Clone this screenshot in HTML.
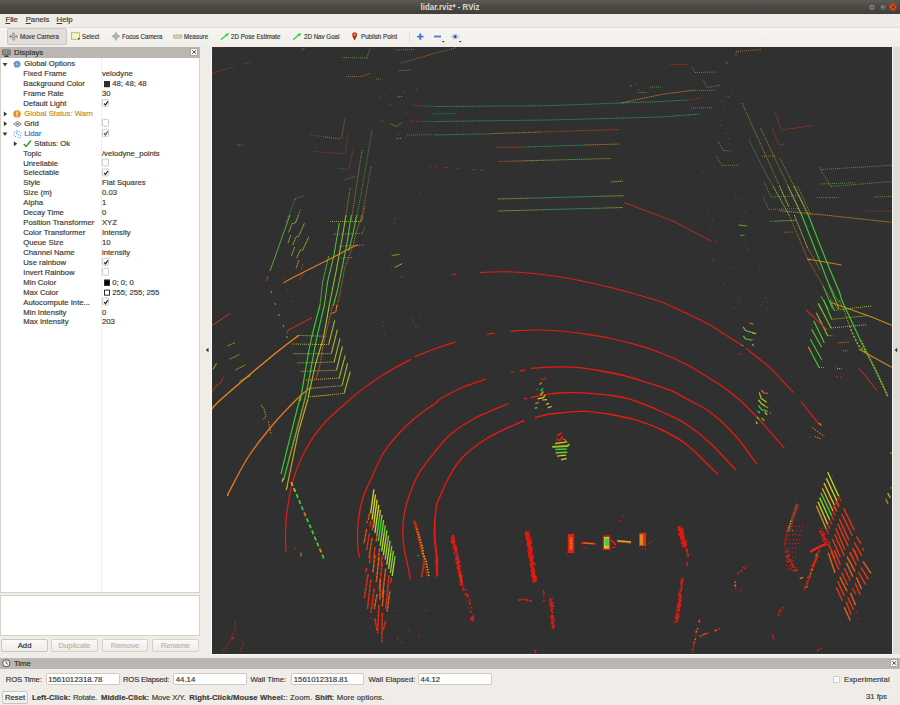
<!DOCTYPE html>
<html><head><meta charset="utf-8"><title>lidar.rviz* - RViz</title>
<style>
*{box-sizing:border-box;margin:0;padding:0}
html,body{width:900px;height:705px;overflow:hidden;background:#f0ede8;font-family:"Liberation Sans",sans-serif;font-size:7.7px;color:#3c3b37;-webkit-text-stroke:0.18px}
.abs{position:absolute}
#title{left:0;top:0;width:900px;height:14px;background:linear-gradient(#5c5a53,#4a4843 55%,#3f3e39)}
#title .t{position:absolute;left:0;width:900px;top:2.2px;text-align:center;color:#dfdbd2;font-weight:bold;font-size:8.3px;line-height:10px;-webkit-text-stroke:0;transform:scaleX(0.95)}
.wb{position:absolute;top:2.8px;width:8.2px;height:8.2px;border-radius:50%;background:#807d76;border:0.6px solid #403f3a}
#menubar{left:0;top:14px;width:900px;height:13px;background:#efece7}
#menubar span{position:absolute;top:1.3px;line-height:10px;font-size:7.75px;color:#3c3b37}
#toolbar{left:0;top:26.5px;width:900px;height:19px;background:linear-gradient(#f7f5f2,#f1eeea);border-top:0.6px solid #e2dfd9}
.tb{position:absolute;top:4.6px;height:10px;line-height:10px;font-size:7.1px;color:#3c3b37;white-space:nowrap;transform-origin:0 50%;transform:scaleX(0.872)}
#displays{left:0;top:47px;width:200px;height:11px;background:#bab6b2}
.hdr{font-size:7.7px;line-height:10px;color:#2e2d2a}
.closeb{position:absolute;width:8.4px;height:8px;background:#fbfaf8;border:0.5px solid #a9a5a0;border-radius:1px}
#tree{left:0.2px;top:58px;width:199.7px;height:534.5px;background:#fff;border:0.7px solid #d5d1cb;border-top:none}
#tree .sep{position:absolute;left:99.4px;top:0;width:0.7px;height:100%;background:#f0eeeb}
.row{position:absolute;left:-0.9px;width:199px;height:10px;line-height:10px;white-space:nowrap;font-size:7.7px}
.row .l{position:absolute;left:23.5px;top:0}
.row .v{position:absolute;left:101.7px;top:0}
.cb{position:absolute;left:101.7px;top:0.3px;width:7.1px;height:7.3px;border:0.55px solid #cdc9c4;background:#fff;border-radius:1.2px}
.sw{position:absolute;left:103.3px;top:1.7px;width:6.4px;height:6.4px;border:0.5px solid #2a2a2a}
#desc{left:0.2px;top:594.8px;width:199.7px;height:40.8px;background:#fff;border:0.7px solid #d5d1cb}
.btn{position:absolute;top:639.3px;height:12.9px;width:47px;border:0.7px solid #c9c5bf;border-radius:2px;background:linear-gradient(#fbfaf9,#efece8);text-align:center;line-height:11.2px;font-size:7.7px;color:#2e2d2a}
.btn.dis{color:#b8b4ae;border-color:#d4d0ca}
#view{left:211.8px;top:46.8px;width:680px;height:607px;background:#303030;overflow:hidden;box-shadow:-0.9px 0 0 #fbfaf8, 0 0.9px 0 #fbfaf8}
#rstrip{left:892px;top:46.5px;width:8px;height:607.5px;background:#dfdcd8;border-left:0.6px solid #f6f4f0}
#timeh{left:0;top:658px;width:900px;height:10.6px;background:#bab6b2}
.inp{position:absolute;top:672.6px;height:12.8px;background:#fff;border:0.7px solid #cdc9c3;border-radius:1.8px;line-height:11px;font-size:7.8px;padding-left:1.6px;color:#3c3b37}
.lab{position:absolute;top:674.8px;line-height:10px;font-size:7.7px;color:#3c3b37;white-space:nowrap}
#status{left:0;top:691px;width:900px;height:14px}
</style></head><body>
<div id="title" class="abs"><div class="t">lidar.rviz* - RViz</div>
<div class="wb" style="left:868px"></div><div class="wb" style="left:878.6px"></div><div class="wb" style="left:889.1px;background:#ea5a22;border-color:#9c3a14"></div>
<svg class="abs" style="left:860px;top:0" width="40" height="14" viewBox="0 0 40 14"><path d="M10 7 H14.3" stroke="#4b4a45" stroke-width="1"/><rect x="20.8" y="5" width="3.9" height="3.9" fill="none" stroke="#4b4a45" stroke-width="0.9"/><path d="M31.4 5.1 L35.1 8.8 M35.1 5.1 L31.4 8.8" stroke="#7c2a0c" stroke-width="1.1"/></svg>
</div>
<div id="menubar" class="abs"><span style="left:5.4px"><u>F</u>ile</span><span style="left:25.7px"><u>P</u>anels</span><span style="left:56.6px"><u>H</u>elp</span></div>
<div id="toolbar" class="abs">
<div class="abs" style="left:6.7px;top:0.7px;width:60.8px;height:16.6px;border:0.7px solid #cbc8c3;border-radius:2px;background:#e2dfdb"></div>
<svg class="abs" style="left:0;top:-0.6px" width="470" height="19" viewBox="0 0 470 19">
<path d="M2.2 4 V15 M3.8 4 V15" stroke="#dedad4" stroke-width="0.6" stroke-dasharray="0.8 1.4"/>
<!-- move camera -->
<g fill="#8c8c8c"><path d="M13.5 5 L15.6 7.4 H14.3 V11.6 H15.6 L13.5 14 L11.4 11.6 H12.7 V7.4 H11.4Z"/><path d="M9 9.5 L10.4 7.6 V8.7 H16.6 V7.6 L18 9.5 L16.6 11.4 V10.3 H10.4 V11.4Z"/></g>
<circle cx="13.5" cy="7" r="0.55" fill="#fff"/><circle cx="13.5" cy="9.5" r="0.55" fill="#fff"/><circle cx="13.5" cy="12" r="0.55" fill="#fff"/>
<!-- select -->
<rect x="71.5" y="5.8" width="8" height="6.4" fill="#f8f6b2" stroke="#8e8d80" stroke-width="0.6"/><rect x="78.2" y="11" width="1.3" height="1.3" fill="#111"/>
<!-- focus camera -->
<path d="M115.9 4.7 L117.6 7.6 L120.6 9.3 L117.6 11 L115.9 13.9 L114.2 11 L111.2 9.3 L114.2 7.6Z" fill="#a8a8a8"/>
<circle cx="115.9" cy="9.3" r="1.6" fill="none" stroke="#c4c4c4" stroke-width="0.6"/><circle cx="115.9" cy="9.3" r="0.6" fill="#c8c8c8"/>
<!-- measure -->
<rect x="173.6" y="7.9" width="8.3" height="3.3" rx="0.5" fill="#dad6a2" stroke="#99978a" stroke-width="0.6"/>
<!-- green arrows -->
<path d="M221.3 12.2 L226.2 8.2" stroke="#1ee035" stroke-width="1.4" stroke-linecap="round"/><path d="M229 6 L227.4 9.6 L225 7.1Z" fill="#1ee035"/>
<path d="M293.6 12.2 L298.5 8.2" stroke="#1ee035" stroke-width="1.4" stroke-linecap="round"/><path d="M301.3 6 L299.7 9.6 L297.3 7.1Z" fill="#1ee035"/>
<!-- publish point pin -->
<path d="M354.6 13.6 C353.6 11 352.1 9.4 352.1 7.8 A2.55 2.55 0 0 1 357.2 7.8 C357.2 9.4 355.6 11 354.6 13.6Z" fill="#c8401e"/><path d="M354.6 13.6 C354 11.8 353.2 10.8 352.6 9.6 H356.6 C356 10.8 355.2 11.8 354.6 13.6Z" fill="#8a3a1a"/><circle cx="354.6" cy="7.7" r="0.9" fill="#f0a080"/>
<!-- separator -->
<path d="M409.6 4.5 V15" stroke="#dcd8d2" stroke-width="0.7"/>
<!-- plus -->
<path d="M420.3 6.4 V12.8 M417.1 9.6 H423.5" stroke="#3b79c9" stroke-width="1.9"/>
<!-- minus -->
<path d="M434 9.5 H441" stroke="#4a84cf" stroke-width="1.9"/><path d="M442 14 H444.6 L443.3 15.4Z" fill="#222"/>
<!-- eye -->
<path d="M451.2 9.8 C453 6.6 457.4 6.6 459.2 9.8 C457.4 12.6 453 12.6 451.2 9.8Z" fill="#e4e6ec" stroke="#9aa0b0" stroke-width="0.5"/><circle cx="455.2" cy="9.6" r="1.7" fill="#3a66b8"/><circle cx="455.2" cy="9.6" r="0.7" fill="#16223c"/>
<path d="M459 14 H461.6 L460.3 15.4Z" fill="#222"/>
</svg>

<div class="tb" style="left:20.1px">Move Camera</div>
<div class="tb" style="left:81.6px">Select</div>
<div class="tb" style="left:122.4px">Focus Camera</div>
<div class="tb" style="left:184.1px">Measure</div>
<div class="tb" style="left:231.1px">2D Pose Estimate</div>
<div class="tb" style="left:303.6px">2D Nav Goal</div>
<div class="tb" style="left:361.1px">Publish Point</div>
</div>
<div id="displays" class="abs hdr"><span class="abs" style="left:14.1px;top:0.6px">Displays</span><div class="closeb" style="left:189.9px;top:1px"></div>
<svg class="abs" style="left:189.9px;top:1px" width="8.4" height="8" viewBox="0 0 8.4 8"><path d="M2.4 2.2 L6 5.8 M6 2.2 L2.4 5.8" stroke="#3c3b37" stroke-width="1"/></svg>
<svg class="abs" style="left:2px;top:1.6px" width="9" height="8.4" viewBox="0 0 9 8.4"><rect x="0.4" y="0.4" width="8.2" height="5.8" rx="0.6" fill="#555" /><rect x="1.1" y="1" width="2.3" height="4.6" fill="#d86a6a"/><rect x="3.4" y="1" width="2.2" height="4.6" fill="#6cc06c"/><rect x="5.6" y="1" width="2.3" height="4.6" fill="#7c7ce0"/><path d="M3.6 6.2 H5.4 L5.8 7.4 H7 V8 H2 V7.4 H3.2Z" fill="#333"/></svg>
</div>
<div id="tree" class="abs"><div class="sep"></div>
<div class="row" style="top:0;transform:translateY(1.25px)"><svg class="abs" style="left:2px;top:3px" width="6" height="5" viewBox="0 0 6 5"><path d="M0.6 0.8 L5.4 0.8 L3 4.2Z" fill="#3c3b37"/></svg><svg class="abs" style="left:13px;top:1px" width="8" height="8" viewBox="0 0 8 8"><circle cx="4" cy="4" r="2.9" fill="#6f9bd6" stroke="#4a79bd" stroke-width="1.3" stroke-dasharray="1.1 0.7"/><circle cx="4" cy="4" r="1" fill="#a9c4e8"/></svg><span class="l" style="left:24px;">Global Options</span></div>
<div class="row" style="top:0;transform:translateY(11.18px)"><span class="l" style="left:23px;">Fixed Frame</span><span class="v">velodyne</span></div>
<div class="row" style="top:0;transform:translateY(21.11px)"><span class="l" style="left:23px;">Background Color</span><div class="sw" style="background:#303030"></div><span class="v" style="left:112px">48; 48; 48</span></div>
<div class="row" style="top:0;transform:translateY(31.04px)"><span class="l" style="left:23px;">Frame Rate</span><span class="v">30</span></div>
<div class="row" style="top:0;transform:translateY(40.97px)"><span class="l" style="left:23px;">Default Light</span><div class="cb"><svg class="abs" style="left:0;top:0" width="6.4" height="6.4" viewBox="0 0 6.4 6.4"><path d="M1.1 3.5 L2.5 5.1 L4.9 1.5" fill="none" stroke="#2a2a2a" stroke-width="1.25"/></svg></div></div>
<div class="row" style="top:0;transform:translateY(50.9px)"><svg class="abs" style="left:3px;top:2px" width="5" height="6" viewBox="0 0 5 6"><path d="M0.8 0.5 L4.2 3 L0.8 5.5Z" fill="#3c3b37"/></svg><svg class="abs" style="left:13px;top:1px" width="8" height="8" viewBox="0 0 8 8"><circle cx="4" cy="4" r="3.7" fill="#f08a1d"/><rect x="3.4" y="1.6" width="1.2" height="3.2" fill="#fff"/><rect x="3.4" y="5.4" width="1.2" height="1.2" fill="#fff"/></svg><span class="l" style="left:24px;color:#c98d26">Global Status: Warn</span></div>
<div class="row" style="top:0;transform:translateY(60.83px)"><svg class="abs" style="left:3px;top:2px" width="5" height="6" viewBox="0 0 5 6"><path d="M0.8 0.5 L4.2 3 L0.8 5.5Z" fill="#3c3b37"/></svg><svg class="abs" style="left:13px;top:2px" width="9" height="7" viewBox="0 0 9 7"><path d="M4.5 0.6 L8.3 3.2 L4.5 5.8 L0.7 3.2Z M2.6 1.9 L6.4 4.5 M6.4 1.9 L2.6 4.5" fill="none" stroke="#555" stroke-width="0.7"/></svg><span class="l" style="left:24px;">Grid</span><div class="cb"></div></div>
<div class="row" style="top:0;transform:translateY(70.76px)"><svg class="abs" style="left:2px;top:3px" width="6" height="5" viewBox="0 0 6 5"><path d="M0.6 0.8 L5.4 0.8 L3 4.2Z" fill="#3c3b37"/></svg><svg class="abs" style="left:13px;top:0.5px" width="9" height="9" viewBox="0 0 9 9"><rect x="1" y="2" width="1" height="1" fill="#3d8fd8"/><rect x="3" y="0.5" width="1" height="1" fill="#3d8fd8"/><rect x="5.5" y="1" width="1" height="1" fill="#3d8fd8"/><rect x="7.5" y="2.5" width="1" height="1" fill="#3d8fd8"/><rect x="0.5" y="4.5" width="1" height="1" fill="#3d8fd8"/><rect x="3" y="3.5" width="1" height="1" fill="#3d8fd8"/><rect x="5" y="4.5" width="1" height="1" fill="#3d8fd8"/><rect x="7" y="5.5" width="1" height="1" fill="#3d8fd8"/><rect x="2" y="6.5" width="1" height="1" fill="#3d8fd8"/><rect x="4.5" y="7" width="1" height="1" fill="#3d8fd8"/><rect x="6.5" y="7.5" width="1" height="1" fill="#3d8fd8"/><rect x="3.8" y="2" width="1" height="1" fill="#3d8fd8"/></svg><span class="l" style="left:24px;color:#1f72c8">Lidar</span><div class="cb"><svg class="abs" style="left:0;top:0" width="6.4" height="6.4" viewBox="0 0 6.4 6.4"><path d="M1.1 3.5 L2.5 5.1 L4.9 1.5" fill="none" stroke="#2a5db0" stroke-width="1.25"/></svg></div></div>
<div class="row" style="top:0;transform:translateY(80.69px)"><svg class="abs" style="left:13px;top:2px" width="5" height="6" viewBox="0 0 5 6"><path d="M0.8 0.5 L4.2 3 L0.8 5.5Z" fill="#3c3b37"/></svg><svg class="abs" style="left:23px;top:1px" width="9" height="8" viewBox="0 0 9 8"><path d="M0.8 4.4 L3 6.8 L8 0.8" fill="none" stroke="#2c9a2c" stroke-width="1.4"/></svg><span class="l" style="left:34px;">Status: Ok</span></div>
<div class="row" style="top:0;transform:translateY(90.62px)"><span class="l" style="left:23px;">Topic</span><span class="v">/velodyne_points</span></div>
<div class="row" style="top:0;transform:translateY(100.55px)"><span class="l" style="left:23px;">Unreliable</span><div class="cb"></div></div>
<div class="row" style="top:0;transform:translateY(110.48px)"><span class="l" style="left:23px;">Selectable</span><div class="cb"><svg class="abs" style="left:0;top:0" width="6.4" height="6.4" viewBox="0 0 6.4 6.4"><path d="M1.1 3.5 L2.5 5.1 L4.9 1.5" fill="none" stroke="#2a2a2a" stroke-width="1.25"/></svg></div></div>
<div class="row" style="top:0;transform:translateY(120.41px)"><span class="l" style="left:23px;">Style</span><span class="v">Flat Squares</span></div>
<div class="row" style="top:0;transform:translateY(130.34px)"><span class="l" style="left:23px;">Size (m)</span><span class="v">0.03</span></div>
<div class="row" style="top:0;transform:translateY(140.27px)"><span class="l" style="left:23px;">Alpha</span><span class="v">1</span></div>
<div class="row" style="top:0;transform:translateY(150.2px)"><span class="l" style="left:23px;">Decay Time</span><span class="v">0</span></div>
<div class="row" style="top:0;transform:translateY(160.13px)"><span class="l" style="left:23px;">Position Transformer</span><span class="v">XYZ</span></div>
<div class="row" style="top:0;transform:translateY(170.06px)"><span class="l" style="left:23px;">Color Transformer</span><span class="v">Intensity</span></div>
<div class="row" style="top:0;transform:translateY(179.99px)"><span class="l" style="left:23px;">Queue Size</span><span class="v">10</span></div>
<div class="row" style="top:0;transform:translateY(189.92px)"><span class="l" style="left:23px;">Channel Name</span><span class="v">intensity</span></div>
<div class="row" style="top:0;transform:translateY(199.85px)"><span class="l" style="left:23px;">Use rainbow</span><div class="cb"><svg class="abs" style="left:0;top:0" width="6.4" height="6.4" viewBox="0 0 6.4 6.4"><path d="M1.1 3.5 L2.5 5.1 L4.9 1.5" fill="none" stroke="#2a2a2a" stroke-width="1.25"/></svg></div></div>
<div class="row" style="top:0;transform:translateY(209.78px)"><span class="l" style="left:23px;">Invert Rainbow</span><div class="cb"></div></div>
<div class="row" style="top:0;transform:translateY(219.71px)"><span class="l" style="left:23px;">Min Color</span><div class="sw" style="background:#000000"></div><span class="v" style="left:112px">0; 0; 0</span></div>
<div class="row" style="top:0;transform:translateY(229.64px)"><span class="l" style="left:23px;">Max Color</span><div class="sw" style="background:#ffffff"></div><span class="v" style="left:112px">255; 255; 255</span></div>
<div class="row" style="top:0;transform:translateY(239.57px)"><span class="l" style="left:23px;">Autocompute Inte...</span><div class="cb"><svg class="abs" style="left:0;top:0" width="6.4" height="6.4" viewBox="0 0 6.4 6.4"><path d="M1.1 3.5 L2.5 5.1 L4.9 1.5" fill="none" stroke="#2a2a2a" stroke-width="1.25"/></svg></div></div>
<div class="row" style="top:0;transform:translateY(249.5px)"><span class="l" style="left:23px;">Min Intensity</span><span class="v">0</span></div>
<div class="row" style="top:0;transform:translateY(259.43px)"><span class="l" style="left:23px;">Max Intensity</span><span class="v">203</span></div>
</div>
<div id="desc" class="abs"></div>
<div class="btn" style="left:1.4px;width:46.4px">Add</div><div class="btn dis" style="left:51.4px;width:46.4px">Duplicate</div><div class="btn dis" style="left:101.6px;width:46.8px">Remove</div><div class="btn dis" style="left:152px;width:46.6px">Rename</div>
<div id="view" class="abs"></div>
<svg class="abs" style="left:0;top:0" width="900" height="705" viewBox="0 0 900 705"><defs><clipPath id="vp"><rect x="212" y="47" width="680" height="607"/></clipPath><linearGradient id="g1" gradientUnits="userSpaceOnUse" x1="498" y1="161.5" x2="611" y2="158.5"><stop offset="0" stop-color="#c03c28"/><stop offset="0.2" stop-color="#c8842c"/><stop offset="0.3" stop-color="#bcb032"/><stop offset="0.45" stop-color="#60b43c"/><stop offset="0.85" stop-color="#60b43c"/><stop offset="1" stop-color="#c8842c"/></linearGradient><linearGradient id="g2" gradientUnits="userSpaceOnUse" x1="498" y1="199" x2="623.5" y2="195.7"><stop offset="0" stop-color="#b0a030"/><stop offset="0.15" stop-color="#70a838"/><stop offset="0.4" stop-color="#30a070"/><stop offset="0.6" stop-color="#2898b0"/><stop offset="0.75" stop-color="#30a070"/><stop offset="0.9" stop-color="#80a838"/><stop offset="1" stop-color="#b0a030"/></linearGradient><linearGradient id="g3" gradientUnits="userSpaceOnUse" x1="498.5" y1="211" x2="623" y2="207.5"><stop offset="0" stop-color="#b88830"/><stop offset="0.15" stop-color="#a0a030"/><stop offset="0.4" stop-color="#40a050"/><stop offset="0.55" stop-color="#2898a8"/><stop offset="0.75" stop-color="#40a050"/><stop offset="1" stop-color="#a8a030"/></linearGradient></defs><g clip-path="url(#vp)" fill="none" stroke-linecap="butt" stroke-linejoin="round">
<path d="M451.5 274.5 C452.25 274.43 455.25 274.17 456 274.1" stroke="#e81a12" stroke-width="1.1"/>
<path d="M479.7 272.5 C483.87 272.37 495.32 271.5 504.7 271.7 C514.08 271.9 524.53 272.45 536 273.7 C547.47 274.95 561 276.9 573.5 279.2 C586 281.5 600.58 285 611 287.5 C621.42 290 627.67 291.83 636 294.2 C644.33 296.57 652.67 298.57 661 301.7 C669.33 304.83 677.67 309.03 686 313 C694.33 316.97 704.5 321.9 711 325.5 C717.5 329.1 719.83 331.32 725 334.6 C730.17 337.88 739.17 343.43 742 345.2" stroke="#e81a12" stroke-width="1.1"/>
<path d="M745.9 348.4 C749.22 351 760.95 359.95 765.8 364 C770.65 368.05 772.3 369.98 775 372.7 C777.7 375.42 778.88 376.97 782 380.3 C785.12 383.63 791.75 390.63 793.7 392.7" stroke="#e81a12" stroke-width="1.1"/>
<path d="M801 401.5 C804.12 405.45 816.58 421.25 819.7 425.2" stroke="#e81a12" stroke-width="1.1"/>
<path d="M286 552.7 C285.92 550 285.33 543.37 285.5 536.5 C285.67 529.63 285.67 521.08 287 511.5 C288.33 501.92 290.33 489.42 293.5 479 C296.67 468.58 301 458.17 306 449 C311 439.83 316 432.42 323.5 424 C331 415.58 343.25 405.22 351 398.5 C358.75 391.78 364.17 387.95 370 383.7 C375.83 379.45 379.17 377.08 386 373 C392.83 368.92 406.83 361.5 411 359.2" stroke="#e81a12" stroke-width="1.2"/>
<path d="M414.7 356.7 C418.25 355.33 429.12 351 436 348.5 C442.88 346 452.67 342.83 456 341.7" stroke="#e81a12" stroke-width="1.2"/>
<path d="M487 334.2 C488.28 334.03 493.42 333.37 494.7 333.2" stroke="#e81a12" stroke-width="1.2"/>
<path d="M510.5 331.2 C514.75 331 527.58 330.03 536 330 C544.42 329.97 552.67 330.3 561 331 C569.33 331.7 577.67 332.95 586 334.2 C594.33 335.45 602.67 336.75 611 338.5 C619.33 340.25 627.67 342.28 636 344.7 C644.33 347.12 652.67 349.75 661 353 C669.33 356.25 677.67 359.83 686 364.2 C694.33 368.57 704.5 375.17 711 379.2 C717.5 383.23 719.95 384.68 725 388.4 C730.05 392.12 735.3 395.98 741.3 401.5 C747.3 407.02 753.77 413.67 761 421.5 C768.23 429.33 780.75 444 784.7 448.5" stroke="#e81a12" stroke-width="1.2"/>
<path d="M359.4 557.8 C359.13 555.95 358.1 551.33 357.8 546.7 C357.5 542.07 357.33 535.57 357.6 530 C357.87 524.43 358.45 518.85 359.4 513.3 C360.35 507.75 361.37 502.42 363.3 496.7 C365.23 490.98 367.22 486.95 371 479 C374.78 471.05 379.33 458.58 386 449 C392.67 439.42 402.67 429.22 411 421.5 C419.33 413.78 431 406.53 436 402.7 C441 398.87 436.83 400.95 441 398.5 C445.17 396.05 453.5 391.22 461 388 C468.5 384.78 481.83 380.67 486 379.2" stroke="#e81a12" stroke-width="1.3"/>
<path d="M511 372.6 C511.42 372.53 513.08 372.27 513.5 372.2" stroke="#e81a12" stroke-width="1.3"/>
<path d="M519.7 371 C520.58 370.83 524.12 370.17 525 370" stroke="#e81a12" stroke-width="1.3"/>
<path d="M531 368.5 C533.92 368.28 541.42 367.42 548.5 367.2 C555.58 366.98 565.17 366.65 573.5 367.2 C581.83 367.75 590.17 369.12 598.5 370.5 C606.83 371.88 615.17 373.42 623.5 375.5 C631.83 377.58 642.25 381.08 648.5 383 C654.75 384.92 656.83 385.55 661 387 C665.17 388.45 669.33 389.78 673.5 391.7 C677.67 393.62 679.75 395 686 398.5 C692.25 402 702.67 406.37 711 412.7 C719.33 419.03 728.3 427.87 736 436.5 C743.7 445.13 753.67 459.83 757.2 464.5" stroke="#e81a12" stroke-width="1.3"/>
<path d="M410.6 579.3 C409.85 575.72 407.22 563.23 406.1 557.8 C404.98 552.37 404.45 551.33 403.9 546.7 C403.35 542.07 402.72 535.57 402.8 530 C402.88 524.43 403.38 518.85 404.4 513.3 C405.42 507.75 406.55 503.25 408.9 496.7 C411.25 490.15 413.98 481.7 418.5 474 C423.02 466.3 430.58 457.17 436 450.5 C441.42 443.83 444.75 439.25 451 434 C457.25 428.75 463.92 424.08 473.5 419 C483.08 413.92 502.67 406.08 508.5 403.5" stroke="#e81a12" stroke-width="1.35"/>
<path d="M524 399 C524.57 398.88 526.83 398.42 527.4 398.3" stroke="#e81a12" stroke-width="1.35"/>
<path d="M530.5 397.5 C533.05 397.02 541.05 395.35 545.8 394.6 C550.55 393.85 554.18 393.32 559 393 C563.82 392.68 569.53 392.63 574.7 392.7 C579.87 392.77 583.95 392.93 590 393.4 C596.05 393.87 605 394.7 611 395.5 C617 396.3 620.58 396.78 626 398.2 C631.42 399.62 637.67 401.78 643.5 404 C649.33 406.22 653.92 408.17 661 411.5 C668.08 414.83 677.67 418.58 686 424 C694.33 429.42 702.67 436.3 711 444 C719.33 451.7 731.83 465.83 736 470.2" stroke="#e81a12" stroke-width="1.35"/>
<path d="M437.2 566 C437.08 564.17 436.93 560 436.5 555 C436.07 550 434.85 542 434.6 536 C434.35 530 434.6 524.33 435 519 C435.4 513.67 435.92 508.33 437 504 C438.08 499.67 439.83 496.83 441.5 493 C443.17 489.17 443.75 486.67 447 481 C450.25 475.33 454.5 466 461 459 C467.5 452 476.17 445.12 486 439 C495.83 432.88 513.67 425.23 520 422.3 C526.33 419.37 523.33 421.55 524 421.4" stroke="#e81a12" stroke-width="1.4"/>
<path d="M437 577 L437.3 566" stroke="#e81a12" stroke-width="1.2" stroke-dasharray="1 1"/>
<path d="M534.8 417.7 C536.88 417.17 542.6 415.35 547.3 414.5 C552 413.65 557.78 413.12 563 412.6 C568.22 412.08 574.1 411.57 578.6 411.4 C583.1 411.23 584.6 411.08 590 411.6 C595.4 412.12 603.33 413.07 611 414.5 C618.67 415.93 627.67 417.7 636 420.2 C644.33 422.7 652.67 425.53 661 429.5 C669.33 433.47 678.5 438.47 686 444 C693.5 449.53 700.67 457.62 706 462.7 C711.33 467.78 716 472.53 718 474.5" stroke="#e81a12" stroke-width="1.4"/>
<path d="M212 73 L235 66.5" stroke="#c03c28" stroke-width="1.0" stroke-dasharray="0.9 1.1" opacity="0.8"/>
<path d="M243.5 64 L251 62.5" stroke="#c03c28" stroke-width="1.0" stroke-dasharray="0.9 1.1" opacity="0.8"/>
<path d="M301 50 L305 48" stroke="#bcb032" stroke-width="1.0" stroke-dasharray="0.9 1.1" opacity="0.8"/>
<path d="M342 57.5 L367 58" stroke="#60b43c" stroke-width="1.0" stroke-dasharray="0.9 1.1" opacity="0.8"/>
<path d="M367 58 L370 48" stroke="#c8842c" stroke-width="1.0" stroke-dasharray="0.9 1.1" opacity="0.8"/>
<path d="M346 76.5 L361 76.5 L371 73" stroke="#c8842c" stroke-width="1.0" stroke-dasharray="0.9 1.1" opacity="0.8"/>
<path d="M395 50 L415 49.5" stroke="#60b43c" stroke-width="1.0" stroke-dasharray="0.9 1.1" opacity="0.8"/>
<path d="M401 63 L436 53 L457 47.5" stroke="#c8842c" stroke-width="1.0" stroke-dasharray="0.9 1.1" opacity="0.8"/>
<path d="M398.5 70.7 L411 70" stroke="#60b43c" stroke-width="1.0" stroke-dasharray="0.9 1.1" opacity="0.8"/>
<path d="M376 79 L382 79" stroke="#60b43c" stroke-width="1.0" stroke-dasharray="0.9 1.1" opacity="0.8"/>
<path d="M397 97 L402 96.5" stroke="#bcb032" stroke-width="1.0" stroke-dasharray="0.9 1.1" opacity="0.8"/>
<path d="M412 105 L422 106" stroke="#c03c28" stroke-width="1.0" stroke-dasharray="0.9 1.1" opacity="0.8"/>
<path d="M423.5 106 L436 106.5" stroke="#30a060" stroke-width="1.0" stroke-dasharray="0.9 1.1" opacity="0.8"/>
<path d="M432 114 L455 113.5" stroke="#30a060" stroke-width="1.0" stroke-dasharray="0.9 1.1" opacity="0.8"/>
<path d="M410 121 L423.5 121.5" stroke="#c03c28" stroke-width="1.0" stroke-dasharray="0.9 1.1" opacity="0.8"/>
<path d="M423.5 121.5 L436 121.5" stroke="#30a060" stroke-width="1.0" stroke-dasharray="0.9 1.1" opacity="0.8"/>
<path d="M390 124 L397 126.5 L402 122" stroke="#bcb032" stroke-width="1.0" stroke-dasharray="0.9 1.1" opacity="0.8"/>
<path d="M407 135 L436 134.7" stroke="#30a060" stroke-width="1.0" stroke-dasharray="0.9 1.1" opacity="0.8"/>
<path d="M396 138.7 L401 138.5" stroke="#bcb032" stroke-width="1.0" stroke-dasharray="0.9 1.1" opacity="0.8"/>
<path d="M344.7 119.5 L341.7 138" stroke="#c8842c" stroke-width="1.0" stroke-dasharray="0.9 1.1" opacity="0.8"/>
<path d="M311 135 L325 137" stroke="#c03c28" stroke-width="1.0" stroke-dasharray="0.9 1.1" opacity="0.8"/>
<path d="M325 137 L333 138" stroke="#bcb032" stroke-width="1.0" stroke-dasharray="0.9 1.1" opacity="0.8"/>
<path d="M333 138 L341 139" stroke="#60b43c" stroke-width="1.0" stroke-dasharray="0.9 1.1" opacity="0.8"/>
<path d="M314.7 151.5 L344.7 154" stroke="#c03c28" stroke-width="1.0" stroke-dasharray="0.9 1.1" opacity="0.8"/>
<path d="M348 135 L345 154" stroke="#c03c28" stroke-width="1.0" stroke-dasharray="0.9 1.1" opacity="0.8"/>
<path d="M337 168 L348.5 169.5" stroke="#c03c28" stroke-width="1.0" stroke-dasharray="0.9 1.1" opacity="0.8"/>
<path d="M353 150 L349 169.5" stroke="#c03c28" stroke-width="1.0" stroke-dasharray="0.9 1.1" opacity="0.8"/>
<path d="M344.7 180 L355.5 176" stroke="#c8842c" stroke-width="1.0" stroke-dasharray="0.9 1.1" opacity="0.8"/>
<path d="M237 145 L242 145" stroke="#60b43c" stroke-width="1.0" stroke-dasharray="0.9 1.1" opacity="0.8"/>
<path d="M372 131 L356 222" stroke="#60b43c" stroke-width="1.0" stroke-dasharray="0.9 1.1" opacity="0.8"/>
<path d="M362 150 L351 222" stroke="#bcb032" stroke-width="1.0" stroke-dasharray="0.9 1.1" opacity="0.8"/>
<path d="M371 167 L361 222" stroke="#c8842c" stroke-width="1.0" stroke-dasharray="0.9 1.1" opacity="0.8"/>
<path d="M350 188 L345 222" stroke="#bcb032" stroke-width="1.0" stroke-dasharray="0.9 1.1" opacity="0.8"/>
<path d="M365 206 L361.5 222" stroke="#c8842c" stroke-width="1.0" stroke-dasharray="0.9 1.1" opacity="0.8"/>
<path d="M330 221.5 L361 221.5" stroke="#60b43c" stroke-width="1.0" stroke-dasharray="0.9 1.1" opacity="0.8"/>
<path d="M303.5 196 L295 199" stroke="#c8842c" stroke-width="1.0" stroke-dasharray="0.9 1.1" opacity="0.8"/>
<path d="M295 199 L286 223" stroke="#60b43c" stroke-width="1.0" stroke-dasharray="0.9 1.1" opacity="0.8"/>
<path d="M300.5 209.5 L296 222" stroke="#bcb032" stroke-width="1.0" stroke-dasharray="0.9 1.1" opacity="0.8"/>
<path d="M391 88 L392.2 88.4" stroke="#c03c28" stroke-width="1.0" opacity="0.8"/>
<path d="M416 89.5 L417.2 89.9" stroke="#c03c28" stroke-width="1.0" opacity="0.8"/>
<path d="M380 97 L381.2 97.4" stroke="#c03c28" stroke-width="1.0" opacity="0.8"/>
<path d="M390 104.5 L391.2 104.9" stroke="#c03c28" stroke-width="1.0" opacity="0.8"/>
<path d="M404 92 L405.2 92.4" stroke="#c03c28" stroke-width="1.0" opacity="0.8"/>
<path d="M405 113 L406.2 113.4" stroke="#c03c28" stroke-width="1.0" opacity="0.8"/>
<path d="M382 120.5 L383.2 120.9" stroke="#c03c28" stroke-width="1.0" opacity="0.8"/>
<path d="M379 121 L380.2 121.4" stroke="#c03c28" stroke-width="1.0" opacity="0.8"/>
<path d="M398 134 L399.2 134.4" stroke="#c03c28" stroke-width="1.0" opacity="0.8"/>
<path d="M430 166.5 L431.2 166.9" stroke="#c03c28" stroke-width="1.0" opacity="0.8"/>
<path d="M420 192 L421.2 192.4" stroke="#c03c28" stroke-width="1.0" opacity="0.8"/>
<path d="M394.5 219.5 L395.7 219.9" stroke="#c03c28" stroke-width="1.0" opacity="0.8"/>
<path d="M436 106.5 L548.5 105.7 L661 101.5 L688.5 100" stroke="#30a060" stroke-width="1.0" stroke-dasharray="1.1 0.7" opacity="0.9"/>
<path d="M436 121.5 L548.5 120 L661 117 L700.5 114" stroke="#30a060" stroke-width="1.0" stroke-dasharray="1.1 0.7" opacity="0.9"/>
<path d="M436 135 L492 133.7" stroke="#30a060" stroke-width="1.0" stroke-dasharray="1.1 0.7" opacity="0.9"/>
<path d="M492 133.6 L540 132" stroke="#c8842c" stroke-width="1.0" stroke-dasharray="1.1 0.7" opacity="0.9"/>
<path d="M540 132 L618.5 129.5" stroke="#c03c28" stroke-width="1.0" stroke-dasharray="1.1 0.7" opacity="0.9"/>
<path d="M496 147.5 L525 147" stroke="#c03c28" stroke-width="1.0" stroke-dasharray="1.1 0.7" opacity="0.9"/>
<path d="M526 147 L586 145" stroke="#30a060" stroke-width="1.0" stroke-dasharray="1.1 0.7" opacity="0.9"/>
<path d="M586 145 L619 144" stroke="#c8842c" stroke-width="1.0" stroke-dasharray="1.1 0.7" opacity="0.9"/>
<path d="M498 161.5 L611 158.5" stroke="url(#g1)" stroke-width="1.0" stroke-dasharray="1.1 0.7" opacity="0.9"/>
<path d="M436 167 L437.2 167" stroke="#c03c28" stroke-width="1.0" opacity="0.8"/>
<path d="M444 167.6 L445.2 167.6" stroke="#c03c28" stroke-width="1.0" opacity="0.8"/>
<path d="M446 167.7 L447.2 167.7" stroke="#c03c28" stroke-width="1.0" opacity="0.8"/>
<path d="M449 167.9 L450.2 167.9" stroke="#c03c28" stroke-width="1.0" opacity="0.8"/>
<path d="M457 168.5 L458.2 168.5" stroke="#c03c28" stroke-width="1.0" opacity="0.8"/>
<path d="M472 169.5 L473.2 169.5" stroke="#c03c28" stroke-width="1.0" opacity="0.8"/>
<path d="M474 169.7 L475.2 169.7" stroke="#c03c28" stroke-width="1.0" opacity="0.8"/>
<path d="M480 170.1 L481.2 170.1" stroke="#c03c28" stroke-width="1.0" opacity="0.8"/>
<path d="M482 170.2 L483.2 170.2" stroke="#c03c28" stroke-width="1.0" opacity="0.8"/>
<path d="M483 170.3 L484.2 170.3" stroke="#c03c28" stroke-width="1.0" opacity="0.8"/>
<path d="M611 182 L623.5 181" stroke="#bcb032" stroke-width="1.0" stroke-dasharray="1.1 0.7" opacity="0.9"/>
<path d="M498 199 L623.5 195.7" stroke="url(#g2)" stroke-width="1.0" stroke-dasharray="1.2 0.5" opacity="0.95"/>
<path d="M498.5 211 L623 207.5" stroke="url(#g3)" stroke-width="1.0" stroke-dasharray="1.2 0.5" opacity="0.95"/>
<path d="M624 202.5 L661 216.5 L675 222 L711 241" stroke="#c42a1e" stroke-width="1.0" opacity="0.95"/>
<path d="M621 103 L661 94.5 L695 90" stroke="#c8842c" stroke-width="1.0" stroke-dasharray="1.1 0.7" opacity="0.9"/>
<path d="M650 87 L661 87" stroke="#60b43c" stroke-width="1.0" stroke-dasharray="0.9 1.1" opacity="0.8"/>
<path d="M638.5 92.5 L647 92.5" stroke="#60b43c" stroke-width="1.0" stroke-dasharray="0.9 1.1" opacity="0.8"/>
<path d="M630.5 85.7 L631.5 85.7" stroke="#bcb032" stroke-width="1"/>
<path d="M636 84.5 L637 84.5" stroke="#c03c28" stroke-width="1"/>
<path d="M638 89.5 L639 89.5" stroke="#c03c28" stroke-width="1"/>
<path d="M212.3 49.7 L215.7 46.5" stroke="#c03c28" stroke-width="1.0" stroke-dasharray="0.9 1.1" opacity="0.8"/>
<path d="M218 47.4 L221 46.8" stroke="#c03c28" stroke-width="1.0" stroke-dasharray="0.9 1.1" opacity="0.8"/>
<path d="M736 55.5 L736 51.5 L761 49.5" stroke="#c8842c" stroke-width="1.0" stroke-dasharray="0.9 1.1" opacity="0.8"/>
<path d="M670 64.5 L687 64.5" stroke="#c03c28" stroke-width="1.0" stroke-dasharray="0.9 1.1" opacity="0.8"/>
<path d="M692 67 L695 72.5" stroke="#c8842c" stroke-width="1.0" stroke-dasharray="0.9 1.1" opacity="0.8"/>
<path d="M695 72.5 L716.5 72" stroke="#60b43c" stroke-width="1.0" stroke-dasharray="0.9 1.1" opacity="0.8"/>
<path d="M695 90.7 L715.5 90.2" stroke="#60b43c" stroke-width="1.0" stroke-dasharray="0.9 1.1" opacity="0.8"/>
<path d="M703.5 80.7 L707 87.5 L721 85" stroke="#c8842c" stroke-width="1.0" stroke-dasharray="0.9 1.1" opacity="0.8"/>
<path d="M690 100 L701 97.7" stroke="#c03c28" stroke-width="1.0" stroke-dasharray="0.9 1.1" opacity="0.8"/>
<path d="M691 108 L712 107.7" stroke="#60b43c" stroke-width="1.0" stroke-dasharray="0.9 1.1" opacity="0.8"/>
<path d="M725 62 L728 63.5" stroke="#bcb032" stroke-width="1.0" stroke-dasharray="0.9 1.1" opacity="0.8"/>
<path d="M721 101.5 L722.2 101.8" stroke="#c03c28" stroke-width="1.0" opacity="0.8"/>
<path d="M724 104 L725.2 104.3" stroke="#c03c28" stroke-width="1.0" opacity="0.8"/>
<path d="M725 96 L726.2 96.3" stroke="#c03c28" stroke-width="1.0" opacity="0.8"/>
<path d="M728 96.5 L729.2 96.8" stroke="#c03c28" stroke-width="1.0" opacity="0.8"/>
<path d="M731 93.5 L732.2 93.8" stroke="#c03c28" stroke-width="1.0" opacity="0.8"/>
<path d="M720 125 L721.2 125.3" stroke="#c03c28" stroke-width="1.0" opacity="0.8"/>
<path d="M725.5 133 L726.7 133.3" stroke="#c03c28" stroke-width="1.0" opacity="0.8"/>
<path d="M728 138.5 L729.2 138.8" stroke="#c03c28" stroke-width="1.0" opacity="0.8"/>
<path d="M701.5 172.5 L702.7 172.8" stroke="#c03c28" stroke-width="1.0" opacity="0.8"/>
<path d="M703.5 196 L704.7 196.3" stroke="#c03c28" stroke-width="1.0" opacity="0.8"/>
<path d="M735 197 L736.2 197.3" stroke="#c03c28" stroke-width="1.0" opacity="0.8"/>
<path d="M738 199 L739.2 199.3" stroke="#c03c28" stroke-width="1.0" opacity="0.8"/>
<path d="M708 208 L709.2 208.3" stroke="#c03c28" stroke-width="1.0" opacity="0.8"/>
<path d="M744.7 211 L745.9 211.3" stroke="#c03c28" stroke-width="1.0" opacity="0.8"/>
<path d="M712 219 L713.2 219.3" stroke="#c03c28" stroke-width="1.0" opacity="0.8"/>
<path d="M741.5 221.5 L742.7 221.8" stroke="#c03c28" stroke-width="1.0" opacity="0.8"/>
<path d="M733 168 L734.2 168.3" stroke="#c03c28" stroke-width="1.0" opacity="0.8"/>
<path d="M742 103 L779.5 186" stroke="#bcb032" stroke-width="1.0" stroke-dasharray="0.9 1.1" opacity="0.8"/>
<path d="M779.5 186 L789 207" stroke="#b4c030" stroke-width="1.0" stroke-dasharray="1.6 0.5"/>
<path d="M760.5 128 L788 186" stroke="#bcb032" stroke-width="1.0" stroke-dasharray="0.9 1.1" opacity="0.8"/>
<path d="M788 186 L801.7 215" stroke="#a8c830" stroke-width="1.05" stroke-dasharray="1.8 0.4"/>
<path d="M749 140 L765 172 L773 186" stroke="#60b43c" stroke-width="1.0" stroke-dasharray="0.9 1.1" opacity="0.8"/>
<path d="M773 186 L789 215" stroke="#70c030" stroke-width="1.0" stroke-dasharray="1.6 0.5"/>
<path d="M780 158 L794 186" stroke="#bcb032" stroke-width="1.0" stroke-dasharray="0.9 1.1" opacity="0.8"/>
<path d="M794 186 L808.3 215" stroke="#a8c830" stroke-width="1.05" stroke-dasharray="1.8 0.4"/>
<path d="M798 187 L811 215" stroke="#bcb032" stroke-width="1.0" stroke-dasharray="0.9 1.1" opacity="0.8"/>
<path d="M762 156.3 L776 155.8" stroke="#c8842c" stroke-width="1.0" stroke-dasharray="0.9 1.1" opacity="0.8"/>
<path d="M774.7 111.5 L781.7 130 L811.7 125.7" stroke="#b43a28" stroke-width="1.0" stroke-dasharray="1.1 0.8" opacity="0.9"/>
<path d="M772 127.5 L778.5 144.5 L786 144" stroke="#b43a28" stroke-width="1.0" stroke-dasharray="1.1 0.8" opacity="0.9"/>
<path d="M718 141.5 L723.5 150.7" stroke="#c8842c" stroke-width="1.0" stroke-dasharray="0.9 1.1" opacity="0.8"/>
<path d="M723.5 150.7 L731 150.7" stroke="#60b43c" stroke-width="1.0" stroke-dasharray="0.9 1.1" opacity="0.8"/>
<path d="M716.5 156.5 L722 165.7" stroke="#c8842c" stroke-width="1.0" stroke-dasharray="0.9 1.1" opacity="0.8"/>
<path d="M722 165.7 L738.5 165.2" stroke="#60b43c" stroke-width="1.0" stroke-dasharray="0.9 1.1" opacity="0.8"/>
<path d="M819 167 L831 186.5" stroke="#60b43c" stroke-width="1.0" stroke-dasharray="0.9 1.1" opacity="0.8"/>
<path d="M821 169.5 L892 165.3" stroke="#60b43c" stroke-width="1.0" stroke-dasharray="0.9 1.1" opacity="0.8"/>
<path d="M831 186.5 L892 181.5" stroke="#60b43c" stroke-width="1.0" stroke-dasharray="0.9 1.1" opacity="0.8"/>
<path d="M819.7 184 L828 183.7" stroke="#c8842c" stroke-width="1.0" stroke-dasharray="0.9 1.1" opacity="0.8"/>
<path d="M828 183.7 L856 182.7" stroke="#60b43c" stroke-width="1.0" stroke-dasharray="0.9 1.1" opacity="0.8"/>
<path d="M817 197.7 L826 197.6" stroke="#c8842c" stroke-width="1.0" stroke-dasharray="0.9 1.1" opacity="0.8"/>
<path d="M826 197.6 L838.5 197.5" stroke="#60b43c" stroke-width="1.0" stroke-dasharray="0.9 1.1" opacity="0.8"/>
<path d="M874 197 L892 196.3" stroke="#60b43c" stroke-width="1.0" stroke-dasharray="0.9 1.1" opacity="0.8"/>
<path d="M866.5 211 L892 211" stroke="#c44424" stroke-width="1.0" stroke-dasharray="0.9 1.1" opacity="0.8"/>
<path d="M779.7 210.7 L824.3 215 L891.5 222.3" stroke="#c8842c" stroke-width="1.0" stroke-dasharray="1.3 0.6" opacity="0.9"/>
<path d="M764 182 L771 197" stroke="#60b43c" stroke-width="1.0" stroke-dasharray="0.9 1.1" opacity="0.8"/>
<path d="M771 197 L799.7 195.7" stroke="#60b43c" stroke-width="1.0" stroke-dasharray="0.9 1.1" opacity="0.8"/>
<path d="M763 197 L769 209.5" stroke="#60b43c" stroke-width="1.0" stroke-dasharray="0.9 1.1" opacity="0.8"/>
<path d="M769 209.5 L798.5 208.7" stroke="#60b43c" stroke-width="1.0" stroke-dasharray="0.9 1.1" opacity="0.8"/>
<path d="M769.7 221.5 L796 220.3" stroke="#60b43c" stroke-width="1.0" stroke-dasharray="0.9 1.1" opacity="0.8"/>
<path d="M290 215 L270 271" stroke="#64b432" stroke-width="0.95" opacity="0.95"/>
<path d="M268 276 L266.5 281" stroke="#c03c28" stroke-width="1"/>
<path d="M298.7 215 L295.3 223 L292 223.7 L288.7 232.3" stroke="#8cb030" stroke-width="1.0" stroke-dasharray="1.8 0.4" opacity="0.95"/>
<path d="M290.7 235 L288 243" stroke="#8cb030" stroke-width="1.0" stroke-dasharray="1.8 0.4" opacity="0.95"/>
<path d="M304.4 223.3 L298.7 236.3 L296 237 L292.7 245" stroke="#a8b030" stroke-width="1.0" stroke-dasharray="1.8 0.4" opacity="0.95"/>
<path d="M294.7 247 L291.3 256.3" stroke="#a8b030" stroke-width="1.0" stroke-dasharray="1.8 0.4" opacity="0.95"/>
<path d="M308.7 237 L302.7 250 L300 250.3 L296.7 258" stroke="#a8b030" stroke-width="1.0" stroke-dasharray="1.8 0.4" opacity="0.95"/>
<path d="M299 260.3 L296 268.3" stroke="#a8b030" stroke-width="1.0" stroke-dasharray="1.8 0.4" opacity="0.95"/>
<path d="M303 263.7 L301 270.3" stroke="#b03c28" stroke-width="1.0" stroke-dasharray="1.8 0.4" opacity="0.95"/>
<path d="M302.7 273.7 L299.3 280.3" stroke="#b03c28" stroke-width="1.0" stroke-dasharray="1.8 0.4" opacity="0.95"/>
<path d="M277.5 265.5 L278.8 265.8" stroke="#c03c28" stroke-width="1.0" opacity="0.8"/>
<path d="M283.5 278 L284.8 278.3" stroke="#c03c28" stroke-width="1.0" opacity="0.8"/>
<path d="M287 290 L288.3 290.3" stroke="#c03c28" stroke-width="1.0" opacity="0.8"/>
<path d="M290.5 301.5 L291.8 301.8" stroke="#c03c28" stroke-width="1.0" opacity="0.8"/>
<path d="M283.3 283 C285.08 282 286.67 280.78 294 277 C301.33 273.22 317.52 265.3 327.3 260.3 C337.08 255.3 347.58 249.55 352.7 247 C357.82 244.45 357.12 245.33 358 245" stroke="#e07c1c" stroke-width="1.15"/>
<path d="M330 221.5 L361 221.5 L363 217" stroke="#9cb030" stroke-width="1.0" stroke-dasharray="0.9 1.1" opacity="0.8"/>
<path d="M333 234.3 L362 233.5 L365 227" stroke="#9cb030" stroke-width="0.9" stroke-dasharray="0.9 1.1" opacity="0.9"/>
<path d="M339 246.3 L364 245" stroke="#9cb030" stroke-width="0.9" stroke-dasharray="0.9 1.1" opacity="0.9"/>
<path d="M341 258 L352 257.5" stroke="#9cb030" stroke-width="0.9" stroke-dasharray="0.9 1.1" opacity="0.9"/>
<path d="M328.7 256.3 L322.7 281.7 L320 305" stroke="#5cc030" stroke-width="1.0" stroke-dasharray="1.6 0.4"/>
<path d="M320 305 C318.33 311.67 313.22 329.45 310 345 C306.78 360.55 302.42 389.3 300.7 398.3 C298.98 407.3 302.98 386.38 299.7 399 C296.42 411.62 284.12 461.5 281 474" stroke="#34d030" stroke-width="1.15"/>
<path d="M339.3 223 L334 255 L327.6 281.7 L324.4 305" stroke="#50c830" stroke-width="1.05"/>
<path d="M324.4 305 C322.88 311.67 318.53 329.45 315.3 345 C312.07 360.55 310.3 375.8 305 398.3 C299.7 420.8 287.08 466.38 283.5 480" stroke="#34d030" stroke-width="1.15"/>
<path d="M346 215 L342.7 235 L336.7 268.3 L329.3 305" stroke="#88c42c" stroke-width="1.05"/>
<path d="M329.3 305 L323.3 338.3 L315.3 365 L308 398.3" stroke="#a4c428" stroke-width="1.1"/>
<path d="M351.3 215 L347.3 241.7 L342 268.3 L337.5 290 L333.2 306" stroke="#50c830" stroke-width="1.05"/>
<path d="M356.7 215 L352.7 235 L348.7 251" stroke="#50c830" stroke-width="1.0"/>
<path d="M362 215 L356.7 231 L352.7 247 L344.7 268.3 L340.7 289.7 L336.7 308.3" stroke="#c07828" stroke-width="1.0" stroke-dasharray="1.2 1.0" opacity="0.95"/>
<path d="M332.7 305 L328.7 322.3 L323.3 345 L320 365 L316 379.7" stroke="#d05820" stroke-width="1.1" stroke-dasharray="1.5 0.9"/>
<path d="M336.7 305 L336 311.7 L331.3 313.7" stroke="#e07a1c" stroke-width="1.0"/>
<path d="M308 399 L298.5 431.5 L287 486.5" stroke="#d8a020" stroke-width="1.15"/>
<path d="M305 399 L296 431 L288 462" stroke="#d86820" stroke-width="1.0" stroke-dasharray="2 1.5"/>
<path d="M298.7 335.4 L325.3 336.3" stroke="#c8b42c" stroke-width="1.0" stroke-dasharray="1.0 1.0" opacity="0.95"/>
<path d="M292 344 L328.7 344.6" stroke="#c8b42c" stroke-width="1.0" stroke-dasharray="1.0 1.0" opacity="0.95"/>
<path d="M293.3 353.7 L331.3 353.7" stroke="#c8b42c" stroke-width="1.0" stroke-dasharray="1.0 1.0" opacity="0.95"/>
<path d="M297.3 363 L334 362" stroke="#c8b42c" stroke-width="1.0" stroke-dasharray="1.0 1.0" opacity="0.95"/>
<path d="M300.7 371.4 L336.4 370.3" stroke="#c8b42c" stroke-width="1.0" stroke-dasharray="1.0 1.0" opacity="0.95"/>
<path d="M306 380.3 L339 378" stroke="#c8b42c" stroke-width="1.0" stroke-dasharray="1.0 1.0" opacity="0.95"/>
<path d="M311.3 388.3 L342 385.7" stroke="#c8b42c" stroke-width="1.0" stroke-dasharray="1.0 1.0" opacity="0.95"/>
<path d="M308 397 L344 393.4" stroke="#c8b42c" stroke-width="1.0" stroke-dasharray="1.0 1.0" opacity="0.95"/>
<path d="M306 380.3 L322 379" stroke="#d05820" stroke-width="1.0" stroke-dasharray="1.0 1.0" opacity="0.95"/>
<path d="M311.3 388.3 L326 387" stroke="#d05820" stroke-width="1.0" stroke-dasharray="1.0 1.0" opacity="0.95"/>
<path d="M315 396.3 L330 395" stroke="#d05820" stroke-width="1.0" stroke-dasharray="1.0 1.0" opacity="0.95"/>
<path d="M334.7 320.3 L328.7 344.3" stroke="#a8c02c" stroke-width="1.05"/>
<path d="M337.3 329.7 L331.3 353.7" stroke="#a8c02c" stroke-width="1.05"/>
<path d="M340 338.3 L334 362.3" stroke="#a8c02c" stroke-width="1.05"/>
<path d="M342.4 346.3 L336.4 370.3" stroke="#a8c02c" stroke-width="1.05"/>
<path d="M345.3 355.4 L339 378.3" stroke="#a8c02c" stroke-width="1.05"/>
<path d="M347.6 363.4 L342 385.7" stroke="#a8c02c" stroke-width="1.05"/>
<path d="M350.3 371.7 L344 393.7" stroke="#a8c02c" stroke-width="1.05"/>
<path d="M211 410 C212.83 408.08 212.17 407.22 222 398.5 C231.83 389.78 257.22 368.22 270 357.7 C282.78 347.18 293.92 339.12 298.7 335.4" stroke="#e8861c" stroke-width="1.35"/>
<path d="M310 387.7 C307.83 389.58 303.08 392.95 297 399 C290.92 405.05 281.58 414.42 273.5 424 C265.42 433.58 256.08 444.83 248.5 456.5 C240.92 468.17 231.42 487.75 228 494" stroke="#e8741c" stroke-width="1.35"/>
<path d="M228 494 L227.5 496" stroke="#9ccc24" stroke-width="1.3"/>
<path d="M212 325.5 L221 319.5 L230.5 313" stroke="#cc3c22" stroke-width="1.0" opacity="0.9"/>
<path d="M286.7 333.7 L288 330.3 L312 317.7" stroke="#c83020" stroke-width="1.05" opacity="0.95"/>
<path d="M211 393 L216 386 L221 382.5 L223.5 376.5" stroke="#c83020" stroke-width="1.1" stroke-dasharray="1.6 0.5" opacity="0.95"/>
<path d="M227.3 346 L235.5 342.5" stroke="#b0b82c" stroke-width="1.0" stroke-dasharray="1.2 0.6" opacity="0.9"/>
<path d="M229.7 359.3 L239.7 354.3" stroke="#b0b82c" stroke-width="1.0" stroke-dasharray="1.2 0.6" opacity="0.9"/>
<path d="M235.3 370 L245.3 365" stroke="#b0b82c" stroke-width="1.0" stroke-dasharray="1.2 0.6" opacity="0.9"/>
<path d="M239.7 381 L251 375.5" stroke="#b0b82c" stroke-width="1.0" stroke-dasharray="1.2 0.6" opacity="0.9"/>
<path d="M213 369.3 L216.5 363.5" stroke="#60b830" stroke-width="1.1"/>
<path d="M271 291 L271.6 293" stroke="#70b030" stroke-width="1.1" opacity="0.9"/>
<path d="M275 303 L275.6 305" stroke="#70b030" stroke-width="1.1" opacity="0.9"/>
<path d="M278.7 314 L279.3 316" stroke="#70b030" stroke-width="1.1" opacity="0.9"/>
<path d="M283 325 L283.6 327" stroke="#70b030" stroke-width="1.1" opacity="0.9"/>
<path d="M286.7 336 L287.3 338" stroke="#70b030" stroke-width="1.1" opacity="0.9"/>
<path d="M393.5 223 L394.7 223.5" stroke="#b83424" stroke-width="1.0" opacity="0.85"/>
<path d="M394 245.5 L395.2 246" stroke="#b83424" stroke-width="1.0" opacity="0.85"/>
<path d="M390.5 254.3 L391.7 254.8" stroke="#b83424" stroke-width="1.0" opacity="0.85"/>
<path d="M390 267.5 L391.2 268" stroke="#b83424" stroke-width="1.0" opacity="0.85"/>
<path d="M391.5 271.7 L392.7 272.2" stroke="#b83424" stroke-width="1.0" opacity="0.85"/>
<path d="M383.5 318 L384.7 318.5" stroke="#b83424" stroke-width="1.0" opacity="0.85"/>
<path d="M383 322 L384.2 322.5" stroke="#b83424" stroke-width="1.0" opacity="0.85"/>
<path d="M382 326 L383.2 326.5" stroke="#b83424" stroke-width="1.0" opacity="0.85"/>
<path d="M384 333.7 L385.2 334.2" stroke="#b83424" stroke-width="1.0" opacity="0.85"/>
<path d="M411 318 L412.2 318.5" stroke="#b83424" stroke-width="1.0" opacity="0.85"/>
<path d="M412 321 L413.2 321.5" stroke="#b83424" stroke-width="1.0" opacity="0.85"/>
<path d="M419.5 315 L420.7 315.5" stroke="#b83424" stroke-width="1.0" opacity="0.85"/>
<path d="M415 326.7 L416.2 327.2" stroke="#b83424" stroke-width="1.0" opacity="0.85"/>
<path d="M417 326.7 L418.2 327.2" stroke="#b83424" stroke-width="1.0" opacity="0.85"/>
<path d="M392.3 255.5 L399.7 254.3" stroke="#70b030" stroke-width="1.0" opacity="0.9"/>
<path d="M394.7 267.5 L402.3 263.5" stroke="#b0b030" stroke-width="1.0" opacity="0.9"/>
<path d="M401.5 276.7 L402 277.5" stroke="#b0a030" stroke-width="1.0"/>
<path d="M261 405 L264 409 L266 416 L263 420" stroke="#c8a828" stroke-width="1.0" stroke-dasharray="1.5 1" opacity="0.9"/>
<path d="M268.5 421.5 L271 434" stroke="#c8a828" stroke-width="1.0" stroke-dasharray="1.5 1.2" opacity="0.9"/>
<path d="M775 221 L795.7 220.3" stroke="#60b43c" stroke-width="1.0" stroke-dasharray="0.9 1.1" opacity="0.8"/>
<path d="M784.3 232.3 L793 232" stroke="#c8842c" stroke-width="1.0" stroke-dasharray="0.9 1.1" opacity="0.8"/>
<path d="M789 215 L807.7 259 L828.3 295 L837.7 309" stroke="#c86828" stroke-width="1.0" stroke-dasharray="1.2 1.0" opacity="0.95"/>
<path d="M794.3 215 L807.7 248.3" stroke="#a0b830" stroke-width="1.0" stroke-dasharray="1.5 0.5"/>
<path d="M807.7 248.3 L813.7 257.7 L820 270" stroke="#d07828" stroke-width="1.0" stroke-dasharray="1.2 1.0"/>
<path d="M801.7 215 L821 264.3 L831 289.7 L839 309" stroke="#34d030" stroke-width="1.1"/>
<path d="M808.3 215 C811.53 223.22 822.58 251.63 827.7 264.3 C832.82 276.97 836.67 285.05 839 291 C841.33 296.95 839.7 295.17 841.7 300 C843.7 304.83 847.9 313.33 851 320 C854.1 326.67 858.75 336.67 860.3 340" stroke="#34d030" stroke-width="1.15"/>
<path d="M860.3 340 L868.3 356 L876.3 372 L885.7 392 L888 397" stroke="#4cd030" stroke-width="1.5" stroke-dasharray="2.2 0.8"/>
<path d="M861.5 341 L869.5 357 L877.5 373 L886.9 393" stroke="#e07020" stroke-width="1.4" stroke-dasharray="0.9 2.1"/>
<path d="M839 300 L845 313 L849.5 326" stroke="#c89028" stroke-width="1.0" stroke-dasharray="1.2 1.2"/>
<path d="M849.5 326 L853 334 L858.3 345.3 L868.3 354.7" stroke="#58c830" stroke-width="1.4" stroke-dasharray="2 1.6"/>
<path d="M850.5 329.5 L854 337 L859.3 347" stroke="#e08020" stroke-width="1.3" stroke-dasharray="1 2.6"/>
<path d="M807.7 259 L841.7 265" stroke="#d08820" stroke-width="1.0" opacity="0.95"/>
<path d="M831 302.5 L871 316.7 L891.7 325.3" stroke="#d08820" stroke-width="1.1"/>
<path d="M859 349.3 L891.7 367.3" stroke="#d08820" stroke-width="1.1"/>
<path d="M821 296.3 L828.3 309" stroke="#40c030" stroke-width="1.0"/>
<path d="M823 285.7 L832.3 308.3" stroke="#40c030" stroke-width="1.0"/>
<path d="M818.3 304.3 L821 309" stroke="#40c030" stroke-width="1.0"/>
<path d="M829.7 285 L839 303" stroke="#c8b42c" stroke-width="0.9" stroke-dasharray="0.9 1.1"/>
<path d="M829.7 300 L834.3 310.4" stroke="#48c830" stroke-width="1.1"/>
<path d="M834.3 310.4 L871 306" stroke="#a8c02c" stroke-width="1.0" stroke-dasharray="1.0 1.0" opacity="0.95"/>
<path d="M823.7 300 L831.7 319.3" stroke="#48c830" stroke-width="1.1"/>
<path d="M831.7 319.3 L867 315.7" stroke="#a8c02c" stroke-width="1.0" stroke-dasharray="1.0 1.0" opacity="0.95"/>
<path d="M818.3 303.3 L831 328" stroke="#78c830" stroke-width="1.1"/>
<path d="M831 328 L867 324.7" stroke="#c8b42c" stroke-width="1.0" stroke-dasharray="1.0 1.0" opacity="0.95"/>
<path d="M816.3 312.7 L827.7 335.7" stroke="#78c830" stroke-width="1.1"/>
<path d="M827.7 335.7 L832.3 335.7" stroke="#c8b42c" stroke-width="1.0" stroke-dasharray="1.0 1.0" opacity="0.95"/>
<path d="M813.7 320.7 L824.3 342.7" stroke="#58c830" stroke-width="1.1"/>
<path d="M811.7 329.3 L821.7 347.3" stroke="#58c830" stroke-width="1.1"/>
<path d="M810.3 339.3 L821.7 359.7" stroke="#48c830" stroke-width="1.1"/>
<path d="M808.3 346.7 L811 352" stroke="#d89028" stroke-width="1.1"/>
<path d="M811 352 L819 367.3" stroke="#48c830" stroke-width="1.1"/>
<path d="M819 367.5 L823.7 367.6" stroke="#c8b42c" stroke-width="1.0" stroke-dasharray="1.0 1.0" opacity="0.95"/>
<path d="M806.3 310 L827.7 330.4" stroke="#cc2a1c" stroke-width="1.05"/>
<path d="M859 368.7 L865.7 376 L877 390.7" stroke="#cc2a1c" stroke-width="1.05"/>
<path d="M838.3 342.7 L849 342" stroke="#e07a1c" stroke-width="1.0" stroke-dasharray="1.0 1.0" opacity="0.95"/>
<path d="M843 351 L847.7 350.7" stroke="#e07a1c" stroke-width="1.0" stroke-dasharray="1.0 1.0" opacity="0.95"/>
<path d="M837 368.7 L841.7 368.7" stroke="#d4cc24" stroke-width="1.0" stroke-dasharray="1.0 1.0" opacity="0.95"/>
<path d="M836.3 376 L838 376.7" stroke="#e81a12" stroke-width="1.1"/>
<path d="M840 377 L841.7 377.3" stroke="#e81a12" stroke-width="1.1"/>
<path d="M835.5 366.7 L836.5 367" stroke="#e81a12" stroke-width="1.1"/>
<path d="M807 259 L810 260" stroke="#d08820" stroke-width="1"/>
<path d="M711 230 L712.3 230.5" stroke="#c02c20" stroke-width="1.0" opacity="0.85"/>
<path d="M716 241 L717.3 241.5" stroke="#c02c20" stroke-width="1.0" opacity="0.85"/>
<path d="M712 258 L713.3 258.5" stroke="#c02c20" stroke-width="1.0" opacity="0.85"/>
<path d="M713.5 260.5 L714.8 261" stroke="#c02c20" stroke-width="1.0" opacity="0.85"/>
<path d="M730.5 268 L731.8 268.5" stroke="#c02c20" stroke-width="1.0" opacity="0.85"/>
<path d="M723 283 L724.3 283.5" stroke="#c02c20" stroke-width="1.0" opacity="0.85"/>
<path d="M745 244.5 L746.3 245" stroke="#c02c20" stroke-width="1.0" opacity="0.85"/>
<path d="M747 249 L748.3 249.5" stroke="#c02c20" stroke-width="1.0" opacity="0.85"/>
<path d="M759 268.5 L760.3 269" stroke="#c02c20" stroke-width="1.0" opacity="0.85"/>
<path d="M737.5 297.5 L738.8 298" stroke="#c02c20" stroke-width="1.0" opacity="0.85"/>
<path d="M739 301 L740.3 301.5" stroke="#c02c20" stroke-width="1.0" opacity="0.85"/>
<path d="M733.5 307.5 L734.8 308" stroke="#c02c20" stroke-width="1.0" opacity="0.85"/>
<path d="M765 298 L766.3 298.5" stroke="#c02c20" stroke-width="1.0" opacity="0.85"/>
<path d="M767 302 L768.3 302.5" stroke="#c02c20" stroke-width="1.0" opacity="0.85"/>
<path d="M761 305 L762.3 305.5" stroke="#c02c20" stroke-width="1.0" opacity="0.85"/>
<path d="M766 308 L767.3 308.5" stroke="#c02c20" stroke-width="1.0" opacity="0.85"/>
<path d="M770 307.3 L771.3 307.8" stroke="#c02c20" stroke-width="1.0" opacity="0.85"/>
<path d="M737.5 354.3 L738.8 354.8" stroke="#c02c20" stroke-width="1.0" opacity="0.85"/>
<path d="M740 353.5 L741.3 354" stroke="#c02c20" stroke-width="1.0" opacity="0.85"/>
<path d="M738.5 225 L747 226" stroke="#60b030" stroke-width="1.0" opacity="0.9"/>
<path d="M739.7 235.5 L744.7 235" stroke="#60b030" stroke-width="0.9" opacity="0.85"/>
<path d="M540.3 377.8 L542.7 379.8 L545.4 379 L545.8 376.6" stroke="#e81a12" stroke-width="1.1"/>
<path d="M539.5 384.5 L541.9 382.5" stroke="#e07a1c" stroke-width="1.2"/>
<path d="M540.7 391 L543 388.4" stroke="#34d030" stroke-width="1.3"/>
<path d="M537 389 L537.6 389.6" stroke="#e07a1c" stroke-width="1.2"/>
<path d="M540.3 395 L543.4 391.5" stroke="#9ccc24" stroke-width="1.3"/>
<path d="M537.6 398.9 L543.4 397.7 L545 395" stroke="#d4cc24" stroke-width="1.2"/>
<path d="M542.3 400 L547 399.7" stroke="#d4cc24" stroke-width="1.2"/>
<path d="M535.2 403.6 L538.7 402.4" stroke="#e07a1c" stroke-width="1.2"/>
<path d="M546.2 404.4 L548.9 403.4" stroke="#d4cc24" stroke-width="1.2"/>
<path d="M534.8 408.3 L537.2 407.5" stroke="#34d030" stroke-width="1.4"/>
<path d="M547.7 407.9 L551.6 406.3" stroke="#9ccc24" stroke-width="1.3"/>
<path d="M557 435.5 L561.6 433" stroke="#e81a12" stroke-width="1.6"/>
<path d="M556.5 439.2 L559.9 440.3 L562.7 436.1" stroke="#e81a12" stroke-width="1.5"/>
<path d="M562.5 438.5 L566 440.5 L567 442.5" stroke="#e07a1c" stroke-width="1.0"/>
<path d="M555 443.5 L566.7 442" stroke="#d8b020" stroke-width="1.3"/>
<path d="M552.2 446.9 L567.3 446 L569.3 444.3" stroke="#9ccc24" stroke-width="1.8"/>
<path d="M555.3 449.4 L566.7 448.9" stroke="#34d030" stroke-width="1.5"/>
<path d="M556 452.8 L567.3 452.3" stroke="#70d028" stroke-width="1.5"/>
<path d="M557 456.3 L561 455.6" stroke="#e09020" stroke-width="1.5"/>
<path d="M561 455.6 L566.1 455.1" stroke="#d4cc24" stroke-width="1.4"/>
<path d="M561 459.7 L566.7 458.5" stroke="#9ccc24" stroke-width="1.5"/>
<path d="M555.3 452.5 L555.8 454" stroke="#e81a12" stroke-width="1.2"/>
<path d="M553 444.5 L553.8 445" stroke="#e81a12" stroke-width="1.1"/>
<path d="M749.5 323.2 L753.5 324" stroke="#e07a1c" stroke-width="1.0"/>
<path d="M743 326.7 L745.4 330.5 L752 332.6" stroke="#68c830" stroke-width="1.1"/>
<path d="M752 332.6 L756 333.8" stroke="#d4cc24" stroke-width="1.1"/>
<path d="M743.3 335.9 L745.4 338.7 L752 340.3" stroke="#68c830" stroke-width="1.1"/>
<path d="M753 339.5 L754 339.7" stroke="#e07a1c" stroke-width="1"/>
<path d="M752 344.4 L753.5 345.5" stroke="#d4cc24" stroke-width="1.1"/>
<path d="M741.5 345.2 L743.5 345.8" stroke="#e07a1c" stroke-width="1.1"/>
<path d="M761.2 390.4 L764.2 393 L768.2 393.3" stroke="#e07a1c" stroke-width="1.1"/>
<path d="M759.3 392.5 L761 398.2 L766.6 402.3" stroke="#9ccc24" stroke-width="1.2"/>
<path d="M758.4 399.8 L761.7 404 L765 406" stroke="#d4cc24" stroke-width="1.2"/>
<path d="M765 406 L768.2 408" stroke="#e07a1c" stroke-width="1.2"/>
<path d="M758.4 405.5 L761.7 409.6 L767.7 411.3" stroke="#34d030" stroke-width="1.2"/>
<path d="M757.6 411 L760 413" stroke="#34d030" stroke-width="1.2"/>
<path d="M765 412 L767 414.8" stroke="#d4cc24" stroke-width="1.2"/>
<path d="M770.3 412.5 L770.6 413.5" stroke="#e07a1c" stroke-width="1.1"/>
<path d="M756.8 417 L759.3 419.4" stroke="#34d030" stroke-width="1.3"/>
<path d="M761.7 418 L764.2 420.7" stroke="#34d030" stroke-width="1.3"/>
<path d="M756 421.8 L757.3 424" stroke="#d4cc24" stroke-width="1.2"/>
<path d="M812 427.5 L824.5 436.5" stroke="#e07a1c" stroke-width="1.0" stroke-dasharray="2 1"/>
<path d="M814.7 436.5 L821 439" stroke="#e07a1c" stroke-width="1.0" stroke-dasharray="1.5 1"/>
<path d="M819 423 L821.5 425.5" stroke="#e07a1c" stroke-width="1.1"/>
<path d="M809.5 437 L810.5 437.3" stroke="#e81a12" stroke-width="1.1"/>
<rect x="567.8" y="534" width="6.4" height="19" fill="#e02010"/>
<rect x="569.5" y="537" width="3" height="13" fill="#e85818" opacity="0.9"/>
<path d="M571 540 L571 548" stroke="#d8c030" stroke-width="0.9" stroke-dasharray="0.8 2.2"/>
<path d="M581.3 542.7 L595.6 543.9" stroke="#e82c10" stroke-width="1.9"/>
<path d="M584 543 L593 543.6" stroke="#e07018" stroke-width="0.9"/>
<path d="M582 546 L583 546.3" stroke="#e81a12" stroke-width="1"/>
<path d="M584 547 L585 547.3" stroke="#e81a12" stroke-width="1"/>
<path d="M586.5 548.5 L587.5 548.8" stroke="#e81a12" stroke-width="1"/>
<rect x="603" y="535.5" width="7.2" height="14.5" fill="#e02410"/>
<rect x="604" y="537" width="5.2" height="11.5" fill="#d8c828"/>
<rect x="604.7" y="538.5" width="4.1" height="7.5" fill="#38d060"/>
<path d="M603.3 535.5 L603.3 550" stroke="#e81a12" stroke-width="0.9"/>
<path d="M609.8 535 L609.8 550" stroke="#e81a12" stroke-width="0.9"/>
<path d="M611 540.5 L613.5 542 L616 545.5" stroke="#e81a12" stroke-width="1.6"/>
<path d="M612 547.5 L615.5 547.5" stroke="#e81a12" stroke-width="1.0"/>
<path d="M617.2 540.8 L631 542.2" stroke="#d8b020" stroke-width="1.7"/>
<path d="M617.2 541.9 L631 543.3" stroke="#e03010" stroke-width="0.7"/>
<rect x="639" y="533" width="7" height="13" fill="#e03410"/>
<rect x="640" y="534.5" width="3" height="10.5" fill="#e09020" opacity="0.9"/>
<path d="M644.5 532.5 L645.5 541" stroke="#e81a12" stroke-width="1.5" stroke-dasharray="1 0.6"/>
<path d="M622.2 516 L623.4 516.3" stroke="#e81a12" stroke-width="1.2"/>
<path d="M619.8 520.6 L621 520.9" stroke="#e81a12" stroke-width="1.2"/>
<path d="M650.6 541.7 L651.8 542" stroke="#e81a12" stroke-width="1.2"/>
<path d="M648.5 543.5 L649.7 543.8" stroke="#e81a12" stroke-width="1.2"/>
<path d="M642 548.7 L643.2 549" stroke="#e81a12" stroke-width="1.2"/>
<path d="M645 549.3 L646.2 549.6" stroke="#e81a12" stroke-width="1.2"/>
<path d="M566 553.5 L567.2 553.8" stroke="#e81a12" stroke-width="1.2"/>
<path d="M291.2 482.1 L292.8 485.9" stroke="#e0a020" stroke-width="1.7"/>
<path d="M293.8 488.1 L295.4 491.9" stroke="#9cd028" stroke-width="1.7"/>
<path d="M296.4 494.2 L298 498" stroke="#40d030" stroke-width="1.7"/>
<path d="M298.9 500.2 L300.6 504" stroke="#40d030" stroke-width="1.7"/>
<path d="M301.5 506.3 L303.1 510.1" stroke="#30c878" stroke-width="1.7"/>
<path d="M304.1 512.3 L305.7 516.1" stroke="#d87020" stroke-width="1.7"/>
<path d="M306.7 518.4 L308.3 522.1" stroke="#40d030" stroke-width="1.7"/>
<path d="M309.3 524.4 L310.9 528.2" stroke="#40d030" stroke-width="1.7"/>
<path d="M311.9 530.4 L313.5 534.2" stroke="#40d030" stroke-width="1.7"/>
<path d="M314.4 536.5 L316.1 540.3" stroke="#40d030" stroke-width="1.7"/>
<path d="M317 542.5 L318.6 546.3" stroke="#40d030" stroke-width="1.7"/>
<path d="M319.6 548.6 L321.2 552.4" stroke="#e09020" stroke-width="1.7"/>
<path d="M322.2 554.6 L323.8 558.4" stroke="#40d030" stroke-width="1.7"/>
<path d="M294.5 549 L296.5 548.2" stroke="#e81a12" stroke-width="1.1"/>
<path d="M301 552.5 L301 556.5" stroke="#e07a1c" stroke-width="1.1"/>
<path d="M287.5 486 L286 490" stroke="#d8a020" stroke-width="1.3"/>
<path d="M283.5 478 L282 482" stroke="#a0d028" stroke-width="1.3"/>
<path d="M373.9 489.4 L370.6 513.4" stroke="#dcd41c" stroke-width="1.3"/>
<path d="M375.5 494.5 L372.1 519.5" stroke="#dcd41c" stroke-width="1.3"/>
<path d="M377.1 499.6 L373.3 527.6" stroke="#dcd41c" stroke-width="1.3"/>
<path d="M378.8 504.8 L374.9 532.8" stroke="#dcd41c" stroke-width="1.3"/>
<path d="M380.4 509.9 L379.5 516.4" stroke="#d8c020" stroke-width="1.3"/>
<path d="M379.5 516.4 L376.8 535.9" stroke="#30dc30" stroke-width="1.35"/>
<path d="M382 515 L381.1 521.5" stroke="#d8c020" stroke-width="1.3"/>
<path d="M381.1 521.5 L378.4 541" stroke="#30dc30" stroke-width="1.35"/>
<path d="M383.6 520.1 L382.6 527.9" stroke="#90d828" stroke-width="1.3"/>
<path d="M382.6 527.9 L380.1 546.1" stroke="#88d828" stroke-width="1.3"/>
<path d="M385.3 525.3 L384.2 533.1" stroke="#60dc28" stroke-width="1.3"/>
<path d="M384.2 533.1 L381.7 551.3" stroke="#c0d824" stroke-width="1.3"/>
<path d="M386.9 530.4 L385.9 537.9" stroke="#90d828" stroke-width="1.3"/>
<path d="M385.9 537.9 L383.4 555.4" stroke="#c0d824" stroke-width="1.3"/>
<path d="M388.5 535.5 L387.5 542.7" stroke="#60dc28" stroke-width="1.3"/>
<path d="M387.5 542.7 L385.2 559.5" stroke="#88d828" stroke-width="1.3"/>
<path d="M390.1 540.6 L389.1 547.8" stroke="#90d828" stroke-width="1.3"/>
<path d="M389.1 547.8 L386.8 564.6" stroke="#c0d824" stroke-width="1.3"/>
<path d="M391.8 545.8 L390.8 552.7" stroke="#60dc28" stroke-width="1.3"/>
<path d="M390.8 552.7 L388.6 568.8" stroke="#c0d824" stroke-width="1.3"/>
<path d="M393.4 550.9 L392.5 557.5" stroke="#90d828" stroke-width="1.3"/>
<path d="M392.5 557.5 L390.4 572.9" stroke="#88d828" stroke-width="1.3"/>
<path d="M395 556 L394.2 562" stroke="#60dc28" stroke-width="1.3"/>
<path d="M394.2 562 L392.2 576" stroke="#c0d824" stroke-width="1.3"/>
<path d="M369.4 513.3 L368.3 520" stroke="#e85014" stroke-width="1.35" stroke-dasharray="4 0.5"/>
<path d="M370.8 521 L370 526.7" stroke="#e83410" stroke-width="1.35" stroke-dasharray="4 0.5"/>
<path d="M366.7 529 L363.9 543.3" stroke="#e85014" stroke-width="1.35" stroke-dasharray="4 0.5"/>
<path d="M369.4 533.3 L366.7 550" stroke="#e83410" stroke-width="1.35" stroke-dasharray="4 0.5"/>
<path d="M372.2 537.8 L368.9 557.8" stroke="#e85014" stroke-width="1.35" stroke-dasharray="4 0.5"/>
<path d="M375 546.7 L373.9 557.8" stroke="#e83410" stroke-width="1.35" stroke-dasharray="4 0.5"/>
<path d="M377.2 533.3 L376.1 542.2" stroke="#e85014" stroke-width="1.35" stroke-dasharray="4 0.5"/>
<path d="M373.5 522 L372.3 531" stroke="#e83410" stroke-width="1.35" stroke-dasharray="4 0.5"/>
<path d="M379.7 548 L378.2 560" stroke="#e85014" stroke-width="1.35" stroke-dasharray="4 0.5"/>
<path d="M382.3 556 L381 566" stroke="#e83410" stroke-width="1.35" stroke-dasharray="4 0.5"/>
<path d="M367.2 521 L366.7 523" stroke="#e85014" stroke-width="1.35" stroke-dasharray="4 0.5"/>
<path d="M370.2 555 L369.5 563.1" stroke="#e82c10" stroke-width="1.45" stroke-dasharray="4 0.5"/>
<path d="M374.9 555 L372.9 572.5" stroke="#e85a16" stroke-width="1.45" stroke-dasharray="4 0.5"/>
<path d="M379 557.7 L376.3 582" stroke="#e85a16" stroke-width="1.45" stroke-dasharray="4 0.5"/>
<path d="M382.3 563.1 L379 588.7" stroke="#e82c10" stroke-width="1.45" stroke-dasharray="4 0.5"/>
<path d="M385.7 568.5 L382.3 596.8" stroke="#e85a16" stroke-width="1.45" stroke-dasharray="4 0.5"/>
<path d="M389.1 575.2 L385.7 608.9" stroke="#e82c10" stroke-width="1.45" stroke-dasharray="4 0.5"/>
<path d="M391.8 577.9 L390.4 583.3" stroke="#e82c10" stroke-width="1.45" stroke-dasharray="4 0.5"/>
<path d="M366.8 567.8 L365.5 572.5" stroke="#e82c10" stroke-width="1.45" stroke-dasharray="4 0.5"/>
<path d="M368.2 573.9 L364.2 598.1" stroke="#e82c10" stroke-width="1.45" stroke-dasharray="4 0.5"/>
<path d="M370.9 579.3 L367.5 608.9" stroke="#e82c10" stroke-width="1.45" stroke-dasharray="4 0.5"/>
<path d="M374.3 588.7 L370.9 613" stroke="#e82c10" stroke-width="1.45" stroke-dasharray="4 0.5"/>
<path d="M377 594.1 L374.3 608.9" stroke="#e85a16" stroke-width="1.45" stroke-dasharray="4 0.5"/>
<path d="M379 604.9 L377.6 633.2" stroke="#e82c10" stroke-width="1.45" stroke-dasharray="4 0.5"/>
<path d="M382.3 613 L381.7 642.6" stroke="#e82c10" stroke-width="1.45" stroke-dasharray="4 0.5"/>
<path d="M385.7 621 L383 630.5" stroke="#e82c10" stroke-width="1.45" stroke-dasharray="4 0.5"/>
<path d="M389.8 591.4 L387.1 611.6" stroke="#e85a16" stroke-width="1.45" stroke-dasharray="4 0.5"/>
<path d="M374.9 618.3 L377 630.5" stroke="#e82c10" stroke-width="1.45" stroke-dasharray="4 0.5"/>
<path d="M380.3 579.3 L379.9 599.5" stroke="#e85a16" stroke-width="1.45" stroke-dasharray="4 0.5"/>
<path d="M383.7 590 L382.3 606.2" stroke="#e85a16" stroke-width="1.45" stroke-dasharray="4 0.5"/>
<path d="M370.2 618 L371.4 618.3" stroke="#e81a12" stroke-width="1.2"/>
<path d="M374.3 621 L375.5 621.3" stroke="#e81a12" stroke-width="1.2"/>
<path d="M396.9 610 L398.1 610.3" stroke="#e81a12" stroke-width="1.2"/>
<path d="M408.4 630.5 L409.6 630.8" stroke="#e81a12" stroke-width="1.2"/>
<path d="M425.5 610 L426.7 610.3" stroke="#e81a12" stroke-width="1.2"/>
<path d="M418 636 L419.2 636.3" stroke="#e81a12" stroke-width="1.2"/>
<path d="M397 639 L398.2 639.3" stroke="#e81a12" stroke-width="1.2"/>
<path d="M401 642 L402.2 642.3" stroke="#e81a12" stroke-width="1.2"/>
<path d="M413.9 520.6 L416.7 530 L419.4 541 L422.2 552 L424.5 560 L421.5 577" stroke="#e82c10" stroke-width="2.1" stroke-dasharray="1.6 0.6"/>
<path d="M417.2 528.5 L419.9 538.5 L422.6 548 L423.2 553.5 L426 561 L427.4 568 L429.2 577" stroke="#e8b01c" stroke-width="1.7" stroke-dasharray="1.3 1.5"/>
<path d="M424 561 L425.6 568 L427.4 578" stroke="#e82c10" stroke-width="1.5" stroke-dasharray="1.3 1.5"/>
<path d="M415.5 522 L418.3 531.5 L421 542.5" stroke="#e82c10" stroke-width="1.3" stroke-dasharray="1.3 1.0"/>
<path d="M234.7 622.5 L236 627.5 L229.7 642.5 L222 652.5" stroke="#e81a12" stroke-width="1.2" stroke-dasharray="1.2 1.6"/>
<path d="M243.5 642.5 L240 652.5" stroke="#e81a12" stroke-width="1.2" stroke-dasharray="1.2 1.6"/>
<path d="M231.5 637 L234 639" stroke="#e81a12" stroke-width="1.1"/>
<rect x="455.2" y="550.4" width="1.3" height="1.3" fill="#e81a12"/>
<rect x="452" y="537.9" width="1.3" height="1.3" fill="#e81a12"/>
<rect x="452.6" y="537" width="1.3" height="1.3" fill="#e81a12"/>
<rect x="458" y="555.6" width="1.3" height="1.3" fill="#e81a12"/>
<rect x="456.2" y="555.4" width="1.3" height="1.3" fill="#e81a12"/>
<rect x="452.4" y="545.8" width="1.3" height="1.3" fill="#e81a12"/>
<rect x="456.7" y="563.2" width="1.3" height="1.3" fill="#e81a12"/>
<rect x="451.2" y="536.8" width="1.3" height="1.3" fill="#e81a12"/>
<rect x="453.9" y="541.1" width="1.3" height="1.3" fill="#e81a12"/>
<rect x="460.2" y="575.1" width="1.3" height="1.3" fill="#e81a12"/>
<rect x="458.2" y="566.1" width="1.3" height="1.3" fill="#e81a12"/>
<rect x="453.2" y="537.1" width="1.3" height="1.3" fill="#e81a12"/>
<rect x="459" y="568.1" width="1.3" height="1.3" fill="#e81a12"/>
<rect x="458.1" y="563.5" width="1.3" height="1.3" fill="#e81a12"/>
<rect x="459.6" y="574" width="1.3" height="1.3" fill="#e81a12"/>
<rect x="456.6" y="563.1" width="1.3" height="1.3" fill="#e81a12"/>
<rect x="458.2" y="570.9" width="1.3" height="1.3" fill="#e81a12"/>
<rect x="452" y="540.4" width="1.3" height="1.3" fill="#e81a12"/>
<rect x="453.8" y="541.6" width="1.3" height="1.3" fill="#e81a12"/>
<rect x="457.6" y="567.9" width="1.3" height="1.3" fill="#e81a12"/>
<rect x="460.2" y="578.1" width="1.3" height="1.3" fill="#e81a12"/>
<rect x="457.6" y="564" width="1.3" height="1.3" fill="#e81a12"/>
<rect x="459" y="576.5" width="1.3" height="1.3" fill="#e81a12"/>
<rect x="458.8" y="567.4" width="1.3" height="1.3" fill="#e81a12"/>
<rect x="456.2" y="567" width="1.3" height="1.3" fill="#e81a12"/>
<rect x="454.2" y="548.5" width="1.3" height="1.3" fill="#e81a12"/>
<rect x="452" y="535.2" width="1.3" height="1.3" fill="#e81a12"/>
<rect x="452.7" y="540.1" width="1.3" height="1.3" fill="#e81a12"/>
<rect x="453.2" y="540.6" width="1.3" height="1.3" fill="#e81a12"/>
<rect x="461.2" y="577.6" width="1.3" height="1.3" fill="#e81a12"/>
<rect x="455.7" y="562" width="1.3" height="1.3" fill="#e81a12"/>
<rect x="460.8" y="577.4" width="1.3" height="1.3" fill="#e81a12"/>
<rect x="453.5" y="552.6" width="1.3" height="1.3" fill="#e81a12"/>
<rect x="454.1" y="541.6" width="1.3" height="1.3" fill="#e81a12"/>
<rect x="453.6" y="546" width="1.3" height="1.3" fill="#e81a12"/>
<rect x="455.4" y="547.1" width="1.3" height="1.3" fill="#e81a12"/>
<rect x="454.2" y="553" width="1.3" height="1.3" fill="#e81a12"/>
<rect x="458.2" y="568.9" width="1.3" height="1.3" fill="#e81a12"/>
<rect x="458.5" y="568.1" width="1.3" height="1.3" fill="#e81a12"/>
<rect x="457.9" y="573.6" width="1.3" height="1.3" fill="#e81a12"/>
<rect x="456.9" y="553.6" width="1.3" height="1.3" fill="#e81a12"/>
<rect x="460" y="565.6" width="1.3" height="1.3" fill="#e81a12"/>
<rect x="454.6" y="544.5" width="1.3" height="1.3" fill="#e81a12"/>
<rect x="453.4" y="536.5" width="1.3" height="1.3" fill="#e81a12"/>
<rect x="453.5" y="539.1" width="1.3" height="1.3" fill="#e81a12"/>
<rect x="460.8" y="578" width="1.3" height="1.3" fill="#e81a12"/>
<rect x="454.7" y="546.8" width="1.3" height="1.3" fill="#e81a12"/>
<rect x="450.6" y="541" width="1.3" height="1.3" fill="#e81a12"/>
<rect x="457.4" y="557.4" width="1.3" height="1.3" fill="#e81a12"/>
<rect x="453" y="539.2" width="1.3" height="1.3" fill="#e81a12"/>
<rect x="461.6" y="575.5" width="1.3" height="1.3" fill="#e81a12"/>
<rect x="461.7" y="581.8" width="1.3" height="1.3" fill="#e81a12"/>
<rect x="458.2" y="561.2" width="1.3" height="1.3" fill="#e81a12"/>
<rect x="460" y="583.5" width="1.3" height="1.3" fill="#e81a12"/>
<rect x="455.2" y="547.1" width="1.3" height="1.3" fill="#e81a12"/>
<rect x="458.6" y="573.1" width="1.3" height="1.3" fill="#e81a12"/>
<rect x="454.9" y="550.8" width="1.3" height="1.3" fill="#e81a12"/>
<rect x="459.8" y="583.9" width="1.3" height="1.3" fill="#e81a12"/>
<rect x="459.8" y="575.2" width="1.3" height="1.3" fill="#e81a12"/>
<rect x="458.2" y="559.9" width="1.3" height="1.3" fill="#e81a12"/>
<rect x="452.2" y="535.5" width="1.3" height="1.3" fill="#e81a12"/>
<rect x="457.7" y="569.1" width="1.3" height="1.3" fill="#e81a12"/>
<rect x="458.7" y="581.6" width="1.3" height="1.3" fill="#e81a12"/>
<rect x="456.6" y="552.1" width="1.3" height="1.3" fill="#e81a12"/>
<rect x="453.7" y="544.1" width="1.3" height="1.3" fill="#e81a12"/>
<rect x="459.8" y="579.5" width="1.3" height="1.3" fill="#e81a12"/>
<rect x="458.5" y="566.9" width="1.3" height="1.3" fill="#e81a12"/>
<rect x="456.7" y="567.6" width="1.3" height="1.3" fill="#e81a12"/>
<rect x="459.9" y="571.6" width="1.3" height="1.3" fill="#e81a12"/>
<rect x="459.2" y="573.9" width="1.3" height="1.3" fill="#e81a12"/>
<rect x="461.6" y="582.9" width="1.3" height="1.3" fill="#e81a12"/>
<rect x="461.1" y="581.6" width="1.3" height="1.3" fill="#e81a12"/>
<rect x="452.4" y="540.6" width="1.3" height="1.3" fill="#e81a12"/>
<rect x="459.7" y="574.6" width="1.3" height="1.3" fill="#e81a12"/>
<rect x="461.2" y="583.4" width="1.3" height="1.3" fill="#e81a12"/>
<rect x="459.1" y="561.4" width="1.3" height="1.3" fill="#e81a12"/>
<rect x="460.7" y="583" width="1.3" height="1.3" fill="#e81a12"/>
<rect x="460.1" y="581.1" width="1.3" height="1.3" fill="#e81a12"/>
<rect x="461" y="575.4" width="1.3" height="1.3" fill="#e81a12"/>
<rect x="454.9" y="548.8" width="1.3" height="1.3" fill="#e81a12"/>
<rect x="455.1" y="547" width="1.3" height="1.3" fill="#e81a12"/>
<rect x="461" y="579.8" width="1.3" height="1.3" fill="#e81a12"/>
<rect x="456.8" y="563.6" width="1.3" height="1.3" fill="#e81a12"/>
<rect x="460.6" y="580.2" width="1.3" height="1.3" fill="#e81a12"/>
<rect x="458.2" y="560.1" width="1.3" height="1.3" fill="#e81a12"/>
<rect x="453.6" y="543.4" width="1.3" height="1.3" fill="#e81a12"/>
<rect x="452.6" y="543.1" width="1.3" height="1.3" fill="#e81a12"/>
<rect x="457.7" y="562" width="1.3" height="1.3" fill="#e81a12"/>
<rect x="457.5" y="562" width="1.3" height="1.3" fill="#e81a12"/>
<rect x="458.4" y="562.1" width="1.3" height="1.3" fill="#e81a12"/>
<rect x="459.1" y="573" width="1.3" height="1.3" fill="#e81a12"/>
<rect x="458.4" y="572.5" width="1.3" height="1.3" fill="#e81a12"/>
<rect x="457.8" y="564.9" width="1.3" height="1.3" fill="#e81a12"/>
<rect x="458.6" y="568.9" width="1.3" height="1.3" fill="#e81a12"/>
<rect x="455.2" y="558.4" width="1.3" height="1.3" fill="#e81a12"/>
<rect x="459.8" y="578.2" width="1.3" height="1.3" fill="#e81a12"/>
<rect x="455.6" y="562.6" width="1.3" height="1.3" fill="#e81a12"/>
<rect x="453.6" y="541" width="1.3" height="1.3" fill="#e81a12"/>
<rect x="453.2" y="537.6" width="1.3" height="1.3" fill="#e81a12"/>
<rect x="456.8" y="568.1" width="1.3" height="1.3" fill="#e81a12"/>
<rect x="452" y="542.2" width="1.3" height="1.3" fill="#e81a12"/>
<rect x="450.8" y="542" width="1.3" height="1.3" fill="#e81a12"/>
<rect x="452.9" y="545.5" width="1.3" height="1.3" fill="#e81a12"/>
<rect x="454.9" y="559" width="1.3" height="1.3" fill="#e81a12"/>
<rect x="453" y="542.4" width="1.3" height="1.3" fill="#e81a12"/>
<rect x="456.2" y="551" width="1.3" height="1.3" fill="#e81a12"/>
<rect x="459.8" y="570.2" width="1.3" height="1.3" fill="#e81a12"/>
<rect x="457.7" y="556" width="1.3" height="1.3" fill="#e81a12"/>
<rect x="458.9" y="565.2" width="1.3" height="1.3" fill="#e81a12"/>
<rect x="459.6" y="584" width="1.3" height="1.3" fill="#e81a12"/>
<rect x="453.7" y="539.1" width="1.3" height="1.3" fill="#e81a12"/>
<rect x="460.7" y="573" width="1.3" height="1.3" fill="#e81a12"/>
<rect x="454.5" y="555.6" width="1.3" height="1.3" fill="#e81a12"/>
<rect x="454" y="547.2" width="1.3" height="1.3" fill="#e81a12"/>
<rect x="457.9" y="562.6" width="1.3" height="1.3" fill="#e81a12"/>
<rect x="451.4" y="537.2" width="1.3" height="1.3" fill="#e81a12"/>
<rect x="450.5" y="538.2" width="1.3" height="1.3" fill="#e81a12"/>
<rect x="459.7" y="574.4" width="1.3" height="1.3" fill="#e81a12"/>
<rect x="451" y="537.9" width="1.3" height="1.3" fill="#e81a12"/>
<rect x="454.1" y="551.5" width="1.3" height="1.3" fill="#e81a12"/>
<rect x="455" y="547.5" width="1.3" height="1.3" fill="#e81a12"/>
<rect x="455.4" y="545.8" width="1.3" height="1.3" fill="#e81a12"/>
<rect x="452.6" y="536.6" width="1.3" height="1.3" fill="#e81a12"/>
<rect x="454.6" y="549.6" width="1.3" height="1.3" fill="#e81a12"/>
<rect x="457.8" y="559.1" width="1.3" height="1.3" fill="#e81a12"/>
<rect x="452.7" y="534.9" width="1.3" height="1.3" fill="#e81a12"/>
<rect x="459.5" y="570.9" width="1.3" height="1.3" fill="#e81a12"/>
<rect x="456.5" y="558" width="1.3" height="1.3" fill="#e81a12"/>
<rect x="459.9" y="575.2" width="1.3" height="1.3" fill="#e81a12"/>
<rect x="460.1" y="576" width="1.3" height="1.3" fill="#e81a12"/>
<rect x="457.8" y="568.8" width="1.3" height="1.3" fill="#e81a12"/>
<rect x="459.1" y="576.1" width="1.3" height="1.3" fill="#e81a12"/>
<rect x="457.2" y="554.1" width="1.3" height="1.3" fill="#e81a12"/>
<rect x="452.9" y="540.6" width="1.3" height="1.3" fill="#e81a12"/>
<rect x="455.7" y="546.6" width="1.3" height="1.3" fill="#e81a12"/>
<rect x="458.7" y="576.6" width="1.3" height="1.3" fill="#e81a12"/>
<rect x="455.4" y="548.1" width="1.3" height="1.3" fill="#e81a12"/>
<rect x="457.2" y="557.1" width="1.3" height="1.3" fill="#e81a12"/>
<rect x="452.1" y="548" width="1.3" height="1.3" fill="#e81a12"/>
<rect x="456.8" y="561.6" width="1.3" height="1.3" fill="#e81a12"/>
<rect x="456.1" y="549.4" width="1.3" height="1.3" fill="#e81a12"/>
<rect x="455.7" y="553.2" width="1.3" height="1.3" fill="#e81a12"/>
<rect x="454.5" y="544.1" width="1.3" height="1.3" fill="#e81a12"/>
<rect x="455.2" y="547.1" width="1.3" height="1.3" fill="#e81a12"/>
<rect x="452.9" y="536.1" width="1.3" height="1.3" fill="#e81a12"/>
<rect x="453.5" y="546" width="1.3" height="1.3" fill="#e81a12"/>
<rect x="458.2" y="572" width="1.3" height="1.3" fill="#e81a12"/>
<rect x="460.9" y="578.1" width="1.3" height="1.3" fill="#e81a12"/>
<rect x="461.5" y="583.6" width="1.3" height="1.3" fill="#e81a12"/>
<rect x="458.4" y="566.4" width="1.3" height="1.3" fill="#e81a12"/>
<rect x="459.6" y="579.1" width="1.3" height="1.3" fill="#e81a12"/>
<rect x="460.4" y="574.8" width="1.3" height="1.3" fill="#e81a12"/>
<rect x="455.4" y="559.6" width="1.3" height="1.3" fill="#e81a12"/>
<rect x="458.7" y="575.9" width="1.3" height="1.3" fill="#e81a12"/>
<rect x="458.6" y="568.4" width="1.3" height="1.3" fill="#e81a12"/>
<rect x="452.4" y="535.6" width="1.3" height="1.3" fill="#e81a12"/>
<rect x="451.2" y="539.8" width="1.3" height="1.3" fill="#e81a12"/>
<rect x="457.2" y="565.8" width="1.3" height="1.3" fill="#e81a12"/>
<rect x="457.1" y="558.6" width="1.3" height="1.3" fill="#e81a12"/>
<rect x="459" y="571.8" width="1.3" height="1.3" fill="#e81a12"/>
<rect x="458.7" y="567.1" width="1.3" height="1.3" fill="#e81a12"/>
<rect x="455.5" y="546.5" width="1.3" height="1.3" fill="#e81a12"/>
<rect x="459" y="570.8" width="1.3" height="1.3" fill="#e81a12"/>
<rect x="461.4" y="583.1" width="1.3" height="1.3" fill="#e81a12"/>
<rect x="455.6" y="558.4" width="1.3" height="1.3" fill="#e81a12"/>
<rect x="458.5" y="565" width="1.3" height="1.3" fill="#e81a12"/>
<rect x="452.7" y="541.6" width="1.3" height="1.3" fill="#e81a12"/>
<rect x="455.6" y="549.2" width="1.3" height="1.3" fill="#e81a12"/>
<rect x="451.8" y="537.4" width="1.3" height="1.3" fill="#e81a12"/>
<rect x="458.6" y="568.9" width="1.3" height="1.3" fill="#e81a12"/>
<rect x="468.7" y="602.5" width="1.3" height="1.3" fill="#e81a12"/>
<rect x="463" y="588.6" width="1.3" height="1.3" fill="#e81a12"/>
<rect x="472.2" y="619.6" width="1.3" height="1.3" fill="#e81a12"/>
<rect x="466.4" y="600.8" width="1.3" height="1.3" fill="#e81a12"/>
<rect x="469.2" y="599.8" width="1.3" height="1.3" fill="#e81a12"/>
<rect x="472.4" y="618.2" width="1.3" height="1.3" fill="#e81a12"/>
<rect x="462.5" y="589.6" width="1.3" height="1.3" fill="#e81a12"/>
<rect x="462.7" y="589.2" width="1.3" height="1.3" fill="#e81a12"/>
<rect x="471.6" y="616.1" width="1.3" height="1.3" fill="#e81a12"/>
<rect x="472.7" y="616.4" width="1.3" height="1.3" fill="#e81a12"/>
<rect x="461.6" y="584.5" width="1.3" height="1.3" fill="#e81a12"/>
<rect x="467" y="594.4" width="1.3" height="1.3" fill="#e81a12"/>
<rect x="466.5" y="595.1" width="1.3" height="1.3" fill="#e81a12"/>
<rect x="470.5" y="611.1" width="1.3" height="1.3" fill="#e81a12"/>
<rect x="470.5" y="618" width="1.3" height="1.3" fill="#e81a12"/>
<rect x="466.2" y="594.1" width="1.3" height="1.3" fill="#e81a12"/>
<rect x="472.5" y="620.2" width="1.3" height="1.3" fill="#e81a12"/>
<rect x="469.2" y="598.6" width="1.3" height="1.3" fill="#e81a12"/>
<rect x="462.7" y="588" width="1.3" height="1.3" fill="#e81a12"/>
<rect x="473" y="617.8" width="1.3" height="1.3" fill="#e81a12"/>
<rect x="469.5" y="602.1" width="1.3" height="1.3" fill="#e81a12"/>
<rect x="470.5" y="619.1" width="1.3" height="1.3" fill="#e81a12"/>
<rect x="467.6" y="607.1" width="1.3" height="1.3" fill="#e81a12"/>
<rect x="469.2" y="603.6" width="1.3" height="1.3" fill="#e81a12"/>
<rect x="469.8" y="610.6" width="1.3" height="1.3" fill="#e81a12"/>
<rect x="471" y="606.9" width="1.3" height="1.3" fill="#e81a12"/>
<rect x="472.7" y="617.5" width="1.3" height="1.3" fill="#e81a12"/>
<rect x="466.5" y="596.4" width="1.3" height="1.3" fill="#e81a12"/>
<rect x="472.4" y="619.5" width="1.3" height="1.3" fill="#e81a12"/>
<rect x="466" y="594.8" width="1.3" height="1.3" fill="#e81a12"/>
<rect x="465.2" y="589.6" width="1.3" height="1.3" fill="#e81a12"/>
<rect x="472.2" y="616.8" width="1.3" height="1.3" fill="#e81a12"/>
<rect x="470.7" y="617.1" width="1.3" height="1.3" fill="#e81a12"/>
<rect x="465" y="588.6" width="1.3" height="1.3" fill="#e81a12"/>
<rect x="467.9" y="595.6" width="1.3" height="1.3" fill="#e81a12"/>
<rect x="464.2" y="593.8" width="1.3" height="1.3" fill="#e81a12"/>
<rect x="470.8" y="611.1" width="1.3" height="1.3" fill="#e81a12"/>
<rect x="469.2" y="602.6" width="1.3" height="1.3" fill="#e81a12"/>
<rect x="461.8" y="586.8" width="1.3" height="1.3" fill="#e81a12"/>
<rect x="463" y="588.9" width="1.3" height="1.3" fill="#e81a12"/>
<rect x="472.4" y="615.1" width="1.3" height="1.3" fill="#e81a12"/>
<rect x="465.5" y="592.9" width="1.3" height="1.3" fill="#e81a12"/>
<rect x="470.4" y="619" width="1.3" height="1.3" fill="#e81a12"/>
<rect x="462.2" y="584.9" width="1.3" height="1.3" fill="#e81a12"/>
<rect x="471.4" y="616.6" width="1.3" height="1.3" fill="#e81a12"/>
<path d="M456.5 556 L458 563" stroke="#20a8c0" stroke-width="1.0" stroke-dasharray="1 1.5"/>
<path d="M460 575 L462 582" stroke="#e07a1c" stroke-width="1.0" stroke-dasharray="1 1.2"/>
<rect x="435.6" y="554.4" width="1.3" height="1.3" fill="#e81a12"/>
<rect x="435.6" y="571.8" width="1.3" height="1.3" fill="#e81a12"/>
<rect x="436.9" y="559.6" width="1.3" height="1.3" fill="#e81a12"/>
<rect x="435.6" y="565.4" width="1.3" height="1.3" fill="#e81a12"/>
<rect x="436" y="569.6" width="1.3" height="1.3" fill="#e81a12"/>
<rect x="436.7" y="564" width="1.3" height="1.3" fill="#e81a12"/>
<rect x="436.2" y="570.8" width="1.3" height="1.3" fill="#e81a12"/>
<rect x="437" y="567.9" width="1.3" height="1.3" fill="#e81a12"/>
<rect x="435.7" y="559.6" width="1.3" height="1.3" fill="#e81a12"/>
<rect x="436.4" y="556.6" width="1.3" height="1.3" fill="#e81a12"/>
<rect x="436.7" y="566.6" width="1.3" height="1.3" fill="#e81a12"/>
<rect x="437.1" y="567" width="1.3" height="1.3" fill="#e81a12"/>
<rect x="435.6" y="564.1" width="1.3" height="1.3" fill="#e81a12"/>
<rect x="436.8" y="572.9" width="1.3" height="1.3" fill="#e81a12"/>
<rect x="435.2" y="559.6" width="1.3" height="1.3" fill="#e81a12"/>
<rect x="436.6" y="560.8" width="1.3" height="1.3" fill="#e81a12"/>
<rect x="436.7" y="568.6" width="1.3" height="1.3" fill="#e81a12"/>
<rect x="436.2" y="568.4" width="1.3" height="1.3" fill="#e81a12"/>
<rect x="436.2" y="555.1" width="1.3" height="1.3" fill="#e81a12"/>
<rect x="436.4" y="568.6" width="1.3" height="1.3" fill="#e81a12"/>
<rect x="436.7" y="569.9" width="1.3" height="1.3" fill="#e81a12"/>
<rect x="436.4" y="574.8" width="1.3" height="1.3" fill="#e81a12"/>
<rect x="436.1" y="559.1" width="1.3" height="1.3" fill="#e81a12"/>
<rect x="435.6" y="560.6" width="1.3" height="1.3" fill="#e81a12"/>
<rect x="436.4" y="558.2" width="1.3" height="1.3" fill="#e81a12"/>
<rect x="436.2" y="568.4" width="1.3" height="1.3" fill="#e81a12"/>
<rect x="436" y="562.6" width="1.3" height="1.3" fill="#e81a12"/>
<rect x="437" y="557.2" width="1.3" height="1.3" fill="#e81a12"/>
<rect x="435.2" y="562.6" width="1.3" height="1.3" fill="#e81a12"/>
<rect x="435.4" y="569.8" width="1.3" height="1.3" fill="#e81a12"/>
<rect x="528.9" y="547.6" width="1.3" height="1.3" fill="#e81a12"/>
<rect x="533.1" y="568.8" width="1.3" height="1.3" fill="#e81a12"/>
<rect x="530.5" y="550" width="1.3" height="1.3" fill="#e81a12"/>
<rect x="529.9" y="539.1" width="1.3" height="1.3" fill="#e81a12"/>
<rect x="529.1" y="548.8" width="1.3" height="1.3" fill="#e81a12"/>
<rect x="534.9" y="579.9" width="1.3" height="1.3" fill="#e81a12"/>
<rect x="532" y="572.9" width="1.3" height="1.3" fill="#e81a12"/>
<rect x="527.2" y="533.2" width="1.3" height="1.3" fill="#e81a12"/>
<rect x="534.6" y="577.6" width="1.3" height="1.3" fill="#e81a12"/>
<rect x="534.8" y="576.4" width="1.3" height="1.3" fill="#e81a12"/>
<rect x="533.1" y="572.1" width="1.3" height="1.3" fill="#e81a12"/>
<rect x="526.8" y="532.6" width="1.3" height="1.3" fill="#e81a12"/>
<rect x="526.8" y="544.2" width="1.3" height="1.3" fill="#e81a12"/>
<rect x="528.6" y="548.1" width="1.3" height="1.3" fill="#e81a12"/>
<rect x="531.5" y="562.2" width="1.3" height="1.3" fill="#e81a12"/>
<rect x="531.1" y="546.6" width="1.3" height="1.3" fill="#e81a12"/>
<rect x="530.6" y="569.6" width="1.3" height="1.3" fill="#e81a12"/>
<rect x="535.6" y="578.6" width="1.3" height="1.3" fill="#e81a12"/>
<rect x="527.9" y="555.4" width="1.3" height="1.3" fill="#e81a12"/>
<rect x="530.6" y="550.4" width="1.3" height="1.3" fill="#e81a12"/>
<rect x="530.2" y="556" width="1.3" height="1.3" fill="#e81a12"/>
<rect x="531" y="572" width="1.3" height="1.3" fill="#e81a12"/>
<rect x="532.6" y="570.2" width="1.3" height="1.3" fill="#e81a12"/>
<rect x="528.8" y="547.1" width="1.3" height="1.3" fill="#e81a12"/>
<rect x="527.1" y="534.9" width="1.3" height="1.3" fill="#e81a12"/>
<rect x="531.1" y="543" width="1.3" height="1.3" fill="#e81a12"/>
<rect x="530.1" y="559.1" width="1.3" height="1.3" fill="#e81a12"/>
<rect x="532.4" y="576" width="1.3" height="1.3" fill="#e81a12"/>
<rect x="528.2" y="535" width="1.3" height="1.3" fill="#e81a12"/>
<rect x="532.9" y="566.9" width="1.3" height="1.3" fill="#e81a12"/>
<rect x="529.1" y="552.1" width="1.3" height="1.3" fill="#e81a12"/>
<rect x="530.8" y="569.1" width="1.3" height="1.3" fill="#e81a12"/>
<rect x="527.1" y="537.1" width="1.3" height="1.3" fill="#e81a12"/>
<rect x="530.8" y="559.8" width="1.3" height="1.3" fill="#e81a12"/>
<rect x="529.6" y="540.8" width="1.3" height="1.3" fill="#e81a12"/>
<rect x="526.4" y="538.9" width="1.3" height="1.3" fill="#e81a12"/>
<rect x="528.1" y="547.6" width="1.3" height="1.3" fill="#e81a12"/>
<rect x="530.6" y="556.6" width="1.3" height="1.3" fill="#e81a12"/>
<rect x="531.4" y="564.1" width="1.3" height="1.3" fill="#e81a12"/>
<rect x="528.6" y="555.2" width="1.3" height="1.3" fill="#e81a12"/>
<rect x="535.2" y="577.2" width="1.3" height="1.3" fill="#e81a12"/>
<rect x="527" y="537" width="1.3" height="1.3" fill="#e81a12"/>
<rect x="530.2" y="560.6" width="1.3" height="1.3" fill="#e81a12"/>
<rect x="533.9" y="574.9" width="1.3" height="1.3" fill="#e81a12"/>
<rect x="532.2" y="570.6" width="1.3" height="1.3" fill="#e81a12"/>
<rect x="531.6" y="561.1" width="1.3" height="1.3" fill="#e81a12"/>
<rect x="531.5" y="549.2" width="1.3" height="1.3" fill="#e81a12"/>
<rect x="527.9" y="544" width="1.3" height="1.3" fill="#e81a12"/>
<rect x="530.1" y="540.9" width="1.3" height="1.3" fill="#e81a12"/>
<rect x="533.2" y="565.2" width="1.3" height="1.3" fill="#e81a12"/>
<rect x="527.1" y="541.4" width="1.3" height="1.3" fill="#e81a12"/>
<rect x="528.4" y="533.9" width="1.3" height="1.3" fill="#e81a12"/>
<rect x="531.6" y="558.8" width="1.3" height="1.3" fill="#e81a12"/>
<rect x="527.5" y="539.2" width="1.3" height="1.3" fill="#e81a12"/>
<rect x="528.1" y="545.4" width="1.3" height="1.3" fill="#e81a12"/>
<rect x="529.2" y="546.6" width="1.3" height="1.3" fill="#e81a12"/>
<rect x="527.5" y="552.5" width="1.3" height="1.3" fill="#e81a12"/>
<rect x="529.8" y="549.4" width="1.3" height="1.3" fill="#e81a12"/>
<rect x="528.4" y="541.1" width="1.3" height="1.3" fill="#e81a12"/>
<rect x="529.4" y="552.5" width="1.3" height="1.3" fill="#e81a12"/>
<rect x="534.1" y="575.8" width="1.3" height="1.3" fill="#e81a12"/>
<rect x="526" y="531.6" width="1.3" height="1.3" fill="#e81a12"/>
<rect x="534.1" y="577.1" width="1.3" height="1.3" fill="#e81a12"/>
<rect x="530.6" y="549.6" width="1.3" height="1.3" fill="#e81a12"/>
<rect x="527.6" y="545.5" width="1.3" height="1.3" fill="#e81a12"/>
<rect x="526.5" y="536.6" width="1.3" height="1.3" fill="#e81a12"/>
<rect x="535.6" y="580" width="1.3" height="1.3" fill="#e81a12"/>
<rect x="532.1" y="579.1" width="1.3" height="1.3" fill="#e81a12"/>
<rect x="526" y="533.8" width="1.3" height="1.3" fill="#e81a12"/>
<rect x="532" y="577.1" width="1.3" height="1.3" fill="#e81a12"/>
<rect x="527.8" y="539.1" width="1.3" height="1.3" fill="#e81a12"/>
<rect x="528" y="551.8" width="1.3" height="1.3" fill="#e81a12"/>
<rect x="529.1" y="540" width="1.3" height="1.3" fill="#e81a12"/>
<rect x="532.1" y="557.1" width="1.3" height="1.3" fill="#e81a12"/>
<rect x="526.8" y="543.8" width="1.3" height="1.3" fill="#e81a12"/>
<rect x="525.8" y="533.1" width="1.3" height="1.3" fill="#e81a12"/>
<rect x="526.9" y="532.8" width="1.3" height="1.3" fill="#e81a12"/>
<rect x="530.8" y="561.5" width="1.3" height="1.3" fill="#e81a12"/>
<rect x="529" y="546.5" width="1.3" height="1.3" fill="#e81a12"/>
<rect x="529.8" y="552.6" width="1.3" height="1.3" fill="#e81a12"/>
<rect x="531.1" y="553" width="1.3" height="1.3" fill="#e81a12"/>
<rect x="530.6" y="555.8" width="1.3" height="1.3" fill="#e81a12"/>
<rect x="533.5" y="570.5" width="1.3" height="1.3" fill="#e81a12"/>
<rect x="532.6" y="554.6" width="1.3" height="1.3" fill="#e81a12"/>
<rect x="531.5" y="552.6" width="1.3" height="1.3" fill="#e81a12"/>
<rect x="531.6" y="556.6" width="1.3" height="1.3" fill="#e81a12"/>
<rect x="525.6" y="535.2" width="1.3" height="1.3" fill="#e81a12"/>
<rect x="532" y="556.8" width="1.3" height="1.3" fill="#e81a12"/>
<rect x="529.4" y="550.1" width="1.3" height="1.3" fill="#e81a12"/>
<rect x="530.9" y="574.9" width="1.3" height="1.3" fill="#e81a12"/>
<rect x="532.1" y="572.5" width="1.3" height="1.3" fill="#e81a12"/>
<rect x="528.1" y="556.1" width="1.3" height="1.3" fill="#e81a12"/>
<rect x="525.8" y="539.6" width="1.3" height="1.3" fill="#e81a12"/>
<rect x="526.6" y="534.2" width="1.3" height="1.3" fill="#e81a12"/>
<rect x="527.2" y="539.1" width="1.3" height="1.3" fill="#e81a12"/>
<rect x="533.6" y="572.2" width="1.3" height="1.3" fill="#e81a12"/>
<rect x="534.9" y="577.6" width="1.3" height="1.3" fill="#e81a12"/>
<rect x="532.5" y="556.4" width="1.3" height="1.3" fill="#e81a12"/>
<rect x="527.6" y="540.1" width="1.3" height="1.3" fill="#e81a12"/>
<rect x="531.6" y="565.5" width="1.3" height="1.3" fill="#e81a12"/>
<rect x="533.5" y="570.8" width="1.3" height="1.3" fill="#e81a12"/>
<rect x="530.9" y="563.4" width="1.3" height="1.3" fill="#e81a12"/>
<rect x="529.6" y="559.2" width="1.3" height="1.3" fill="#e81a12"/>
<rect x="525.5" y="536.5" width="1.3" height="1.3" fill="#e81a12"/>
<rect x="529.6" y="551" width="1.3" height="1.3" fill="#e81a12"/>
<rect x="534" y="581.4" width="1.3" height="1.3" fill="#e81a12"/>
<rect x="533.5" y="569.6" width="1.3" height="1.3" fill="#e81a12"/>
<rect x="532.6" y="568.6" width="1.3" height="1.3" fill="#e81a12"/>
<rect x="526.8" y="544.1" width="1.3" height="1.3" fill="#e81a12"/>
<rect x="531.2" y="560.6" width="1.3" height="1.3" fill="#e81a12"/>
<rect x="528.8" y="530.6" width="1.3" height="1.3" fill="#e81a12"/>
<rect x="531.6" y="562.1" width="1.3" height="1.3" fill="#e81a12"/>
<rect x="535.1" y="576.2" width="1.3" height="1.3" fill="#e81a12"/>
<rect x="534.4" y="563.8" width="1.3" height="1.3" fill="#e81a12"/>
<rect x="531" y="548.6" width="1.3" height="1.3" fill="#e81a12"/>
<rect x="527.8" y="542.4" width="1.3" height="1.3" fill="#e81a12"/>
<rect x="527.9" y="541.2" width="1.3" height="1.3" fill="#e81a12"/>
<rect x="527.1" y="537.8" width="1.3" height="1.3" fill="#e81a12"/>
<rect x="528.5" y="538.4" width="1.3" height="1.3" fill="#e81a12"/>
<rect x="532.5" y="575.4" width="1.3" height="1.3" fill="#e81a12"/>
<rect x="529.6" y="544.1" width="1.3" height="1.3" fill="#e81a12"/>
<rect x="531.1" y="559.5" width="1.3" height="1.3" fill="#e81a12"/>
<rect x="528.2" y="553.8" width="1.3" height="1.3" fill="#e81a12"/>
<rect x="528.6" y="543.5" width="1.3" height="1.3" fill="#e81a12"/>
<rect x="531.9" y="557.8" width="1.3" height="1.3" fill="#e81a12"/>
<rect x="527.5" y="533.8" width="1.3" height="1.3" fill="#e81a12"/>
<rect x="530.6" y="559" width="1.3" height="1.3" fill="#e81a12"/>
<rect x="527.8" y="541.1" width="1.3" height="1.3" fill="#e81a12"/>
<rect x="531.6" y="563.6" width="1.3" height="1.3" fill="#e81a12"/>
<rect x="530.9" y="546.2" width="1.3" height="1.3" fill="#e81a12"/>
<rect x="531.6" y="576.4" width="1.3" height="1.3" fill="#e81a12"/>
<rect x="524.8" y="531.5" width="1.3" height="1.3" fill="#e81a12"/>
<rect x="529.9" y="554.6" width="1.3" height="1.3" fill="#e81a12"/>
<rect x="530.1" y="542.1" width="1.3" height="1.3" fill="#e81a12"/>
<rect x="526.5" y="532.9" width="1.3" height="1.3" fill="#e81a12"/>
<rect x="530.2" y="566.5" width="1.3" height="1.3" fill="#e81a12"/>
<rect x="528.6" y="544.4" width="1.3" height="1.3" fill="#e81a12"/>
<rect x="533.1" y="571" width="1.3" height="1.3" fill="#e81a12"/>
<rect x="531" y="563.6" width="1.3" height="1.3" fill="#e81a12"/>
<rect x="535.1" y="575.5" width="1.3" height="1.3" fill="#e81a12"/>
<rect x="526.5" y="543.1" width="1.3" height="1.3" fill="#e81a12"/>
<rect x="531.6" y="569" width="1.3" height="1.3" fill="#e81a12"/>
<rect x="528.8" y="547.6" width="1.3" height="1.3" fill="#e81a12"/>
<rect x="530.5" y="563.1" width="1.3" height="1.3" fill="#e81a12"/>
<rect x="532.9" y="580.9" width="1.3" height="1.3" fill="#e81a12"/>
<rect x="531.1" y="566.5" width="1.3" height="1.3" fill="#e81a12"/>
<rect x="532.5" y="567.8" width="1.3" height="1.3" fill="#e81a12"/>
<rect x="529.1" y="541.5" width="1.3" height="1.3" fill="#e81a12"/>
<rect x="535.6" y="577" width="1.3" height="1.3" fill="#e81a12"/>
<rect x="526.5" y="536.5" width="1.3" height="1.3" fill="#e81a12"/>
<rect x="530.2" y="537.6" width="1.3" height="1.3" fill="#e81a12"/>
<rect x="530.9" y="566.2" width="1.3" height="1.3" fill="#e81a12"/>
<rect x="533.1" y="568.2" width="1.3" height="1.3" fill="#e81a12"/>
<rect x="527.6" y="549.6" width="1.3" height="1.3" fill="#e81a12"/>
<rect x="533.4" y="576.2" width="1.3" height="1.3" fill="#e81a12"/>
<rect x="533.1" y="577.5" width="1.3" height="1.3" fill="#e81a12"/>
<rect x="530.6" y="540.9" width="1.3" height="1.3" fill="#e81a12"/>
<rect x="531.6" y="574.2" width="1.3" height="1.3" fill="#e81a12"/>
<rect x="533" y="572.9" width="1.3" height="1.3" fill="#e81a12"/>
<rect x="527.6" y="535.9" width="1.3" height="1.3" fill="#e81a12"/>
<rect x="528.9" y="541.1" width="1.3" height="1.3" fill="#e81a12"/>
<rect x="527.9" y="531.6" width="1.3" height="1.3" fill="#e81a12"/>
<rect x="532.9" y="567.1" width="1.3" height="1.3" fill="#e81a12"/>
<rect x="532.6" y="580.1" width="1.3" height="1.3" fill="#e81a12"/>
<rect x="533" y="562.1" width="1.3" height="1.3" fill="#e81a12"/>
<rect x="529.8" y="553.1" width="1.3" height="1.3" fill="#e81a12"/>
<rect x="532.6" y="566.6" width="1.3" height="1.3" fill="#e81a12"/>
<rect x="533.2" y="574.8" width="1.3" height="1.3" fill="#e81a12"/>
<rect x="530.1" y="539.1" width="1.3" height="1.3" fill="#e81a12"/>
<rect x="532.4" y="569.6" width="1.3" height="1.3" fill="#e81a12"/>
<rect x="529.8" y="556" width="1.3" height="1.3" fill="#e81a12"/>
<rect x="528.4" y="540.1" width="1.3" height="1.3" fill="#e81a12"/>
<rect x="532.1" y="573.4" width="1.3" height="1.3" fill="#e81a12"/>
<rect x="529.1" y="545.2" width="1.3" height="1.3" fill="#e81a12"/>
<rect x="531.4" y="556.1" width="1.3" height="1.3" fill="#e81a12"/>
<rect x="525.6" y="535.1" width="1.3" height="1.3" fill="#e81a12"/>
<rect x="532.6" y="571" width="1.3" height="1.3" fill="#e81a12"/>
<rect x="529.1" y="551.4" width="1.3" height="1.3" fill="#e81a12"/>
<rect x="527.4" y="535.1" width="1.3" height="1.3" fill="#e81a12"/>
<rect x="527.6" y="541.5" width="1.3" height="1.3" fill="#e81a12"/>
<rect x="529.9" y="556.5" width="1.3" height="1.3" fill="#e81a12"/>
<rect x="528.4" y="542.8" width="1.3" height="1.3" fill="#e81a12"/>
<rect x="531.1" y="569.5" width="1.3" height="1.3" fill="#e81a12"/>
<rect x="530.9" y="548.4" width="1.3" height="1.3" fill="#e81a12"/>
<rect x="531.6" y="574" width="1.3" height="1.3" fill="#e81a12"/>
<rect x="527.2" y="539.6" width="1.3" height="1.3" fill="#e81a12"/>
<rect x="532.2" y="560.1" width="1.3" height="1.3" fill="#e81a12"/>
<rect x="534.8" y="575.8" width="1.3" height="1.3" fill="#e81a12"/>
<rect x="527.4" y="546.5" width="1.3" height="1.3" fill="#e81a12"/>
<rect x="529.4" y="538.5" width="1.3" height="1.3" fill="#e81a12"/>
<rect x="530.1" y="547.2" width="1.3" height="1.3" fill="#e81a12"/>
<rect x="528.8" y="547.6" width="1.3" height="1.3" fill="#e81a12"/>
<rect x="531.9" y="568" width="1.3" height="1.3" fill="#e81a12"/>
<rect x="526.1" y="536.1" width="1.3" height="1.3" fill="#e81a12"/>
<rect x="532.1" y="571.5" width="1.3" height="1.3" fill="#e81a12"/>
<rect x="528.8" y="540.6" width="1.3" height="1.3" fill="#e81a12"/>
<rect x="529.8" y="541.1" width="1.3" height="1.3" fill="#e81a12"/>
<rect x="528.5" y="551.4" width="1.3" height="1.3" fill="#e81a12"/>
<rect x="530.4" y="556.4" width="1.3" height="1.3" fill="#e81a12"/>
<rect x="527.6" y="538.1" width="1.3" height="1.3" fill="#e81a12"/>
<rect x="531.1" y="568.8" width="1.3" height="1.3" fill="#e81a12"/>
<rect x="530.6" y="560.1" width="1.3" height="1.3" fill="#e81a12"/>
<rect x="526.6" y="542.8" width="1.3" height="1.3" fill="#e81a12"/>
<rect x="530.8" y="570.5" width="1.3" height="1.3" fill="#e81a12"/>
<rect x="531.5" y="565.5" width="1.3" height="1.3" fill="#e81a12"/>
<rect x="529.9" y="546.6" width="1.3" height="1.3" fill="#e81a12"/>
<rect x="528.6" y="552.5" width="1.3" height="1.3" fill="#e81a12"/>
<rect x="532.4" y="562.8" width="1.3" height="1.3" fill="#e81a12"/>
<rect x="530.1" y="554.1" width="1.3" height="1.3" fill="#e81a12"/>
<rect x="531.5" y="565.2" width="1.3" height="1.3" fill="#e81a12"/>
<rect x="531.1" y="564.2" width="1.3" height="1.3" fill="#e81a12"/>
<rect x="530.5" y="555.8" width="1.3" height="1.3" fill="#e81a12"/>
<rect x="531.1" y="558.5" width="1.3" height="1.3" fill="#e81a12"/>
<rect x="534.6" y="578.6" width="1.3" height="1.3" fill="#e81a12"/>
<rect x="530.4" y="560.1" width="1.3" height="1.3" fill="#e81a12"/>
<rect x="529.4" y="557.1" width="1.3" height="1.3" fill="#e81a12"/>
<rect x="529.8" y="557.6" width="1.3" height="1.3" fill="#e81a12"/>
<rect x="528" y="541.6" width="1.3" height="1.3" fill="#e81a12"/>
<rect x="532" y="569.8" width="1.3" height="1.3" fill="#e81a12"/>
<rect x="531.4" y="548.6" width="1.3" height="1.3" fill="#e81a12"/>
<rect x="531.5" y="550.9" width="1.3" height="1.3" fill="#e81a12"/>
<rect x="529.9" y="552.2" width="1.3" height="1.3" fill="#e81a12"/>
<rect x="528.8" y="544.4" width="1.3" height="1.3" fill="#e81a12"/>
<rect x="534.1" y="578.6" width="1.3" height="1.3" fill="#e81a12"/>
<rect x="533.6" y="571.6" width="1.3" height="1.3" fill="#e81a12"/>
<rect x="525.8" y="537.8" width="1.3" height="1.3" fill="#e81a12"/>
<rect x="531.4" y="563.1" width="1.3" height="1.3" fill="#e81a12"/>
<rect x="527.4" y="542.5" width="1.3" height="1.3" fill="#e81a12"/>
<rect x="529.6" y="563.6" width="1.3" height="1.3" fill="#e81a12"/>
<rect x="530.9" y="554.6" width="1.3" height="1.3" fill="#e81a12"/>
<rect x="526.9" y="537.4" width="1.3" height="1.3" fill="#e81a12"/>
<rect x="534" y="574.1" width="1.3" height="1.3" fill="#e81a12"/>
<rect x="529.6" y="543.6" width="1.3" height="1.3" fill="#e81a12"/>
<rect x="526.4" y="531" width="1.3" height="1.3" fill="#e81a12"/>
<rect x="529.1" y="543.1" width="1.3" height="1.3" fill="#e81a12"/>
<rect x="529.2" y="552.8" width="1.3" height="1.3" fill="#e81a12"/>
<rect x="527.2" y="549.6" width="1.3" height="1.3" fill="#e81a12"/>
<rect x="524.8" y="534.1" width="1.3" height="1.3" fill="#e81a12"/>
<rect x="532.6" y="570.8" width="1.3" height="1.3" fill="#e81a12"/>
<rect x="534.2" y="562.8" width="1.3" height="1.3" fill="#e81a12"/>
<rect x="533.9" y="579.4" width="1.3" height="1.3" fill="#e81a12"/>
<rect x="529.1" y="535.8" width="1.3" height="1.3" fill="#e81a12"/>
<rect x="533.9" y="570.2" width="1.3" height="1.3" fill="#e81a12"/>
<rect x="533.4" y="577" width="1.3" height="1.3" fill="#e81a12"/>
<rect x="532.1" y="576.5" width="1.3" height="1.3" fill="#e81a12"/>
<rect x="529.8" y="565.1" width="1.3" height="1.3" fill="#e81a12"/>
<rect x="533.1" y="573.6" width="1.3" height="1.3" fill="#e81a12"/>
<rect x="530.2" y="558" width="1.3" height="1.3" fill="#e81a12"/>
<rect x="533.6" y="575.8" width="1.3" height="1.3" fill="#e81a12"/>
<rect x="529.5" y="542.6" width="1.3" height="1.3" fill="#e81a12"/>
<rect x="528" y="533.6" width="1.3" height="1.3" fill="#e81a12"/>
<rect x="530.5" y="555.9" width="1.3" height="1.3" fill="#e81a12"/>
<rect x="533.4" y="574.8" width="1.3" height="1.3" fill="#e81a12"/>
<rect x="529.8" y="554.8" width="1.3" height="1.3" fill="#e81a12"/>
<rect x="533.5" y="573.6" width="1.3" height="1.3" fill="#e81a12"/>
<rect x="534.5" y="579.8" width="1.3" height="1.3" fill="#e81a12"/>
<rect x="532.6" y="563.1" width="1.3" height="1.3" fill="#e81a12"/>
<rect x="531.1" y="565.8" width="1.3" height="1.3" fill="#e81a12"/>
<rect x="533.8" y="581" width="1.3" height="1.3" fill="#e81a12"/>
<rect x="533.9" y="576.6" width="1.3" height="1.3" fill="#e81a12"/>
<rect x="530.9" y="562.8" width="1.3" height="1.3" fill="#e81a12"/>
<rect x="529.6" y="549.5" width="1.3" height="1.3" fill="#e81a12"/>
<rect x="533.4" y="570" width="1.3" height="1.3" fill="#e81a12"/>
<rect x="529" y="552.6" width="1.3" height="1.3" fill="#e81a12"/>
<rect x="528.2" y="545.9" width="1.3" height="1.3" fill="#e81a12"/>
<rect x="531.2" y="556.4" width="1.3" height="1.3" fill="#e81a12"/>
<rect x="532.5" y="580.8" width="1.3" height="1.3" fill="#e81a12"/>
<rect x="530.4" y="547.5" width="1.3" height="1.3" fill="#e81a12"/>
<rect x="530" y="560.9" width="1.3" height="1.3" fill="#e81a12"/>
<rect x="525" y="533.1" width="1.3" height="1.3" fill="#e81a12"/>
<rect x="525.6" y="598.6" width="1.3" height="1.3" fill="#e81a12"/>
<rect x="518.5" y="599.5" width="1.3" height="1.3" fill="#e81a12"/>
<rect x="526.2" y="599.6" width="1.3" height="1.3" fill="#e81a12"/>
<rect x="530.1" y="600.2" width="1.3" height="1.3" fill="#e81a12"/>
<rect x="526.5" y="599.6" width="1.3" height="1.3" fill="#e81a12"/>
<rect x="527.2" y="599.4" width="1.3" height="1.3" fill="#e81a12"/>
<rect x="524.4" y="598.8" width="1.3" height="1.3" fill="#e81a12"/>
<rect x="520.8" y="599.1" width="1.3" height="1.3" fill="#e81a12"/>
<rect x="530.2" y="600.1" width="1.3" height="1.3" fill="#e81a12"/>
<rect x="529.1" y="600.1" width="1.3" height="1.3" fill="#e81a12"/>
<rect x="521.8" y="598.9" width="1.3" height="1.3" fill="#e81a12"/>
<rect x="522.6" y="599.1" width="1.3" height="1.3" fill="#e81a12"/>
<rect x="530.6" y="599.9" width="1.3" height="1.3" fill="#e81a12"/>
<rect x="518.9" y="599.2" width="1.3" height="1.3" fill="#e81a12"/>
<rect x="543" y="596.1" width="1.3" height="1.3" fill="#e81a12"/>
<rect x="542.9" y="590.5" width="1.3" height="1.3" fill="#e81a12"/>
<rect x="543.1" y="599.8" width="1.3" height="1.3" fill="#e81a12"/>
<rect x="543.2" y="594.5" width="1.3" height="1.3" fill="#e81a12"/>
<rect x="543.5" y="592.5" width="1.3" height="1.3" fill="#e81a12"/>
<rect x="543" y="590.4" width="1.3" height="1.3" fill="#e81a12"/>
<rect x="543.4" y="600.1" width="1.3" height="1.3" fill="#e81a12"/>
<rect x="543.1" y="591.6" width="1.3" height="1.3" fill="#e81a12"/>
<rect x="551.2" y="604.5" width="1.3" height="1.3" fill="#e81a12"/>
<rect x="550" y="598.5" width="1.3" height="1.3" fill="#e81a12"/>
<rect x="552.8" y="623.8" width="1.3" height="1.3" fill="#e81a12"/>
<rect x="551.2" y="616.8" width="1.3" height="1.3" fill="#e81a12"/>
<rect x="552.1" y="626.2" width="1.3" height="1.3" fill="#e81a12"/>
<rect x="553.9" y="619.2" width="1.3" height="1.3" fill="#e81a12"/>
<rect x="551.9" y="617.4" width="1.3" height="1.3" fill="#e81a12"/>
<rect x="551.4" y="606.6" width="1.3" height="1.3" fill="#e81a12"/>
<rect x="553.2" y="623.9" width="1.3" height="1.3" fill="#e81a12"/>
<rect x="551.1" y="608.5" width="1.3" height="1.3" fill="#e81a12"/>
<rect x="551.9" y="618.1" width="1.3" height="1.3" fill="#e81a12"/>
<rect x="550.6" y="608.4" width="1.3" height="1.3" fill="#e81a12"/>
<rect x="550.9" y="610.1" width="1.3" height="1.3" fill="#e81a12"/>
<rect x="552" y="626.6" width="1.3" height="1.3" fill="#e81a12"/>
<rect x="551.1" y="606.1" width="1.3" height="1.3" fill="#e81a12"/>
<rect x="551.6" y="619.1" width="1.3" height="1.3" fill="#e81a12"/>
<rect x="550" y="616.1" width="1.3" height="1.3" fill="#e81a12"/>
<rect x="552.1" y="615.8" width="1.3" height="1.3" fill="#e81a12"/>
<rect x="552.4" y="624.9" width="1.3" height="1.3" fill="#e81a12"/>
<rect x="550.1" y="616" width="1.3" height="1.3" fill="#e81a12"/>
<rect x="552.6" y="605.8" width="1.3" height="1.3" fill="#e81a12"/>
<rect x="550.5" y="610.2" width="1.3" height="1.3" fill="#e81a12"/>
<rect x="552.8" y="624.8" width="1.3" height="1.3" fill="#e81a12"/>
<rect x="551.4" y="622.6" width="1.3" height="1.3" fill="#e81a12"/>
<rect x="549.8" y="605.6" width="1.3" height="1.3" fill="#e81a12"/>
<rect x="551.2" y="618.6" width="1.3" height="1.3" fill="#e81a12"/>
<rect x="550.2" y="599.6" width="1.3" height="1.3" fill="#e81a12"/>
<rect x="549.6" y="603.2" width="1.3" height="1.3" fill="#e81a12"/>
<rect x="550.5" y="604.2" width="1.3" height="1.3" fill="#e81a12"/>
<rect x="552.4" y="611.6" width="1.3" height="1.3" fill="#e81a12"/>
<rect x="551.6" y="620.6" width="1.3" height="1.3" fill="#e81a12"/>
<rect x="549.8" y="599.6" width="1.3" height="1.3" fill="#e81a12"/>
<rect x="550.1" y="604.2" width="1.3" height="1.3" fill="#e81a12"/>
<rect x="552.5" y="624.8" width="1.3" height="1.3" fill="#e81a12"/>
<rect x="552.6" y="615.4" width="1.3" height="1.3" fill="#e81a12"/>
<rect x="550.9" y="602.6" width="1.3" height="1.3" fill="#e81a12"/>
<rect x="551.6" y="614.6" width="1.3" height="1.3" fill="#e81a12"/>
<rect x="551" y="601.6" width="1.3" height="1.3" fill="#e81a12"/>
<rect x="551.8" y="608.6" width="1.3" height="1.3" fill="#e81a12"/>
<rect x="552.6" y="621.6" width="1.3" height="1.3" fill="#e81a12"/>
<rect x="552.1" y="607.8" width="1.3" height="1.3" fill="#e81a12"/>
<rect x="549.1" y="598" width="1.3" height="1.3" fill="#e81a12"/>
<rect x="551.6" y="612.1" width="1.3" height="1.3" fill="#e81a12"/>
<rect x="551.4" y="621.5" width="1.3" height="1.3" fill="#e81a12"/>
<rect x="550.6" y="621.2" width="1.3" height="1.3" fill="#e81a12"/>
<rect x="552.6" y="604.9" width="1.3" height="1.3" fill="#e81a12"/>
<rect x="552.8" y="602.6" width="1.3" height="1.3" fill="#e81a12"/>
<rect x="550.8" y="614.6" width="1.3" height="1.3" fill="#e81a12"/>
<rect x="552.8" y="626.6" width="1.3" height="1.3" fill="#e81a12"/>
<rect x="552.5" y="615.6" width="1.3" height="1.3" fill="#e81a12"/>
<rect x="553.1" y="627.1" width="1.3" height="1.3" fill="#e81a12"/>
<rect x="550.4" y="617.1" width="1.3" height="1.3" fill="#e81a12"/>
<rect x="552" y="609.2" width="1.3" height="1.3" fill="#e81a12"/>
<rect x="552.4" y="627.4" width="1.3" height="1.3" fill="#e81a12"/>
<rect x="551.6" y="598.1" width="1.3" height="1.3" fill="#e81a12"/>
<rect x="551.1" y="625.5" width="1.3" height="1.3" fill="#e81a12"/>
<rect x="550" y="598.4" width="1.3" height="1.3" fill="#e81a12"/>
<rect x="551.6" y="617.2" width="1.3" height="1.3" fill="#e81a12"/>
<rect x="549.6" y="601.5" width="1.3" height="1.3" fill="#e81a12"/>
<rect x="552" y="618.1" width="1.3" height="1.3" fill="#e81a12"/>
<rect x="553.1" y="620.6" width="1.3" height="1.3" fill="#e81a12"/>
<rect x="551.9" y="605" width="1.3" height="1.3" fill="#e81a12"/>
<rect x="552.2" y="602.1" width="1.3" height="1.3" fill="#e81a12"/>
<rect x="552.4" y="618.1" width="1.3" height="1.3" fill="#e81a12"/>
<rect x="551.1" y="603.1" width="1.3" height="1.3" fill="#e81a12"/>
<rect x="549.5" y="603.9" width="1.3" height="1.3" fill="#e81a12"/>
<rect x="553.2" y="624.8" width="1.3" height="1.3" fill="#e81a12"/>
<rect x="549.4" y="600" width="1.3" height="1.3" fill="#e81a12"/>
<rect x="552.1" y="616.6" width="1.3" height="1.3" fill="#e81a12"/>
<rect x="552.1" y="622.9" width="1.3" height="1.3" fill="#e81a12"/>
<rect x="534.9" y="649.8" width="1.3" height="1.3" fill="#e81a12"/>
<rect x="534.9" y="651.5" width="1.3" height="1.3" fill="#e81a12"/>
<rect x="535" y="652" width="1.3" height="1.3" fill="#e81a12"/>
<rect x="534.4" y="649.9" width="1.3" height="1.3" fill="#e81a12"/>
<rect x="681.8" y="532.4" width="1.3" height="1.3" fill="#e81a12"/>
<rect x="680.6" y="532.2" width="1.3" height="1.3" fill="#e81a12"/>
<rect x="683.9" y="545.4" width="1.3" height="1.3" fill="#e81a12"/>
<rect x="683.1" y="539.1" width="1.3" height="1.3" fill="#e81a12"/>
<rect x="682.1" y="531.2" width="1.3" height="1.3" fill="#e81a12"/>
<rect x="678" y="533.8" width="1.3" height="1.3" fill="#e81a12"/>
<rect x="685.2" y="544" width="1.3" height="1.3" fill="#e81a12"/>
<rect x="684" y="543.6" width="1.3" height="1.3" fill="#e81a12"/>
<rect x="680.6" y="531.8" width="1.3" height="1.3" fill="#e81a12"/>
<rect x="684.5" y="541.6" width="1.3" height="1.3" fill="#e81a12"/>
<rect x="678.4" y="526.1" width="1.3" height="1.3" fill="#e81a12"/>
<rect x="679.1" y="529.8" width="1.3" height="1.3" fill="#e81a12"/>
<rect x="681.1" y="530.1" width="1.3" height="1.3" fill="#e81a12"/>
<rect x="678.6" y="529.8" width="1.3" height="1.3" fill="#e81a12"/>
<rect x="682.6" y="529.2" width="1.3" height="1.3" fill="#e81a12"/>
<rect x="682.6" y="537.9" width="1.3" height="1.3" fill="#e81a12"/>
<rect x="679.2" y="530.1" width="1.3" height="1.3" fill="#e81a12"/>
<rect x="683.6" y="542" width="1.3" height="1.3" fill="#e81a12"/>
<rect x="679.2" y="527.2" width="1.3" height="1.3" fill="#e81a12"/>
<rect x="683" y="540.2" width="1.3" height="1.3" fill="#e81a12"/>
<rect x="678.6" y="533.1" width="1.3" height="1.3" fill="#e81a12"/>
<rect x="681.6" y="535.6" width="1.3" height="1.3" fill="#e81a12"/>
<rect x="681" y="535.6" width="1.3" height="1.3" fill="#e81a12"/>
<rect x="679.6" y="529.8" width="1.3" height="1.3" fill="#e81a12"/>
<rect x="680.1" y="529.1" width="1.3" height="1.3" fill="#e81a12"/>
<rect x="679.5" y="526" width="1.3" height="1.3" fill="#e81a12"/>
<rect x="682.1" y="536.1" width="1.3" height="1.3" fill="#e81a12"/>
<rect x="682.5" y="542.4" width="1.3" height="1.3" fill="#e81a12"/>
<rect x="682.1" y="540.1" width="1.3" height="1.3" fill="#e81a12"/>
<rect x="677.1" y="527.6" width="1.3" height="1.3" fill="#e81a12"/>
<rect x="681.4" y="535.9" width="1.3" height="1.3" fill="#e81a12"/>
<rect x="681.6" y="536.6" width="1.3" height="1.3" fill="#e81a12"/>
<rect x="682.4" y="529.9" width="1.3" height="1.3" fill="#e81a12"/>
<rect x="680.9" y="530.8" width="1.3" height="1.3" fill="#e81a12"/>
<rect x="680.1" y="527.8" width="1.3" height="1.3" fill="#e81a12"/>
<rect x="679" y="526.4" width="1.3" height="1.3" fill="#e81a12"/>
<rect x="682.1" y="536.1" width="1.3" height="1.3" fill="#e81a12"/>
<rect x="684" y="543.1" width="1.3" height="1.3" fill="#e81a12"/>
<rect x="679.9" y="528.4" width="1.3" height="1.3" fill="#e81a12"/>
<rect x="682" y="531.1" width="1.3" height="1.3" fill="#e81a12"/>
<rect x="678.6" y="528.9" width="1.3" height="1.3" fill="#e81a12"/>
<rect x="679.1" y="529.1" width="1.3" height="1.3" fill="#e81a12"/>
<rect x="677.9" y="529.6" width="1.3" height="1.3" fill="#e81a12"/>
<rect x="680.2" y="533.9" width="1.3" height="1.3" fill="#e81a12"/>
<rect x="680.6" y="536.6" width="1.3" height="1.3" fill="#e81a12"/>
<rect x="684.1" y="541.1" width="1.3" height="1.3" fill="#e81a12"/>
<rect x="679.6" y="532.9" width="1.3" height="1.3" fill="#e81a12"/>
<rect x="680.8" y="542.5" width="1.3" height="1.3" fill="#e81a12"/>
<rect x="684.4" y="542.6" width="1.3" height="1.3" fill="#e81a12"/>
<rect x="683.1" y="545.1" width="1.3" height="1.3" fill="#e81a12"/>
<rect x="681.1" y="534.4" width="1.3" height="1.3" fill="#e81a12"/>
<rect x="683.1" y="536.1" width="1.3" height="1.3" fill="#e81a12"/>
<rect x="684" y="535.4" width="1.3" height="1.3" fill="#e81a12"/>
<rect x="681.6" y="545.8" width="1.3" height="1.3" fill="#e81a12"/>
<rect x="680.1" y="539.1" width="1.3" height="1.3" fill="#e81a12"/>
<rect x="684.2" y="543.4" width="1.3" height="1.3" fill="#e81a12"/>
<rect x="680.6" y="531.1" width="1.3" height="1.3" fill="#e81a12"/>
<rect x="680.1" y="537.1" width="1.3" height="1.3" fill="#e81a12"/>
<rect x="680.6" y="530.9" width="1.3" height="1.3" fill="#e81a12"/>
<rect x="684.9" y="544.6" width="1.3" height="1.3" fill="#e81a12"/>
<rect x="683.1" y="538.6" width="1.3" height="1.3" fill="#e81a12"/>
<rect x="684.2" y="544.9" width="1.3" height="1.3" fill="#e81a12"/>
<rect x="682.2" y="535.1" width="1.3" height="1.3" fill="#e81a12"/>
<rect x="681.6" y="528" width="1.3" height="1.3" fill="#e81a12"/>
<rect x="682.5" y="533.8" width="1.3" height="1.3" fill="#e81a12"/>
<rect x="678.6" y="527.9" width="1.3" height="1.3" fill="#e81a12"/>
<rect x="681.4" y="538.2" width="1.3" height="1.3" fill="#e81a12"/>
<rect x="679.6" y="530" width="1.3" height="1.3" fill="#e81a12"/>
<rect x="681.5" y="536.9" width="1.3" height="1.3" fill="#e81a12"/>
<rect x="682.2" y="531.8" width="1.3" height="1.3" fill="#e81a12"/>
<rect x="681.6" y="536.1" width="1.3" height="1.3" fill="#e81a12"/>
<rect x="678.8" y="526.2" width="1.3" height="1.3" fill="#e81a12"/>
<rect x="680.2" y="530.6" width="1.3" height="1.3" fill="#e81a12"/>
<rect x="679.8" y="531.8" width="1.3" height="1.3" fill="#e81a12"/>
<rect x="685.1" y="540.8" width="1.3" height="1.3" fill="#e81a12"/>
<rect x="684.6" y="543" width="1.3" height="1.3" fill="#e81a12"/>
<rect x="680.5" y="533.8" width="1.3" height="1.3" fill="#e81a12"/>
<rect x="679.2" y="528.1" width="1.3" height="1.3" fill="#e81a12"/>
<rect x="684.1" y="540.2" width="1.3" height="1.3" fill="#e81a12"/>
<rect x="680" y="533.1" width="1.3" height="1.3" fill="#e81a12"/>
<rect x="682.1" y="543.1" width="1.3" height="1.3" fill="#e81a12"/>
<rect x="681.1" y="541" width="1.3" height="1.3" fill="#e81a12"/>
<rect x="680" y="535.8" width="1.3" height="1.3" fill="#e81a12"/>
<rect x="683.5" y="544.1" width="1.3" height="1.3" fill="#e81a12"/>
<rect x="678.4" y="526.1" width="1.3" height="1.3" fill="#e81a12"/>
<rect x="680" y="536.2" width="1.3" height="1.3" fill="#e81a12"/>
<rect x="679.1" y="534.6" width="1.3" height="1.3" fill="#e81a12"/>
<rect x="682.5" y="538" width="1.3" height="1.3" fill="#e81a12"/>
<rect x="681.2" y="535.1" width="1.3" height="1.3" fill="#e81a12"/>
<rect x="681.1" y="533.6" width="1.3" height="1.3" fill="#e81a12"/>
<rect x="678.9" y="532.8" width="1.3" height="1.3" fill="#e81a12"/>
<rect x="682.6" y="535.6" width="1.3" height="1.3" fill="#e81a12"/>
<rect x="681.5" y="531.8" width="1.3" height="1.3" fill="#e81a12"/>
<rect x="681.9" y="537.6" width="1.3" height="1.3" fill="#e81a12"/>
<rect x="678.8" y="532.8" width="1.3" height="1.3" fill="#e81a12"/>
<rect x="684.8" y="544.8" width="1.3" height="1.3" fill="#e81a12"/>
<rect x="686.1" y="543.5" width="1.3" height="1.3" fill="#e81a12"/>
<rect x="680.6" y="537.5" width="1.3" height="1.3" fill="#e81a12"/>
<rect x="681.2" y="541.8" width="1.3" height="1.3" fill="#e81a12"/>
<rect x="681" y="536.4" width="1.3" height="1.3" fill="#e81a12"/>
<rect x="681.1" y="533.6" width="1.3" height="1.3" fill="#e81a12"/>
<rect x="679" y="533.2" width="1.3" height="1.3" fill="#e81a12"/>
<rect x="683.1" y="536.1" width="1.3" height="1.3" fill="#e81a12"/>
<rect x="680.6" y="534" width="1.3" height="1.3" fill="#e81a12"/>
<rect x="682" y="543.8" width="1.3" height="1.3" fill="#e81a12"/>
<rect x="679.4" y="535.1" width="1.3" height="1.3" fill="#e81a12"/>
<rect x="679.8" y="533" width="1.3" height="1.3" fill="#e81a12"/>
<rect x="679.2" y="529.5" width="1.3" height="1.3" fill="#e81a12"/>
<rect x="684.1" y="542.1" width="1.3" height="1.3" fill="#e81a12"/>
<rect x="681.9" y="544.1" width="1.3" height="1.3" fill="#e81a12"/>
<rect x="683" y="545.9" width="1.3" height="1.3" fill="#e81a12"/>
<rect x="680.6" y="528.9" width="1.3" height="1.3" fill="#e81a12"/>
<rect x="683.4" y="535.6" width="1.3" height="1.3" fill="#e81a12"/>
<rect x="682.2" y="538.5" width="1.3" height="1.3" fill="#e81a12"/>
<rect x="684.8" y="545.6" width="1.3" height="1.3" fill="#e81a12"/>
<rect x="680.9" y="534.1" width="1.3" height="1.3" fill="#e81a12"/>
<rect x="684.4" y="539.2" width="1.3" height="1.3" fill="#e81a12"/>
<rect x="682.4" y="542.9" width="1.3" height="1.3" fill="#e81a12"/>
<rect x="680.1" y="529.9" width="1.3" height="1.3" fill="#e81a12"/>
<rect x="680" y="531.2" width="1.3" height="1.3" fill="#e81a12"/>
<rect x="683.9" y="545.8" width="1.3" height="1.3" fill="#e81a12"/>
<rect x="680.1" y="528.2" width="1.3" height="1.3" fill="#e81a12"/>
<rect x="682" y="527.6" width="1.3" height="1.3" fill="#e81a12"/>
<rect x="680.4" y="536.6" width="1.3" height="1.3" fill="#e81a12"/>
<rect x="685.6" y="541.4" width="1.3" height="1.3" fill="#e81a12"/>
<rect x="682.6" y="541.4" width="1.3" height="1.3" fill="#e81a12"/>
<rect x="682.6" y="532.6" width="1.3" height="1.3" fill="#e81a12"/>
<rect x="678.4" y="528.1" width="1.3" height="1.3" fill="#e81a12"/>
<rect x="681.4" y="532.8" width="1.3" height="1.3" fill="#e81a12"/>
<rect x="678.1" y="527.2" width="1.3" height="1.3" fill="#e81a12"/>
<rect x="686.4" y="564.6" width="1.3" height="1.3" fill="#e81a12"/>
<rect x="686.5" y="551.1" width="1.3" height="1.3" fill="#e81a12"/>
<rect x="686.5" y="562.6" width="1.3" height="1.3" fill="#e81a12"/>
<rect x="686.8" y="561.9" width="1.3" height="1.3" fill="#e81a12"/>
<rect x="686" y="564.6" width="1.3" height="1.3" fill="#e81a12"/>
<rect x="686.2" y="551" width="1.3" height="1.3" fill="#e81a12"/>
<rect x="686.1" y="550.6" width="1.3" height="1.3" fill="#e81a12"/>
<rect x="687.4" y="555.5" width="1.3" height="1.3" fill="#e81a12"/>
<rect x="686.6" y="549.6" width="1.3" height="1.3" fill="#e81a12"/>
<rect x="686.6" y="564.9" width="1.3" height="1.3" fill="#e81a12"/>
<rect x="686" y="548.5" width="1.3" height="1.3" fill="#e81a12"/>
<rect x="687.9" y="553.8" width="1.3" height="1.3" fill="#e81a12"/>
<rect x="687.1" y="562.1" width="1.3" height="1.3" fill="#e81a12"/>
<rect x="686.6" y="549.9" width="1.3" height="1.3" fill="#e81a12"/>
<rect x="685.5" y="547.1" width="1.3" height="1.3" fill="#e81a12"/>
<rect x="686.1" y="549.2" width="1.3" height="1.3" fill="#e81a12"/>
<rect x="686.6" y="551.5" width="1.3" height="1.3" fill="#e81a12"/>
<rect x="686.6" y="554.9" width="1.3" height="1.3" fill="#e81a12"/>
<rect x="686" y="549.4" width="1.3" height="1.3" fill="#e81a12"/>
<rect x="686.8" y="553.5" width="1.3" height="1.3" fill="#e81a12"/>
<rect x="686.8" y="564.5" width="1.3" height="1.3" fill="#e81a12"/>
<rect x="687.5" y="554.9" width="1.3" height="1.3" fill="#e81a12"/>
<rect x="680.4" y="581.9" width="1.3" height="1.3" fill="#e81a12"/>
<rect x="681" y="583.6" width="1.3" height="1.3" fill="#e81a12"/>
<rect x="681.1" y="581.1" width="1.3" height="1.3" fill="#e81a12"/>
<rect x="680.9" y="585.9" width="1.3" height="1.3" fill="#e81a12"/>
<rect x="680.1" y="589.9" width="1.3" height="1.3" fill="#e81a12"/>
<rect x="680.9" y="586.6" width="1.3" height="1.3" fill="#e81a12"/>
<rect x="681.1" y="579.1" width="1.3" height="1.3" fill="#e81a12"/>
<rect x="681.1" y="582.9" width="1.3" height="1.3" fill="#e81a12"/>
<rect x="680.6" y="586.6" width="1.3" height="1.3" fill="#e81a12"/>
<rect x="681.6" y="582.6" width="1.3" height="1.3" fill="#e81a12"/>
<rect x="681.2" y="581.4" width="1.3" height="1.3" fill="#e81a12"/>
<rect x="680.6" y="582.1" width="1.3" height="1.3" fill="#e81a12"/>
<rect x="679.2" y="589.8" width="1.3" height="1.3" fill="#e81a12"/>
<rect x="682.1" y="580" width="1.3" height="1.3" fill="#e81a12"/>
<rect x="680.4" y="588.4" width="1.3" height="1.3" fill="#e81a12"/>
<rect x="680.2" y="584.2" width="1.3" height="1.3" fill="#e81a12"/>
<rect x="680.8" y="581.6" width="1.3" height="1.3" fill="#e81a12"/>
<rect x="681.2" y="587.6" width="1.3" height="1.3" fill="#e81a12"/>
<rect x="679.5" y="592" width="1.3" height="1.3" fill="#e81a12"/>
<rect x="682.2" y="578.6" width="1.3" height="1.3" fill="#e81a12"/>
<rect x="681.5" y="581" width="1.3" height="1.3" fill="#e81a12"/>
<rect x="681.4" y="578.5" width="1.3" height="1.3" fill="#e81a12"/>
<rect x="680.6" y="580.6" width="1.3" height="1.3" fill="#e81a12"/>
<rect x="680.6" y="589" width="1.3" height="1.3" fill="#e81a12"/>
<rect x="681.1" y="588.6" width="1.3" height="1.3" fill="#e81a12"/>
<rect x="680.1" y="590.8" width="1.3" height="1.3" fill="#e81a12"/>
<rect x="680.8" y="578.5" width="1.3" height="1.3" fill="#e81a12"/>
<rect x="682.1" y="578.6" width="1.3" height="1.3" fill="#e81a12"/>
<rect x="676.5" y="616.2" width="1.3" height="1.3" fill="#e81a12"/>
<rect x="677.4" y="615.1" width="1.3" height="1.3" fill="#e81a12"/>
<rect x="677" y="604.6" width="1.3" height="1.3" fill="#e81a12"/>
<rect x="678.6" y="601.5" width="1.3" height="1.3" fill="#e81a12"/>
<rect x="676.8" y="605.5" width="1.3" height="1.3" fill="#e81a12"/>
<rect x="675.9" y="614.6" width="1.3" height="1.3" fill="#e81a12"/>
<rect x="678.6" y="606.6" width="1.3" height="1.3" fill="#e81a12"/>
<rect x="677.1" y="605.6" width="1.3" height="1.3" fill="#e81a12"/>
<rect x="679.8" y="597.1" width="1.3" height="1.3" fill="#e81a12"/>
<rect x="676.9" y="613.8" width="1.3" height="1.3" fill="#e81a12"/>
<rect x="676.4" y="609.1" width="1.3" height="1.3" fill="#e81a12"/>
<rect x="679.2" y="609.4" width="1.3" height="1.3" fill="#e81a12"/>
<rect x="679.2" y="603.9" width="1.3" height="1.3" fill="#e81a12"/>
<rect x="679" y="602.5" width="1.3" height="1.3" fill="#e81a12"/>
<rect x="678.4" y="613" width="1.3" height="1.3" fill="#e81a12"/>
<rect x="677" y="608.1" width="1.3" height="1.3" fill="#e81a12"/>
<rect x="678.1" y="603.5" width="1.3" height="1.3" fill="#e81a12"/>
<rect x="679.6" y="597.5" width="1.3" height="1.3" fill="#e81a12"/>
<rect x="676" y="617" width="1.3" height="1.3" fill="#e81a12"/>
<rect x="678.6" y="598.1" width="1.3" height="1.3" fill="#e81a12"/>
<rect x="676.6" y="606.6" width="1.3" height="1.3" fill="#e81a12"/>
<rect x="680.1" y="596.8" width="1.3" height="1.3" fill="#e81a12"/>
<rect x="680.5" y="599.6" width="1.3" height="1.3" fill="#e81a12"/>
<rect x="678.8" y="599.1" width="1.3" height="1.3" fill="#e81a12"/>
<rect x="679.9" y="596.6" width="1.3" height="1.3" fill="#e81a12"/>
<rect x="680.1" y="604.1" width="1.3" height="1.3" fill="#e81a12"/>
<rect x="678.1" y="593.5" width="1.3" height="1.3" fill="#e81a12"/>
<rect x="678" y="595.6" width="1.3" height="1.3" fill="#e81a12"/>
<rect x="678.5" y="609.9" width="1.3" height="1.3" fill="#e81a12"/>
<rect x="678.8" y="606.1" width="1.3" height="1.3" fill="#e81a12"/>
<rect x="678.6" y="593.5" width="1.3" height="1.3" fill="#e81a12"/>
<rect x="676.1" y="611.4" width="1.3" height="1.3" fill="#e81a12"/>
<rect x="680.2" y="600.9" width="1.3" height="1.3" fill="#e81a12"/>
<rect x="678.4" y="594" width="1.3" height="1.3" fill="#e81a12"/>
<rect x="679.1" y="602" width="1.3" height="1.3" fill="#e81a12"/>
<rect x="676.2" y="617.9" width="1.3" height="1.3" fill="#e81a12"/>
<rect x="675.5" y="616" width="1.3" height="1.3" fill="#e81a12"/>
<rect x="678.6" y="602.9" width="1.3" height="1.3" fill="#e81a12"/>
<rect x="678.8" y="602.6" width="1.3" height="1.3" fill="#e81a12"/>
<rect x="678.2" y="604.1" width="1.3" height="1.3" fill="#e81a12"/>
<rect x="679.2" y="594.5" width="1.3" height="1.3" fill="#e81a12"/>
<rect x="675.2" y="617" width="1.3" height="1.3" fill="#e81a12"/>
<rect x="676.1" y="620.8" width="1.3" height="1.3" fill="#e81a12"/>
<rect x="679.5" y="598" width="1.3" height="1.3" fill="#e81a12"/>
<rect x="679.9" y="595.8" width="1.3" height="1.3" fill="#e81a12"/>
<rect x="678" y="606.1" width="1.3" height="1.3" fill="#e81a12"/>
<rect x="680.6" y="594.6" width="1.3" height="1.3" fill="#e81a12"/>
<rect x="677.4" y="614.4" width="1.3" height="1.3" fill="#e81a12"/>
<rect x="676" y="618.1" width="1.3" height="1.3" fill="#e81a12"/>
<rect x="678.4" y="601.6" width="1.3" height="1.3" fill="#e81a12"/>
<rect x="678.6" y="605.6" width="1.3" height="1.3" fill="#e81a12"/>
<rect x="675.6" y="612.5" width="1.3" height="1.3" fill="#e81a12"/>
<rect x="679.8" y="598.1" width="1.3" height="1.3" fill="#e81a12"/>
<rect x="678.6" y="609.9" width="1.3" height="1.3" fill="#e81a12"/>
<rect x="680" y="595.9" width="1.3" height="1.3" fill="#e81a12"/>
<rect x="674.2" y="621.2" width="1.3" height="1.3" fill="#e81a12"/>
<rect x="674.6" y="621.5" width="1.3" height="1.3" fill="#e81a12"/>
<rect x="677.1" y="617" width="1.3" height="1.3" fill="#e81a12"/>
<rect x="677.8" y="611.1" width="1.3" height="1.3" fill="#e81a12"/>
<rect x="675.8" y="621" width="1.3" height="1.3" fill="#e81a12"/>
<rect x="678.1" y="602" width="1.3" height="1.3" fill="#e81a12"/>
<rect x="680.1" y="594.1" width="1.3" height="1.3" fill="#e81a12"/>
<rect x="678.6" y="606.5" width="1.3" height="1.3" fill="#e81a12"/>
<rect x="678.4" y="604.1" width="1.3" height="1.3" fill="#e81a12"/>
<rect x="677.9" y="608.8" width="1.3" height="1.3" fill="#e81a12"/>
<rect x="679.2" y="596.6" width="1.3" height="1.3" fill="#e81a12"/>
<rect x="677.8" y="609.2" width="1.3" height="1.3" fill="#e81a12"/>
<rect x="679.6" y="600.9" width="1.3" height="1.3" fill="#e81a12"/>
<rect x="678.8" y="600.6" width="1.3" height="1.3" fill="#e81a12"/>
<rect x="679.6" y="600.1" width="1.3" height="1.3" fill="#e81a12"/>
<rect x="678.6" y="608.4" width="1.3" height="1.3" fill="#e81a12"/>
<rect x="679.4" y="605.4" width="1.3" height="1.3" fill="#e81a12"/>
<rect x="675.9" y="618.4" width="1.3" height="1.3" fill="#e81a12"/>
<rect x="676.6" y="615.2" width="1.3" height="1.3" fill="#e81a12"/>
<rect x="677.1" y="614.2" width="1.3" height="1.3" fill="#e81a12"/>
<rect x="678" y="604.6" width="1.3" height="1.3" fill="#e81a12"/>
<rect x="677.8" y="609.8" width="1.3" height="1.3" fill="#e81a12"/>
<rect x="678.4" y="616.1" width="1.3" height="1.3" fill="#e81a12"/>
<rect x="679.2" y="604.2" width="1.3" height="1.3" fill="#e81a12"/>
<rect x="679" y="599.6" width="1.3" height="1.3" fill="#e81a12"/>
<rect x="677.1" y="605.6" width="1.3" height="1.3" fill="#e81a12"/>
<rect x="675.2" y="618.5" width="1.3" height="1.3" fill="#e81a12"/>
<rect x="676.6" y="618.6" width="1.3" height="1.3" fill="#e81a12"/>
<rect x="677.5" y="603.1" width="1.3" height="1.3" fill="#e81a12"/>
<rect x="677.6" y="617.5" width="1.3" height="1.3" fill="#e81a12"/>
<rect x="675.5" y="614.6" width="1.3" height="1.3" fill="#e81a12"/>
<rect x="680.4" y="594.8" width="1.3" height="1.3" fill="#e81a12"/>
<rect x="677.9" y="609.2" width="1.3" height="1.3" fill="#e81a12"/>
<rect x="676.4" y="620.2" width="1.3" height="1.3" fill="#e81a12"/>
<rect x="678.5" y="598.9" width="1.3" height="1.3" fill="#e81a12"/>
<rect x="694.9" y="638.6" width="1.3" height="1.3" fill="#e81a12"/>
<rect x="699.1" y="621.1" width="1.3" height="1.3" fill="#e81a12"/>
<rect x="691.9" y="648.9" width="1.3" height="1.3" fill="#e07a1c"/>
<rect x="692.1" y="649" width="1.3" height="1.3" fill="#e81a12"/>
<rect x="692.1" y="651.6" width="1.3" height="1.3" fill="#e81a12"/>
<rect x="695.1" y="635.4" width="1.3" height="1.3" fill="#e81a12"/>
<rect x="698.5" y="620.9" width="1.3" height="1.3" fill="#e07a1c"/>
<rect x="695.8" y="632" width="1.3" height="1.3" fill="#e81a12"/>
<rect x="695.1" y="631.9" width="1.3" height="1.3" fill="#e81a12"/>
<rect x="696" y="630.9" width="1.3" height="1.3" fill="#e81a12"/>
<rect x="694.6" y="639" width="1.3" height="1.3" fill="#e81a12"/>
<rect x="693.4" y="643.8" width="1.3" height="1.3" fill="#e81a12"/>
<rect x="696.4" y="629.2" width="1.3" height="1.3" fill="#e81a12"/>
<rect x="698.9" y="619" width="1.3" height="1.3" fill="#e81a12"/>
<rect x="694" y="640.4" width="1.3" height="1.3" fill="#e81a12"/>
<rect x="696.9" y="627.9" width="1.3" height="1.3" fill="#e07a1c"/>
<rect x="694.5" y="638.4" width="1.3" height="1.3" fill="#e07a1c"/>
<rect x="698.8" y="619.5" width="1.3" height="1.3" fill="#e81a12"/>
<rect x="692.6" y="645.4" width="1.3" height="1.3" fill="#e81a12"/>
<rect x="692.8" y="646" width="1.3" height="1.3" fill="#e81a12"/>
<rect x="693.5" y="642.1" width="1.3" height="1.3" fill="#e07a1c"/>
<rect x="695.6" y="630.9" width="1.3" height="1.3" fill="#e07a1c"/>
<rect x="714.6" y="629.8" width="1.3" height="1.3" fill="#e07a1c"/>
<rect x="718.4" y="628.8" width="1.3" height="1.3" fill="#e81a12"/>
<rect x="716.8" y="629.1" width="1.3" height="1.3" fill="#e81a12"/>
<rect x="699.6" y="635.5" width="1.3" height="1.3" fill="#e07a1c"/>
<rect x="708" y="632.6" width="1.3" height="1.3" fill="#e81a12"/>
<rect x="702.5" y="634.1" width="1.3" height="1.3" fill="#e07a1c"/>
<rect x="701" y="634.9" width="1.3" height="1.3" fill="#e81a12"/>
<rect x="705.8" y="632.8" width="1.3" height="1.3" fill="#e07a1c"/>
<rect x="714.9" y="630.1" width="1.3" height="1.3" fill="#e07a1c"/>
<rect x="718.6" y="628.2" width="1.3" height="1.3" fill="#e81a12"/>
<rect x="715.6" y="629.4" width="1.3" height="1.3" fill="#e81a12"/>
<rect x="704" y="633.4" width="1.3" height="1.3" fill="#e07a1c"/>
<rect x="737" y="573.4" width="1.3" height="1.3" fill="#e81a12"/>
<rect x="737.6" y="572.1" width="1.3" height="1.3" fill="#e81a12"/>
<rect x="742.6" y="566.8" width="1.3" height="1.3" fill="#e81a12"/>
<rect x="741.1" y="569.4" width="1.3" height="1.3" fill="#e81a12"/>
<rect x="739.1" y="570.5" width="1.3" height="1.3" fill="#e81a12"/>
<rect x="735.1" y="587.6" width="1.3" height="1.3" fill="#e81a12"/>
<rect x="734.6" y="585.1" width="1.3" height="1.3" fill="#e07a1c"/>
<rect x="734.1" y="581" width="1.3" height="1.3" fill="#e81a12"/>
<rect x="734.8" y="585" width="1.3" height="1.3" fill="#e07a1c"/>
<rect x="734.8" y="581.6" width="1.3" height="1.3" fill="#e07a1c"/>
<rect x="734.6" y="584.5" width="1.3" height="1.3" fill="#e07a1c"/>
<rect x="740.2" y="589.4" width="1.3" height="1.3" fill="#e81a12"/>
<rect x="779.4" y="610.2" width="1.3" height="1.3" fill="#e81a12"/>
<rect x="780.2" y="609.1" width="1.3" height="1.3" fill="#e81a12"/>
<rect x="777.9" y="612.9" width="1.3" height="1.3" fill="#e81a12"/>
<rect x="779.4" y="610.8" width="1.3" height="1.3" fill="#e81a12"/>
<rect x="773" y="637.9" width="1.3" height="1.3" fill="#e81a12"/>
<rect x="772.1" y="635.8" width="1.3" height="1.3" fill="#e81a12"/>
<rect x="772.4" y="636.6" width="1.3" height="1.3" fill="#e81a12"/>
<rect x="772" y="634.1" width="1.3" height="1.3" fill="#e81a12"/>
<rect x="817.6" y="649.1" width="1.3" height="1.3" fill="#e81a12"/>
<rect x="820.1" y="647.9" width="1.3" height="1.3" fill="#e81a12"/>
<rect x="817" y="650.1" width="1.3" height="1.3" fill="#e81a12"/>
<rect x="743.6" y="567.2" width="1.3" height="1.3" fill="#e81a12"/>
<rect x="740.8" y="570.8" width="1.3" height="1.3" fill="#e81a12"/>
<rect x="743.9" y="567.8" width="1.3" height="1.3" fill="#e81a12"/>
<rect x="745.6" y="565.6" width="1.3" height="1.3" fill="#e81a12"/>
<path d="M827.7 472.3 L838.7 496.3" stroke="#b8d828" stroke-width="1.35"/>
<path d="M838.7 496.3 L840.9 501.1" stroke="#e02c10" stroke-width="1.3"/>
<path d="M826.3 478.3 L837 501" stroke="#d8d020" stroke-width="1.35"/>
<path d="M837 501 L839.2 505.8" stroke="#e02c10" stroke-width="1.3"/>
<path d="M824 483 L834.3 505" stroke="#d8c820" stroke-width="1.35"/>
<path d="M834.3 505 L836.5 509.8" stroke="#e02c10" stroke-width="1.3"/>
<path d="M822.3 488.3 L833 511" stroke="#e0a820" stroke-width="1.35"/>
<path d="M833 511 L835.2 515.8" stroke="#e02c10" stroke-width="1.3"/>
<path d="M821 493 L831.7 515.7" stroke="#38d830" stroke-width="1.35"/>
<path d="M831.7 515.7 L833.9 520.5" stroke="#e02c10" stroke-width="1.3"/>
<path d="M819.7 497.7 L829.7 519.7" stroke="#a0d828" stroke-width="1.35"/>
<path d="M829.7 519.7 L831.9 524.5" stroke="#e02c10" stroke-width="1.3"/>
<path d="M818 501.7 L827.7 524.3" stroke="#b8d828" stroke-width="1.35"/>
<path d="M827.7 524.3 L829.9 529.1" stroke="#e02c10" stroke-width="1.3"/>
<path d="M816.3 505.7 L826.3 529" stroke="#e08820" stroke-width="1.35"/>
<path d="M826.3 529 L828.5 533.8" stroke="#e02c10" stroke-width="1.3"/>
<path d="M832 476 L832.8 476.5" stroke="#e81a12" stroke-width="1.1"/>
<path d="M833.7 506.3 L837 511.7" stroke="#e04414" stroke-width="1.3"/>
<path d="M835.7 501.7 L839 507" stroke="#e04414" stroke-width="1.3"/>
<path d="M843.7 508.3 L854.3 530.3" stroke="#e83410" stroke-width="1.4"/>
<path d="M841.7 513.7 L852.3 535.7" stroke="#e83410" stroke-width="1.4"/>
<path d="M839.3 519 L849 540.3" stroke="#e83410" stroke-width="1.4"/>
<path d="M837.7 523.7 L848.3 546.3" stroke="#e83410" stroke-width="1.4"/>
<path d="M835.7 528.3 L845 549.7" stroke="#e83410" stroke-width="1.4"/>
<path d="M834.7 534.3 L844.3 555.7" stroke="#e83410" stroke-width="1.4"/>
<path d="M832.3 539 L840.3 557" stroke="#e83410" stroke-width="1.4"/>
<path d="M829 545 L835 558.3" stroke="#e83410" stroke-width="1.4"/>
<path d="M856.3 536.3 L861 543.7" stroke="#e83410" stroke-width="1.4"/>
<path d="M854.3 542.3 L861.7 555.7" stroke="#e83410" stroke-width="1.4"/>
<path d="M852.3 547.7 L857.7 558.3" stroke="#e83410" stroke-width="1.4"/>
<path d="M862.3 547.7 L863.7 551" stroke="#e83410" stroke-width="1.4"/>
<path d="M849.7 552.3 L853 558.3" stroke="#e83410" stroke-width="1.4"/>
<path d="M828.3 552.7 L835 572.7" stroke="#e86018" stroke-width="1.4"/>
<path d="M831 551.3 L839 570" stroke="#e83410" stroke-width="1.4"/>
<path d="M834.3 550 L840.3 564.7" stroke="#e83410" stroke-width="1.4"/>
<path d="M847 556.7 L855 571.3" stroke="#e86018" stroke-width="1.4"/>
<path d="M850.3 552.7 L856.3 565.3" stroke="#e83410" stroke-width="1.4"/>
<path d="M854.3 550 L858.3 560.7" stroke="#e83410" stroke-width="1.4"/>
<path d="M846.3 562.7 L853 576.7" stroke="#e86018" stroke-width="1.4"/>
<path d="M844.3 568 L850.3 580.7" stroke="#e83410" stroke-width="1.4"/>
<path d="M841.7 572.7 L847.7 585.3" stroke="#e83410" stroke-width="1.4"/>
<path d="M839.7 576.7 L847 591.3" stroke="#e86018" stroke-width="1.4"/>
<path d="M837.7 581.3 L844.3 596" stroke="#e83410" stroke-width="1.4"/>
<path d="M836.3 587.3 L842.3 600.7" stroke="#e83410" stroke-width="1.4"/>
<path d="M863 561.3 L871 573.3" stroke="#e86018" stroke-width="1.4"/>
<path d="M861 567.3 L868.3 579.3" stroke="#e83410" stroke-width="1.4"/>
<path d="M858.3 572 L865.7 584.7" stroke="#e83410" stroke-width="1.4"/>
<path d="M856.3 577.3 L861.7 589.3" stroke="#e86018" stroke-width="1.4"/>
<path d="M855 583.3 L860.3 594.7" stroke="#e83410" stroke-width="1.4"/>
<path d="M852.3 588 L855.7 594" stroke="#e83410" stroke-width="1.4"/>
<path d="M850.3 592.7 L855.7 605.3" stroke="#e86018" stroke-width="1.4"/>
<path d="M847.7 597.3 L853.7 610" stroke="#e83410" stroke-width="1.4"/>
<path d="M846.3 602 L851 614.7" stroke="#e83410" stroke-width="1.4"/>
<path d="M844.3 607.3 L850.3 620.7" stroke="#e86018" stroke-width="1.4"/>
<path d="M856 611.6 L857.2 611.9" stroke="#e81a12" stroke-width="1.2"/>
<path d="M857.7 618.3 L858.9 618.6" stroke="#e81a12" stroke-width="1.2"/>
<path d="M863.3 596.7 L864.5 597" stroke="#e81a12" stroke-width="1.2"/>
<path d="M797 503.7 L791 521" stroke="#e85818" stroke-width="1.6" stroke-dasharray="1.2 1.0"/>
<path d="M798.6 505 L792.6 522 L789.5 532" stroke="#e82c10" stroke-width="1.4" stroke-dasharray="1.2 1.0"/>
<path d="M791 521 L787.7 531.7" stroke="#e0b020" stroke-width="1.5" stroke-dasharray="1.2 1.0"/>
<path d="M787.7 531.7 L784 546" stroke="#e81a12" stroke-width="1.5" stroke-dasharray="1.2 1.0"/>
<path d="M792 530.3 L792.8 530.8" stroke="#34d030" stroke-width="1.2"/>
<path d="M786.5 526.5 L805 526.2" stroke="#e81a12" stroke-width="1.25" stroke-dasharray="1.1 2.0"/>
<path d="M786.3 530.8 L803.7 531.3" stroke="#e81a12" stroke-width="1.25" stroke-dasharray="1.1 2.3"/>
<path d="M786.1 535.1 L802.4 534.8" stroke="#e81a12" stroke-width="1.25" stroke-dasharray="1.1 2.0"/>
<path d="M785.9 539.4 L801.1 539.9" stroke="#e81a12" stroke-width="1.25" stroke-dasharray="1.1 2.3"/>
<path d="M785.7 543.7 L799.8 543.4" stroke="#e81a12" stroke-width="1.25" stroke-dasharray="1.1 2.0"/>
<path d="M785.5 548 L798.5 548.5" stroke="#e81a12" stroke-width="1.25" stroke-dasharray="1.1 2.3"/>
<path d="M785.3 552.3 L797.2 552" stroke="#e81a12" stroke-width="1.25" stroke-dasharray="1.1 2.0"/>
<path d="M785.1 556.6 L795.9 557.1" stroke="#e81a12" stroke-width="1.25" stroke-dasharray="1.1 2.3"/>
<path d="M786.4 560.9 L794.6 560.6" stroke="#e81a12" stroke-width="1.25" stroke-dasharray="1.1 2.0"/>
<path d="M786.2 565.2 L793.3 565.7" stroke="#e81a12" stroke-width="1.25" stroke-dasharray="1.1 2.3"/>
<path d="M786 569.5 L792 569.2" stroke="#e81a12" stroke-width="1.25" stroke-dasharray="1.1 2.0"/>
<rect x="789.9" y="561.1" width="1.3" height="1.3" fill="#e81a12"/>
<rect x="789.1" y="559.1" width="1.3" height="1.3" fill="#e81a12"/>
<rect x="792.6" y="569.9" width="1.3" height="1.3" fill="#e81a12"/>
<rect x="787.9" y="553.8" width="1.3" height="1.3" fill="#e81a12"/>
<rect x="791.9" y="563.6" width="1.3" height="1.3" fill="#e81a12"/>
<rect x="793.5" y="569.5" width="1.3" height="1.3" fill="#e81a12"/>
<rect x="786.5" y="554.8" width="1.3" height="1.3" fill="#e81a12"/>
<rect x="787" y="558.4" width="1.3" height="1.3" fill="#e81a12"/>
<rect x="786.5" y="549.6" width="1.3" height="1.3" fill="#e81a12"/>
<rect x="788.6" y="554.2" width="1.3" height="1.3" fill="#e81a12"/>
<rect x="788.6" y="559" width="1.3" height="1.3" fill="#e81a12"/>
<rect x="787.2" y="561.4" width="1.3" height="1.3" fill="#e81a12"/>
<rect x="787.4" y="560.9" width="1.3" height="1.3" fill="#e81a12"/>
<rect x="795.8" y="569.6" width="1.3" height="1.3" fill="#e81a12"/>
<rect x="786.6" y="551.1" width="1.3" height="1.3" fill="#e81a12"/>
<rect x="787.8" y="554.8" width="1.3" height="1.3" fill="#e81a12"/>
<rect x="796.4" y="569.5" width="1.3" height="1.3" fill="#e81a12"/>
<rect x="790.5" y="567.4" width="1.3" height="1.3" fill="#e81a12"/>
<rect x="785.1" y="550.6" width="1.3" height="1.3" fill="#e81a12"/>
<rect x="789" y="559.1" width="1.3" height="1.3" fill="#e81a12"/>
<rect x="791.6" y="564.4" width="1.3" height="1.3" fill="#e81a12"/>
<rect x="795.4" y="568.6" width="1.3" height="1.3" fill="#e81a12"/>
<rect x="789.5" y="560.6" width="1.3" height="1.3" fill="#e81a12"/>
<rect x="790.1" y="559.4" width="1.3" height="1.3" fill="#e81a12"/>
<rect x="790.9" y="563.6" width="1.3" height="1.3" fill="#e81a12"/>
<rect x="786.8" y="557.4" width="1.3" height="1.3" fill="#e81a12"/>
<path d="M810.3 551.7 L818 547.5 L826.3 543.7" stroke="#f02810" stroke-width="2.2"/>
<rect x="822.6" y="531.2" width="1.3" height="1.3" fill="#e81a12"/>
<rect x="820.6" y="530.8" width="1.3" height="1.3" fill="#e81a12"/>
<rect x="825.4" y="539.4" width="1.3" height="1.3" fill="#e81a12"/>
<rect x="828.4" y="541.6" width="1.3" height="1.3" fill="#e81a12"/>
<rect x="825.1" y="544.2" width="1.3" height="1.3" fill="#e81a12"/>
<rect x="821.1" y="528.1" width="1.3" height="1.3" fill="#e81a12"/>
<rect x="822.9" y="539.1" width="1.3" height="1.3" fill="#e81a12"/>
<rect x="821.5" y="537.9" width="1.3" height="1.3" fill="#e81a12"/>
<rect x="818.6" y="530.5" width="1.3" height="1.3" fill="#e81a12"/>
<rect x="828.6" y="543.1" width="1.3" height="1.3" fill="#e81a12"/>
<rect x="826.8" y="538.8" width="1.3" height="1.3" fill="#e81a12"/>
<rect x="828.6" y="543" width="1.3" height="1.3" fill="#e81a12"/>
<rect x="824.8" y="541.2" width="1.3" height="1.3" fill="#e81a12"/>
<rect x="823.8" y="533.1" width="1.3" height="1.3" fill="#e81a12"/>
<rect x="822.8" y="532.6" width="1.3" height="1.3" fill="#e81a12"/>
<rect x="826.8" y="544.2" width="1.3" height="1.3" fill="#e81a12"/>
<rect x="823.1" y="535.1" width="1.3" height="1.3" fill="#e81a12"/>
<rect x="819.5" y="531.5" width="1.3" height="1.3" fill="#e81a12"/>
<rect x="824.1" y="541.9" width="1.3" height="1.3" fill="#e81a12"/>
<rect x="820.5" y="532.8" width="1.3" height="1.3" fill="#e81a12"/>
<rect x="822.8" y="540.4" width="1.3" height="1.3" fill="#e81a12"/>
<rect x="826.4" y="541.2" width="1.3" height="1.3" fill="#e81a12"/>
<rect x="825" y="538.1" width="1.3" height="1.3" fill="#e81a12"/>
<rect x="822.1" y="535.1" width="1.3" height="1.3" fill="#e81a12"/>
<rect x="822.6" y="535.6" width="1.3" height="1.3" fill="#e81a12"/>
<rect x="823.6" y="537.9" width="1.3" height="1.3" fill="#e81a12"/>
<rect x="823.6" y="535.9" width="1.3" height="1.3" fill="#e81a12"/>
<rect x="821" y="535.1" width="1.3" height="1.3" fill="#e81a12"/>
<rect x="827.6" y="541.6" width="1.3" height="1.3" fill="#e81a12"/>
<rect x="826.9" y="543.9" width="1.3" height="1.3" fill="#e81a12"/>
<rect x="826.1" y="541.5" width="1.3" height="1.3" fill="#e81a12"/>
<rect x="822.6" y="539.9" width="1.3" height="1.3" fill="#e81a12"/>
<rect x="820" y="533.4" width="1.3" height="1.3" fill="#e81a12"/>
<rect x="822.1" y="534.1" width="1.3" height="1.3" fill="#e81a12"/>
<rect x="827.4" y="544.1" width="1.3" height="1.3" fill="#e81a12"/>
<rect x="824.4" y="533.6" width="1.3" height="1.3" fill="#e81a12"/>
<rect x="823.1" y="534.1" width="1.3" height="1.3" fill="#e81a12"/>
<rect x="824.1" y="539.1" width="1.3" height="1.3" fill="#e81a12"/>
<rect x="824.4" y="542.8" width="1.3" height="1.3" fill="#e81a12"/>
<rect x="821.6" y="533.8" width="1.3" height="1.3" fill="#e81a12"/>
<rect x="822.6" y="535.4" width="1.3" height="1.3" fill="#e81a12"/>
<rect x="822.6" y="534.5" width="1.3" height="1.3" fill="#e81a12"/>
<rect x="823.6" y="536.8" width="1.3" height="1.3" fill="#e81a12"/>
<rect x="822.8" y="532.6" width="1.3" height="1.3" fill="#e81a12"/>
<rect x="820.1" y="530.6" width="1.3" height="1.3" fill="#e81a12"/>
<rect x="816.5" y="556.5" width="1.3" height="1.3" fill="#e81a12"/>
<rect x="813.2" y="563.9" width="1.3" height="1.3" fill="#e81a12"/>
<rect x="810.5" y="569.8" width="1.3" height="1.3" fill="#e81a12"/>
<rect x="818.6" y="549.5" width="1.3" height="1.3" fill="#e81a12"/>
<rect x="808.4" y="577.6" width="1.3" height="1.3" fill="#e81a12"/>
<rect x="814.6" y="559.8" width="1.3" height="1.3" fill="#e07a1c"/>
<rect x="806.6" y="583.1" width="1.3" height="1.3" fill="#e81a12"/>
<rect x="809.9" y="573.6" width="1.3" height="1.3" fill="#e07a1c"/>
<rect x="813.1" y="564.1" width="1.3" height="1.3" fill="#e07a1c"/>
<rect x="812.1" y="566.2" width="1.3" height="1.3" fill="#e81a12"/>
<rect x="812" y="564.1" width="1.3" height="1.3" fill="#e81a12"/>
<rect x="804.1" y="587.6" width="1.3" height="1.3" fill="#e81a12"/>
<rect x="809.4" y="575.6" width="1.3" height="1.3" fill="#e07a1c"/>
<rect x="812.6" y="564.1" width="1.3" height="1.3" fill="#e81a12"/>
<rect x="816.1" y="553.4" width="1.3" height="1.3" fill="#e07a1c"/>
<rect x="811.6" y="565.4" width="1.3" height="1.3" fill="#e07a1c"/>
<rect x="812.6" y="565" width="1.3" height="1.3" fill="#e81a12"/>
<rect x="808.1" y="575.5" width="1.3" height="1.3" fill="#e81a12"/>
<rect x="805.8" y="585.9" width="1.3" height="1.3" fill="#e07a1c"/>
<rect x="808.1" y="579.8" width="1.3" height="1.3" fill="#e81a12"/>
<rect x="810.5" y="571.9" width="1.3" height="1.3" fill="#e81a12"/>
<rect x="810.2" y="571.5" width="1.3" height="1.3" fill="#e81a12"/>
<rect x="811.5" y="568.4" width="1.3" height="1.3" fill="#e07a1c"/>
<rect x="807" y="582.6" width="1.3" height="1.3" fill="#e81a12"/>
<rect x="806.6" y="583.8" width="1.3" height="1.3" fill="#e81a12"/>
<rect x="815.6" y="556.6" width="1.3" height="1.3" fill="#e81a12"/>
<rect x="813.6" y="561.6" width="1.3" height="1.3" fill="#e07a1c"/>
<rect x="811.5" y="569.6" width="1.3" height="1.3" fill="#e81a12"/>
<rect x="815" y="559.1" width="1.3" height="1.3" fill="#e81a12"/>
<rect x="814.8" y="561.6" width="1.3" height="1.3" fill="#e81a12"/>
<rect x="804.6" y="585.8" width="1.3" height="1.3" fill="#e81a12"/>
<rect x="813" y="563.6" width="1.3" height="1.3" fill="#e81a12"/>
<rect x="809" y="578.2" width="1.3" height="1.3" fill="#e81a12"/>
<rect x="818.4" y="551" width="1.3" height="1.3" fill="#e81a12"/>
<rect x="807.4" y="577" width="1.3" height="1.3" fill="#e07a1c"/>
<rect x="812.4" y="565.2" width="1.3" height="1.3" fill="#e81a12"/>
<rect x="817.5" y="551.6" width="1.3" height="1.3" fill="#e81a12"/>
<rect x="815.4" y="554.4" width="1.3" height="1.3" fill="#e07a1c"/>
<rect x="815.1" y="556.1" width="1.3" height="1.3" fill="#e81a12"/>
<rect x="810.4" y="568.6" width="1.3" height="1.3" fill="#e81a12"/>
<rect x="807.2" y="580.9" width="1.3" height="1.3" fill="#e81a12"/>
<rect x="811.1" y="569.6" width="1.3" height="1.3" fill="#e81a12"/>
<rect x="804.9" y="586.6" width="1.3" height="1.3" fill="#e81a12"/>
<rect x="808.1" y="577" width="1.3" height="1.3" fill="#e81a12"/>
<rect x="806.2" y="586" width="1.3" height="1.3" fill="#e07a1c"/>
<rect x="814.2" y="561" width="1.3" height="1.3" fill="#e81a12"/>
<rect x="808" y="577" width="1.3" height="1.3" fill="#e81a12"/>
<rect x="813.6" y="562.1" width="1.3" height="1.3" fill="#e81a12"/>
<rect x="813.4" y="565" width="1.3" height="1.3" fill="#e81a12"/>
<rect x="815.6" y="558.2" width="1.3" height="1.3" fill="#e07a1c"/>
<rect x="816.9" y="555.5" width="1.3" height="1.3" fill="#e07a1c"/>
<rect x="816.8" y="553.9" width="1.3" height="1.3" fill="#e81a12"/>
<rect x="803.8" y="588.2" width="1.3" height="1.3" fill="#e81a12"/>
<rect x="811.2" y="568.6" width="1.3" height="1.3" fill="#e81a12"/>
<rect x="816.1" y="557.5" width="1.3" height="1.3" fill="#e81a12"/>
<rect x="815.1" y="557.1" width="1.3" height="1.3" fill="#e81a12"/>
<rect x="809.9" y="572" width="1.3" height="1.3" fill="#e81a12"/>
<rect x="804.4" y="587.2" width="1.3" height="1.3" fill="#e81a12"/>
<rect x="818" y="551.5" width="1.3" height="1.3" fill="#e81a12"/>
<rect x="814.2" y="562.6" width="1.3" height="1.3" fill="#e81a12"/>
<rect x="806.5" y="581" width="1.3" height="1.3" fill="#e81a12"/>
<rect x="806.9" y="580.1" width="1.3" height="1.3" fill="#e81a12"/>
<rect x="817.8" y="551" width="1.3" height="1.3" fill="#e81a12"/>
<rect x="812.2" y="565.6" width="1.3" height="1.3" fill="#e81a12"/>
<rect x="813.4" y="563.6" width="1.3" height="1.3" fill="#e81a12"/>
<rect x="805.8" y="582.2" width="1.3" height="1.3" fill="#e81a12"/>
<rect x="815.5" y="560" width="1.3" height="1.3" fill="#e81a12"/>
<rect x="811.4" y="568.9" width="1.3" height="1.3" fill="#e07a1c"/>
<rect x="815.4" y="559.1" width="1.3" height="1.3" fill="#e81a12"/>
<rect x="813.5" y="563.9" width="1.3" height="1.3" fill="#e81a12"/>
<path d="M799.7 578.7 L803 577.3" stroke="#e07a1c" stroke-width="1.3"/>
<path d="M810 573.6 L810.8 574" stroke="#34d030" stroke-width="1.2"/>
<rect x="794" y="570.1" width="1.3" height="1.3" fill="#e81a12"/>
<rect x="791.1" y="562.2" width="1.3" height="1.3" fill="#e81a12"/>
<rect x="786.6" y="556" width="1.3" height="1.3" fill="#e81a12"/>
<rect x="792" y="565.2" width="1.3" height="1.3" fill="#e81a12"/>
<rect x="786.1" y="555.8" width="1.3" height="1.3" fill="#e81a12"/>
<rect x="794.8" y="569.9" width="1.3" height="1.3" fill="#e81a12"/>
<rect x="786.8" y="555.9" width="1.3" height="1.3" fill="#e81a12"/>
<rect x="792.2" y="564.2" width="1.3" height="1.3" fill="#e81a12"/>
<rect x="792.2" y="566.6" width="1.3" height="1.3" fill="#e81a12"/>
<rect x="793.9" y="566.6" width="1.3" height="1.3" fill="#e81a12"/>
<path d="M782.3 607.6 L783.6 607.9" stroke="#e81a12" stroke-width="1.3"/>
<path d="M779 610.7 L780.3 611" stroke="#e81a12" stroke-width="1.3"/>
<path d="M778 615 L779.3 615.3" stroke="#e81a12" stroke-width="1.3"/>
<path d="M890.5 487.5 L891.3 488.3" stroke="#34d030" stroke-width="1.2"/>
<path d="M887.7 493 L890.3 497.7" stroke="#9ccc24" stroke-width="1.3"/>
<path d="M885.7 499 L888 503.7" stroke="#e07a1c" stroke-width="1.3"/>
<path d="M890.5 452 L891.5 454" stroke="#e07a1c" stroke-width="1.1"/>
<path d="M435 519 C434.93 521.83 434.35 530 434.6 536 C434.85 542 436.03 548.33 436.5 555 C436.97 561.67 437.25 572.5 437.4 576" stroke="#e81a12" stroke-width="1.9" stroke-dasharray="2 0.4"/>
<path d="M417.8 555.3 L418.6 555.9" stroke="#34d030" stroke-width="1.2"/>
</g></svg>
<div id="rstrip" class="abs"></div>
<svg class="abs" style="left:200px;top:340px" width="12" height="20" viewBox="0 0 12 20"><path d="M8.5 7.8 V12.2 L5.8 10Z" fill="#2e2d2a"/><path d="M1.6 6 V14 M3 6 V14" stroke="#dcd9d4" stroke-width="0.5" stroke-dasharray="0.7 1.3"/></svg>
<svg class="abs" style="left:892px;top:340px" width="8" height="20" viewBox="0 0 8 20"><path d="M5.2 7.8 V12.2 L2.6 10Z" fill="#2e2d2a"/></svg>
<div id="timeh" class="abs hdr"><span class="abs" style="left:13.9px;top:0.6px">Time</span><div class="closeb" style="left:889.9px;top:0.9px"></div>
<svg class="abs" style="left:889.9px;top:0.9px" width="8.4" height="8" viewBox="0 0 8.4 8"><path d="M2.4 2.2 L6 5.8 M6 2.2 L2.4 5.8" stroke="#3c3b37" stroke-width="1"/></svg>
<svg class="abs" style="left:1.8px;top:1.2px" width="9" height="9" viewBox="0 0 9 9"><circle cx="4.3" cy="4.3" r="3.6" fill="#f4f2ee" stroke="#45443f" stroke-width="0.9"/><path d="M4.3 2 V4.5 L6 5.3" fill="none" stroke="#45443f" stroke-width="0.8"/></svg>
</div>
<div class="lab" style="left:5.8px;letter-spacing:-0.2px">ROS Time:</div><div class="inp" style="left:45.6px;width:74px">1561012318.78</div>
<div class="lab" style="left:123px;letter-spacing:-0.2px">ROS Elapsed:</div><div class="inp" style="left:173.2px;width:74px">44.14</div>
<div class="lab" style="left:250.6px">Wall Time:</div><div class="inp" style="left:291.2px;width:73.2px">1561012318.81</div>
<div class="lab" style="left:368.6px">Wall Elapsed:</div><div class="inp" style="left:418px;width:74.4px">44.12</div>
<div class="cb" style="left:833.4px;top:675.6px"></div><div class="lab" style="left:844px;letter-spacing:0.07px">Experimental</div>
<div id="status" class="abs">
<div class="btn" style="left:1.7px;top:0.4px;width:26.8px;height:12.4px;line-height:11.6px">Reset</div>
<div class="lab" style="left:31.9px;top:1.8px"><b class="abs" style="left:0.0px;top:0;letter-spacing:0.11px">Left-Click:</b><span class="abs" style="left:41.0px;top:0;letter-spacing:-0.07px">Rotate.</span><b class="abs" style="left:69.1px;top:0;letter-spacing:0.03px">Middle-Click:</b><span class="abs" style="left:119.8px;top:0;letter-spacing:-0.06px">Move X/Y.</span><b class="abs" style="left:157.4px;top:0;letter-spacing:0.08px">Right-Click/Mouse Wheel:</b><span class="abs" style="left:253.8px;top:0;letter-spacing:0.07px">: Zoom.</span><b class="abs" style="left:283.1px;top:0;letter-spacing:0.04px">Shift</b><span class="abs" style="left:300.4px;top:0;letter-spacing:0.07px">: More options.</span></div>
<div class="lab" style="left:866px;top:0.8px">31 fps</div>
<svg class="abs" style="left:890px;top:4px" width="10" height="10" viewBox="0 0 10 10"><path d="M8.5 3.5 L3.5 8.5 M8.5 6 L6 8.5" stroke="#cfcbc5" stroke-width="0.6" stroke-dasharray="0.8 0.8"/></svg>
</div>
</body></html>
